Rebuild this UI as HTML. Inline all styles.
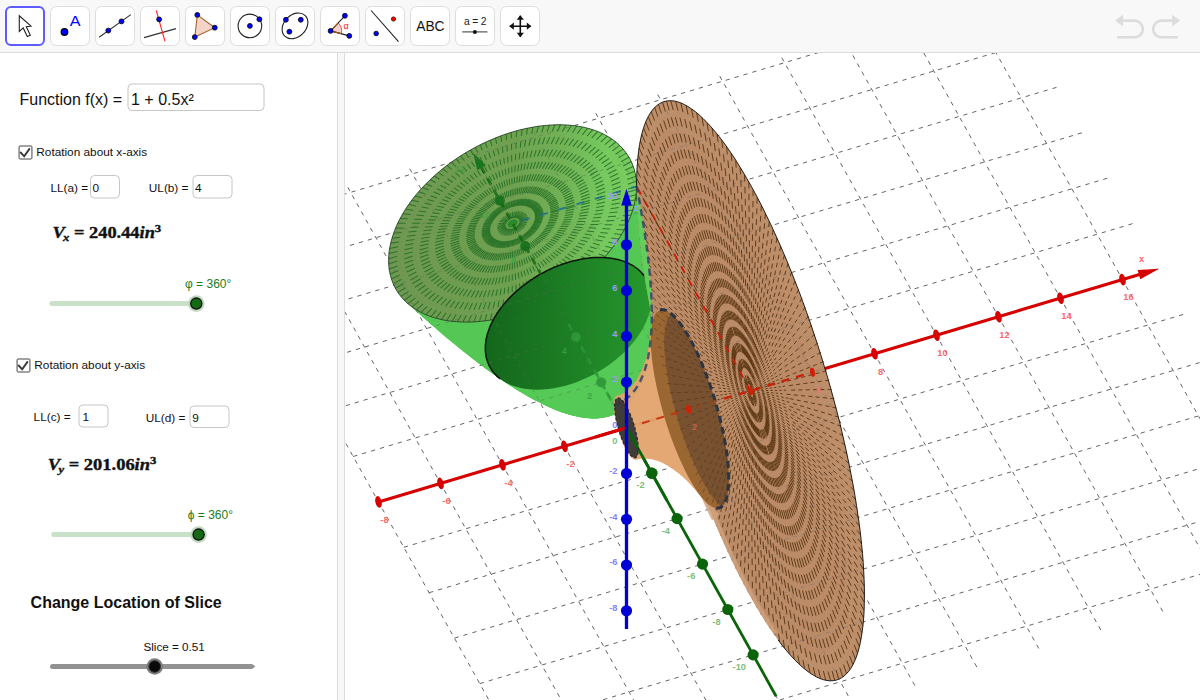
<!DOCTYPE html>
<html>
<head>
<meta charset="utf-8">
<title>Volumes of Revolution</title>
<style>
html,body{margin:0;padding:0;}
body{width:1200px;height:700px;overflow:hidden;background:#fff;font-family:"Liberation Sans",sans-serif;position:relative;color:#000;}
#toolbar{position:absolute;left:0;top:0;width:1200px;height:52px;background:#f8f8f8;border-bottom:1px solid #dcdcdc;}
.tb{position:absolute;top:6px;width:38px;height:38px;background:#fff;border:1px solid #dcdcdc;border-radius:6px;}
.tb.sel{border:2px solid #5b5bff;width:36px;height:36px;}
.tb svg{position:absolute;left:-1px;top:-1px;}
.tb.sel svg{left:-2px;top:-2px;}
#left{position:absolute;left:0;top:53px;width:337px;height:647px;background:#fff;}
#split{position:absolute;left:337px;top:53px;width:6px;height:647px;background:#f8f8f8;border-left:1px solid #dcdcdc;border-right:1px solid #dcdcdc;}
#view3d{position:absolute;left:345px;top:53px;}
.t{position:absolute;white-space:pre;line-height:1;}
.box{position:absolute;border:1px solid #c4c4c4;border-radius:4px;background:#fff;box-sizing:border-box;}
.cb{position:absolute;width:14px;height:14px;box-sizing:border-box;border:1px solid #6a6a6a;border-radius:2px;background:#fff;}
.m{font-family:"Liberation Serif",serif;font-weight:bold;}
.m i{font-style:italic;}
</style>
</head>
<body>
<div id="toolbar">
<svg width="1200" height="52" viewBox="0 0 1200 52" style="position:absolute;left:0;top:0" font-family="Liberation Sans, sans-serif"><rect x="6" y="7" width="38" height="38" rx="5" fill="#fff" stroke="#5c5cff" stroke-width="2"/><rect x="50.5" y="6.5" width="39" height="39" rx="6" fill="#fff" stroke="#dedede" stroke-width="1"/><rect x="95.5" y="6.5" width="39" height="39" rx="6" fill="#fff" stroke="#dedede" stroke-width="1"/><rect x="140.5" y="6.5" width="39" height="39" rx="6" fill="#fff" stroke="#dedede" stroke-width="1"/><rect x="185.5" y="6.5" width="39" height="39" rx="6" fill="#fff" stroke="#dedede" stroke-width="1"/><rect x="230.5" y="6.5" width="39" height="39" rx="6" fill="#fff" stroke="#dedede" stroke-width="1"/><rect x="275.5" y="6.5" width="39" height="39" rx="6" fill="#fff" stroke="#dedede" stroke-width="1"/><rect x="320.5" y="6.5" width="39" height="39" rx="6" fill="#fff" stroke="#dedede" stroke-width="1"/><rect x="365.5" y="6.5" width="39" height="39" rx="6" fill="#fff" stroke="#dedede" stroke-width="1"/><rect x="410.5" y="6.5" width="39" height="39" rx="6" fill="#fff" stroke="#dedede" stroke-width="1"/><rect x="455.5" y="6.5" width="39" height="39" rx="6" fill="#fff" stroke="#dedede" stroke-width="1"/><rect x="500.5" y="6.5" width="39" height="39" rx="6" fill="#fff" stroke="#dedede" stroke-width="1"/><path d="M19.3 15.8 L19.3 31.4 L23.2 27.9 L27.3 36.6 L30.3 35.2 L26.3 26.7 L31 26.2 Z" fill="#fff" stroke="#222" stroke-width="1.1" stroke-linejoin="miter"/><circle cx="64.5" cy="32" r="3.3" fill="#0000ff" stroke="#000" stroke-width="1.2"/><text x="69.7" y="25.7" font-size="14.3" fill="#0000ff" textLength="10.8" lengthAdjust="spacingAndGlyphs">A</text><line x1="99.1" y1="37.3" x2="130.8" y2="14.6" stroke="#333" stroke-width="1.1"/><circle cx="108.3" cy="30.6" r="2.45" fill="#0000ff" stroke="#000" stroke-width="0.8"/><circle cx="121.5" cy="21.4" r="2.45" fill="#0000ff" stroke="#000" stroke-width="0.8"/><line x1="144" y1="37.6" x2="176" y2="28.6" stroke="#333" stroke-width="1.1"/><line x1="156.2" y1="10.3" x2="165" y2="41.4" stroke="#ff2020" stroke-width="1.1"/><circle cx="159.1" cy="19.4" r="2.45" fill="#0000ff" stroke="#000" stroke-width="0.8"/><polygon points="197.3,14.9 214.8,27.7 194.8,37.1" fill="#f3d5c8" stroke="#a8642e" stroke-width="1.1"/><circle cx="197.3" cy="14.9" r="2.45" fill="#0000ff" stroke="#000" stroke-width="0.8"/><circle cx="214.8" cy="27.7" r="2.45" fill="#0000ff" stroke="#000" stroke-width="0.8"/><circle cx="194.8" cy="37.1" r="2.45" fill="#0000ff" stroke="#000" stroke-width="0.8"/><circle cx="249.9" cy="25.9" r="11.8" fill="none" stroke="#222" stroke-width="1.1"/><circle cx="249.9" cy="25.9" r="2.45" fill="#0000ff" stroke="#000" stroke-width="0.8"/><circle cx="259.4" cy="19.3" r="2.45" fill="#0000ff" stroke="#000" stroke-width="0.8"/><ellipse cx="295" cy="25.85" rx="14.5" ry="11" fill="none" stroke="#222" stroke-width="1.1" transform="rotate(-45 295 25.85)"/><circle cx="285.9" cy="19.8" r="2.45" fill="#0000ff" stroke="#000" stroke-width="0.8"/><circle cx="300.8" cy="19.8" r="2.45" fill="#0000ff" stroke="#000" stroke-width="0.8"/><circle cx="289.4" cy="31.7" r="2.45" fill="#0000ff" stroke="#000" stroke-width="0.8"/><path d="M330.6 30.9 L338.2 22.9 A11 11 0 0 1 341.2 33.7 Z" fill="#f6d2ca" stroke="#f04040" stroke-width="0.9"/><path d="M344.9 15.8 L330.6 30.9 L349.3 35.9" fill="none" stroke="#222" stroke-width="1.1"/><path d="M338.2 22.9 L330.6 30.9 L341.2 33.7" fill="none" stroke="#9a5a20" stroke-width="1.1"/><circle cx="330.6" cy="30.9" r="2.45" fill="#0000ff" stroke="#000" stroke-width="0.8"/><circle cx="344.9" cy="15.8" r="2.45" fill="#0000ff" stroke="#000" stroke-width="0.8"/><circle cx="349.3" cy="35.9" r="2.45" fill="#0000ff" stroke="#000" stroke-width="0.8"/><text x="346.1" y="28.9" font-size="9" fill="#ff1010" text-anchor="middle">α</text><line x1="371.1" y1="10.5" x2="398.5" y2="41.6" stroke="#222" stroke-width="1.1"/><circle cx="376.2" cy="33.5" r="2.3" fill="#0000ff" stroke="#000" stroke-width="0.8"/><circle cx="393.5" cy="19" r="2.1" fill="#ff0000" stroke="#400" stroke-width="0.8"/><text x="430.4" y="30.9" font-size="13.8" fill="#111" text-anchor="middle">ABC</text><text x="475.2" y="24.6" font-size="10.3" fill="#222" text-anchor="middle" textLength="22.5">a=2</text><line x1="462.2" y1="31.9" x2="487.5" y2="31.9" stroke="#444" stroke-width="1.1"/><circle cx="474.9" cy="31.9" r="2" fill="#111"/><path d="M509.8 26.2 h21 M520.3 15.7 v21" stroke="#111" stroke-width="1.6" fill="none"/><polygon points="531.3,26.2 526.8,29.8 526.8,22.6" fill="#111"/><polygon points="509.3,26.2 513.8,22.6 513.8,29.8" fill="#111"/><polygon points="520.3,37.2 516.7,32.7 523.9,32.7" fill="#111"/><polygon points="520.3,15.2 523.9,19.7 516.7,19.7" fill="#111"/><g fill="none" stroke="#dcdcdc" stroke-width="2.6"><path d="M1122 20.6 H1134.5 A7.6 7.6 0 0 1 1134.5 37.3 H1117.2"/><path d="M1174 20.6 H1161.5 A7.6 7.6 0 0 0 1161.5 37.3 H1178"/></g><polygon points="1115.2,20.6 1123,14.8 1123,26.4" fill="#dcdcdc"/><polygon points="1180,20.6 1172.2,14.8 1172.2,26.4" fill="#dcdcdc"/></svg>
</div>
<div id="left">
<svg width="337" height="647" viewBox="0 53 337 647" style="position:absolute;left:0;top:0" font-family="Liberation Sans, sans-serif"><text x="19.5" y="104.7" font-size="16" fill="#111" >Function f(x) =</text><rect x="128" y="84" width="136" height="26.5" rx="4" fill="#fff" stroke="#c6c6c6" stroke-width="1"/><text x="131" y="104.7" font-size="16" fill="#111" >1 + 0.5x²</text><rect x="19.1" y="146.1" width="12.8" height="12.8" rx="1.3" fill="#fff" stroke="#848484" stroke-width="1.5"/><path d="M20.2 152 l4 4.3 l5.6 -7.9" fill="none" stroke="#3a3a3a" stroke-width="1.9"/><text x="36.3" y="155.6" font-size="11.8" fill="#111" >Rotation about x-axis</text><text x="50.5" y="192" font-size="11.8" fill="#111" >LL(a) =</text><rect x="90.5" y="175.5" width="29" height="22.5" rx="4" fill="#fff" stroke="#c6c6c6" stroke-width="1"/><text x="92.6" y="192" font-size="11.8" fill="#111" >0</text><text x="148.8" y="192" font-size="11.8" fill="#111" >UL(b) =</text><rect x="193" y="175.5" width="39" height="22.5" rx="4" fill="#fff" stroke="#c6c6c6" stroke-width="1"/><text x="195" y="192" font-size="11.8" fill="#111" >4</text><text x="52.6" y="238" font-size="16" fill="#111" stroke="#111" stroke-width="0.35" font-family="Liberation Serif, serif" font-weight="bold" textLength="108.6" lengthAdjust="spacingAndGlyphs"><tspan font-style="italic">V</tspan><tspan font-style="italic" font-size="11" dy="2.6" dx="-1.5">x</tspan><tspan dy="-2.6"> = 240.44</tspan><tspan font-style="italic">in</tspan><tspan font-size="11" dy="-6">3</tspan></text><line x1="51.9" y1="303.6" x2="196.3" y2="303.6" stroke="#c9e0c9" stroke-width="5" stroke-linecap="round"/><circle cx="196.3" cy="303.6" r="8.3" fill="#b9d6b9" opacity="0.9"/><circle cx="196.3" cy="303.6" r="5.6" fill="#146a14" stroke="#101010" stroke-width="1.3"/><text x="185" y="288" font-size="12" fill="#1c7a1c" >φ = 360°</text><rect x="17.1" y="359.1" width="12.8" height="12.8" rx="1.3" fill="#fff" stroke="#848484" stroke-width="1.5"/><path d="M18.2 365 l4 4.3 l5.6 -7.9" fill="none" stroke="#3a3a3a" stroke-width="1.9"/><text x="34.3" y="368.7" font-size="11.8" fill="#111" >Rotation about y-axis</text><text x="33.6" y="421.2" font-size="11.8" fill="#111" >LL(c) =</text><rect x="79" y="405" width="29" height="22" rx="4" fill="#fff" stroke="#c6c6c6" stroke-width="1"/><text x="82.5" y="421.2" font-size="11.8" fill="#111" >1</text><text x="145.7" y="421.5" font-size="11.8" fill="#111" >UL(d) =</text><rect x="190" y="406" width="39" height="21.5" rx="4" fill="#fff" stroke="#c6c6c6" stroke-width="1"/><text x="192.3" y="421.5" font-size="11.8" fill="#111" >9</text><text x="47.8" y="470" font-size="16" fill="#111" stroke="#111" stroke-width="0.35" font-family="Liberation Serif, serif" font-weight="bold" textLength="108.6" lengthAdjust="spacingAndGlyphs"><tspan font-style="italic">V</tspan><tspan font-style="italic" font-size="11" dy="2.6" dx="-1.5">y</tspan><tspan dy="-2.6"> = 201.06</tspan><tspan font-style="italic">in</tspan><tspan font-size="11" dy="-6">3</tspan></text><line x1="53.7" y1="534.6" x2="198.6" y2="534.6" stroke="#c9e0c9" stroke-width="5" stroke-linecap="round"/><circle cx="198.6" cy="534.6" r="8.3" fill="#b9d6b9" opacity="0.9"/><circle cx="198.6" cy="534.6" r="5.6" fill="#146a14" stroke="#101010" stroke-width="1.3"/><text x="187.8" y="518.7" font-size="12" fill="#1c7a1c" >ϕ = 360°</text><text x="30.6" y="607.5" font-size="16" fill="#111" font-weight="bold">Change Location of Slice</text><text x="143.4" y="650.7" font-size="11.7" fill="#111" >Slice = 0.51</text><path d="M52.5 664 H252 L255.5 666.5 L252 669 H52.5 A2.5 2.5 0 0 1 52.5 664 Z" fill="#929292"/><circle cx="154.7" cy="666.5" r="8.3" fill="#7d7d7d"/><circle cx="154.7" cy="666.5" r="5.8" fill="#0a0a0a" stroke="#333" stroke-width="1"/></svg>
</div>
<div id="split"></div>
<svg id="view3d" width="855" height="647" viewBox="345 53 855 647"><g stroke="#666" stroke-width="1" stroke-dasharray="4.3 5" fill="none"><line x1="530.4" y1="774.4" x2="1311.6" y2="541" /><line x1="505.1" y1="729" x2="1286.3" y2="495.6" /><line x1="479.8" y1="683.6" x2="1261" y2="450.2" /><line x1="454.5" y1="638.1" x2="1235.7" y2="404.8" /><line x1="429.1" y1="592.7" x2="1210.3" y2="359.4" /><line x1="403.8" y1="547.3" x2="1185" y2="313.9" /><line x1="378.5" y1="501.9" x2="1159.7" y2="268.5" /><line x1="353.2" y1="456.5" x2="1134.4" y2="223.1" /><line x1="327.9" y1="411" x2="1109.1" y2="177.7" /><line x1="302.5" y1="365.6" x2="1083.7" y2="132.3" /><line x1="277.2" y1="320.2" x2="1058.4" y2="86.8" /><line x1="251.9" y1="274.8" x2="1033.1" y2="41.4" /><line x1="226.6" y1="229.4" x2="1007.8" y2="-4" /><line x1="542.8" y1="796.7" x2="223.4" y2="223.7" /><line x1="604.8" y1="778.1" x2="285.4" y2="205.2" /><line x1="666.8" y1="759.6" x2="347.4" y2="186.6" /><line x1="728.8" y1="741.1" x2="409.4" y2="168.1" /><line x1="790.8" y1="722.6" x2="471.4" y2="149.6" /><line x1="852.8" y1="704.1" x2="533.4" y2="131.1" /><line x1="914.8" y1="685.5" x2="595.4" y2="112.6" /><line x1="976.8" y1="667" x2="657.4" y2="94" /><line x1="1038.8" y1="648.5" x2="719.4" y2="75.5" /><line x1="1100.8" y1="630" x2="781.4" y2="57" /><line x1="1162.8" y1="611.5" x2="843.4" y2="38.5" /><line x1="1224.8" y1="592.9" x2="905.4" y2="20" /><line x1="1286.8" y1="574.4" x2="967.4" y2="1.4" /></g>
<line x1="378.5" y1="501.9" x2="1141.1" y2="274.1" stroke="#d60000" stroke-width="3.1"/>
<polygon points="1159.1,268.7 1140.3,279.3 1137.6,270.1" fill="#d60000"/>
<ellipse cx="378.5" cy="501.9" rx="3.1" ry="5.9" fill="#d60000" transform="rotate(-14 378.5 501.9)"/>
<ellipse cx="440.5" cy="483.4" rx="3.1" ry="5.9" fill="#d60000" transform="rotate(-14 440.5 483.4)"/>
<ellipse cx="502.5" cy="464.8" rx="3.1" ry="5.9" fill="#d60000" transform="rotate(-14 502.5 464.8)"/>
<ellipse cx="564.5" cy="446.3" rx="3.1" ry="5.9" fill="#d60000" transform="rotate(-14 564.5 446.3)"/>
<ellipse cx="688.5" cy="409.3" rx="3.1" ry="5.9" fill="#d60000" transform="rotate(-14 688.5 409.3)"/>
<ellipse cx="750.5" cy="390.8" rx="3.1" ry="5.9" fill="#d60000" transform="rotate(-14 750.5 390.8)"/>
<ellipse cx="812.5" cy="372.2" rx="3.1" ry="5.9" fill="#d60000" transform="rotate(-14 812.5 372.2)"/>
<ellipse cx="874.5" cy="353.7" rx="3.1" ry="5.9" fill="#d60000" transform="rotate(-14 874.5 353.7)"/>
<ellipse cx="936.5" cy="335.2" rx="3.1" ry="5.9" fill="#d60000" transform="rotate(-14 936.5 335.2)"/>
<ellipse cx="998.5" cy="316.7" rx="3.1" ry="5.9" fill="#d60000" transform="rotate(-14 998.5 316.7)"/>
<ellipse cx="1060.5" cy="298.2" rx="3.1" ry="5.9" fill="#d60000" transform="rotate(-14 1060.5 298.2)"/>
<ellipse cx="1122.5" cy="279.6" rx="3.1" ry="5.9" fill="#d60000" transform="rotate(-14 1122.5 279.6)"/>
<line x1="776.1" y1="696.2" x2="474.6" y2="155.3" stroke="#0a640a" stroke-width="2.8"/>
<circle cx="753.1" cy="654.9" r="5.6" fill="#0a640a"/>
<circle cx="727.8" cy="609.5" r="5.6" fill="#0a640a"/>
<circle cx="702.5" cy="564.1" r="5.6" fill="#0a640a"/>
<circle cx="677.1" cy="518.6" r="5.6" fill="#0a640a"/>
<circle cx="651.8" cy="473.2" r="5.6" fill="#0a640a"/>
<g fill="#50c650" opacity="0.97"><circle r="1" transform="matrix(1.77 -0.53 0 -1.31 613.8 405.1)"/><circle r="1" transform="matrix(3.54 -1.06 0 -2.61 613.8 404.9)"/><circle r="1" transform="matrix(5.31 -1.59 0 -3.92 613.7 404.8)"/><circle r="1" transform="matrix(7.09 -2.12 0 -5.23 613.5 404.5)"/><circle r="1" transform="matrix(8.86 -2.65 0 -6.53 613.3 404.2)"/><circle r="1" transform="matrix(10.63 -3.17 0 -7.84 613.1 403.8)"/><circle r="1" transform="matrix(12.4 -3.7 0 -9.15 612.8 403.3)"/><circle r="1" transform="matrix(14.17 -4.23 0 -10.45 612.5 402.7)"/><circle r="1" transform="matrix(15.94 -4.76 0 -11.76 612.2 402.1)"/><circle r="1" transform="matrix(17.71 -5.29 0 -13.07 611.8 401.4)"/><circle r="1" transform="matrix(19.49 -5.82 0 -14.38 611.3 400.6)"/><circle r="1" transform="matrix(21.26 -6.35 0 -15.68 610.9 399.8)"/><circle r="1" transform="matrix(23.03 -6.88 0 -16.99 610.3 398.8)"/><circle r="1" transform="matrix(24.8 -7.41 0 -18.3 609.8 397.8)"/><circle r="1" transform="matrix(26.57 -7.94 0 -19.6 609.2 396.7)"/><circle r="1" transform="matrix(28.34 -8.47 0 -20.91 608.5 395.6)"/><circle r="1" transform="matrix(30.11 -9 0 -22.22 607.9 394.4)"/><circle r="1" transform="matrix(31.89 -9.52 0 -23.52 607.1 393.1)"/><circle r="1" transform="matrix(33.66 -10.05 0 -24.83 606.4 391.7)"/><circle r="1" transform="matrix(35.43 -10.58 0 -26.14 605.6 390.3)"/><circle r="1" transform="matrix(37.2 -11.11 0 -27.44 604.7 388.7)"/><circle r="1" transform="matrix(38.97 -11.64 0 -28.75 603.8 387.1)"/><circle r="1" transform="matrix(40.74 -12.17 0 -30.06 602.9 385.5)"/><circle r="1" transform="matrix(42.51 -12.7 0 -31.36 601.9 383.7)"/><circle r="1" transform="matrix(44.29 -13.23 0 -32.67 600.9 381.9)"/><circle r="1" transform="matrix(46.06 -13.76 0 -33.98 599.9 380)"/><circle r="1" transform="matrix(47.83 -14.29 0 -35.29 598.8 378.1)"/><circle r="1" transform="matrix(49.6 -14.82 0 -36.59 597.6 376)"/><circle r="1" transform="matrix(51.37 -15.35 0 -37.9 596.5 373.9)"/><circle r="1" transform="matrix(53.14 -15.87 0 -39.21 595.2 371.7)"/><circle r="1" transform="matrix(54.91 -16.4 0 -40.51 594 369.5)"/><circle r="1" transform="matrix(56.69 -16.93 0 -41.82 592.7 367.1)"/><circle r="1" transform="matrix(58.46 -17.46 0 -43.13 591.3 364.7)"/><circle r="1" transform="matrix(60.23 -17.99 0 -44.43 589.9 362.2)"/><circle r="1" transform="matrix(62 -18.52 0 -45.74 588.5 359.7)"/><circle r="1" transform="matrix(63.77 -19.05 0 -47.05 587.1 357)"/><circle r="1" transform="matrix(65.54 -19.58 0 -48.35 585.5 354.3)"/><circle r="1" transform="matrix(67.31 -20.11 0 -49.66 584 351.6)"/><circle r="1" transform="matrix(69.09 -20.64 0 -50.97 582.4 348.7)"/><circle r="1" transform="matrix(70.86 -21.17 0 -52.27 580.8 345.8)"/><circle r="1" transform="matrix(72.63 -21.69 0 -53.58 579.1 342.8)"/><circle r="1" transform="matrix(74.4 -22.22 0 -54.89 577.4 339.7)"/><circle r="1" transform="matrix(76.17 -22.75 0 -56.19 575.6 336.5)"/><circle r="1" transform="matrix(77.94 -23.28 0 -57.5 573.8 333.3)"/><circle r="1" transform="matrix(79.71 -23.81 0 -58.81 572 330)"/><circle r="1" transform="matrix(81.49 -24.34 0 -60.12 570.1 326.6)"/><circle r="1" transform="matrix(83.26 -24.87 0 -61.42 568.2 323.2)"/><circle r="1" transform="matrix(85.03 -25.4 0 -62.73 566.2 319.7)"/><circle r="1" transform="matrix(86.8 -25.93 0 -64.04 564.2 316.1)"/><circle r="1" transform="matrix(88.57 -26.46 0 -65.34 562.2 312.4)"/><circle r="1" transform="matrix(90.34 -26.99 0 -66.65 560.1 308.7)"/><circle r="1" transform="matrix(92.11 -27.52 0 -67.96 557.9 304.8)"/><circle r="1" transform="matrix(93.89 -28.04 0 -69.26 555.8 300.9)"/><circle r="1" transform="matrix(95.66 -28.57 0 -70.57 553.6 297)"/><circle r="1" transform="matrix(97.43 -29.1 0 -71.88 551.3 292.9)"/><circle r="1" transform="matrix(99.2 -29.63 0 -73.18 549 288.8)"/><circle r="1" transform="matrix(100.97 -30.16 0 -74.49 546.7 284.6)"/><circle r="1" transform="matrix(102.74 -30.69 0 -75.8 544.3 280.4)"/><circle r="1" transform="matrix(104.51 -31.22 0 -77.1 541.9 276)"/><circle r="1" transform="matrix(106.29 -31.75 0 -78.41 539.4 271.6)"/><circle r="1" transform="matrix(108.06 -32.28 0 -79.72 536.9 267.1)"/><circle r="1" transform="matrix(109.83 -32.81 0 -81.03 534.4 262.6)"/><circle r="1" transform="matrix(111.6 -33.34 0 -82.33 531.8 257.9)"/><circle r="1" transform="matrix(113.37 -33.87 0 -83.64 529.2 253.2)"/><circle r="1" transform="matrix(115.14 -34.39 0 -84.95 526.5 248.4)"/><circle r="1" transform="matrix(116.91 -34.92 0 -86.25 523.8 243.6)"/><circle r="1" transform="matrix(118.69 -35.45 0 -87.56 521.1 238.6)"/><circle r="1" transform="matrix(120.46 -35.98 0 -88.87 518.3 233.6)"/><circle r="1" transform="matrix(122.23 -36.51 0 -90.17 515.4 228.6)"/><circle r="1" transform="matrix(124 -37.04 0 -91.48 512.6 223.4)"/></g>
<defs><linearGradient id="gdisc" gradientUnits="userSpaceOnUse" x1="390" y1="0" x2="640" y2="0"><stop offset="0" stop-color="#709652"/><stop offset="0.5" stop-color="#70a050"/><stop offset="0.7" stop-color="#74b257"/><stop offset="0.85" stop-color="#78c85f"/><stop offset="1" stop-color="#7ccf62"/></linearGradient></defs>
<polygon points="636.6,186.4 636.3,180.1 635.4,174 633.9,168.2 631.8,162.6 629.1,157.3 625.8,152.4 622,147.8 617.7,143.5 612.9,139.7 607.5,136.2 601.8,133.2 595.5,130.6 588.9,128.5 581.9,126.9 574.6,125.7 566.9,125 559,124.7 550.9,125 542.6,125.7 534.1,126.9 525.5,128.6 516.9,130.7 508.2,133.3 499.6,136.3 491,139.8 482.6,143.6 474.2,147.9 466.1,152.5 458.2,157.4 450.6,162.7 443.2,168.3 436.2,174.1 429.6,180.2 423.4,186.5 417.6,193 412.2,199.6 407.4,206.3 403.1,213.2 399.3,220 396,226.9 393.4,233.8 391.3,240.6 389.8,247.4 388.9,254 388.6,260.5 388.9,266.7 389.8,272.8 391.3,278.7 393.4,284.2 396,289.5 399.3,294.5 403.1,299.1 407.4,303.3 412.2,307.1 417.6,310.6 423.4,313.6 429.6,316.2 436.2,318.3 443.2,320 450.6,321.2 458.2,321.9 466.1,322.1 474.2,321.9 482.6,321.1 491,319.9 499.6,318.3 508.2,316.1 516.9,313.5 525.5,310.5 534.1,307.1 542.6,303.2 550.9,299 559,294.4 566.9,289.4 574.6,284.1 581.9,278.5 588.9,272.7 595.5,266.6 601.8,260.3 607.5,253.8 612.9,247.2 617.7,240.5 622,233.7 625.8,226.8 629.1,219.9 631.8,213 633.9,206.2 635.4,199.5 636.3,192.8 636.6,186.4" fill="url(#gdisc)" opacity="0.97"/>
<path d="M628 188.9l8.5 -2.5M612.5 193.6l8.5 -2.5M597 198.2l8.5 -2.5M581.5 202.8l8.5 -2.5M566 207.5l8.5 -2.5M550.5 212.1l8.5 -2.5M535 216.7l8.5 -2.5M519.5 221.3l8.5 -2.5M627.8 184.2l8.5 -2.9M612.3 189.4l8.5 -2.9M596.8 194.7l8.5 -2.9M581.3 200l8.5 -2.9M565.9 205.2l8.5 -2.9M550.4 210.5l8.5 -2.9M534.9 215.8l8.5 -2.9M627.2 179.4l8.5 -3.2M611.8 185.3l8.5 -3.2M596.4 191.2l8.5 -3.2M581 197.2l8.5 -3.2M565.6 203.1l8.5 -3.2M550.2 209l8.5 -3.2M534.8 214.9l8.5 -3.2M626.2 174.8l8.4 -3.6M611 181.3l8.4 -3.6M595.7 187.9l8.4 -3.6M580.4 194.4l8.4 -3.6M565.2 200.9l8.4 -3.6M549.9 207.4l8.4 -3.6M534.6 214l8.4 -3.6M519.4 220.5l8.4 -3.6M624.9 170.3l8.3 -3.9M609.8 177.4l8.3 -3.9M594.7 184.6l8.3 -3.9M579.6 191.7l8.3 -3.9M564.5 198.8l8.3 -3.9M549.4 206l8.3 -3.9M534.4 213.1l8.3 -3.9M623.1 166l8.2 -4.2M608.3 173.7l8.2 -4.2M593.4 181.4l8.2 -4.2M578.6 189.1l8.2 -4.2M563.7 196.8l8.2 -4.2M548.9 204.5l8.2 -4.2M534 212.3l8.2 -4.2M621 161.8l8 -4.5M606.4 170.1l8 -4.5M591.8 178.4l8 -4.5M577.3 186.6l8 -4.5M562.7 194.9l8 -4.5M548.2 203.2l8 -4.5M533.6 211.5l8 -4.5M519 219.7l8 -4.5M618.4 157.9l7.8 -4.8M604.2 166.7l7.8 -4.8M590 175.5l7.8 -4.8M575.8 184.3l7.8 -4.8M561.6 193.1l7.8 -4.8M547.3 201.9l7.8 -4.8M533.1 210.7l7.8 -4.8M615.5 154.2l7.6 -5.1M601.7 163.5l7.6 -5.1M587.9 172.8l7.6 -5.1M574 182.1l7.6 -5.1M560.2 191.4l7.6 -5.1M546.4 200.7l7.6 -5.1M532.5 210l7.6 -5.1M612.3 150.8l7.4 -5.4M598.9 160.5l7.4 -5.4M585.5 170.3l7.4 -5.4M572.1 180.1l7.4 -5.4M558.7 189.8l7.4 -5.4M545.3 199.6l7.4 -5.4M531.9 209.3l7.4 -5.4M518.5 219.1l7.4 -5.4M608.7 147.6l7.1 -5.6M595.8 157.8l7.1 -5.6M582.9 168l7.1 -5.6M570 178.2l7.1 -5.6M557.1 188.3l7.1 -5.6M544.1 198.5l7.1 -5.6M531.2 208.7l7.1 -5.6M604.8 144.7l6.8 -5.8M592.4 155.3l6.8 -5.8M580 165.9l6.8 -5.8M567.7 176.4l6.8 -5.8M555.3 187l6.8 -5.8M542.9 197.6l6.8 -5.8M530.5 208.1l6.8 -5.8M600.7 142.1l6.5 -6M588.9 153.1l6.5 -6M577 164l6.5 -6M565.2 174.9l6.5 -6M553.3 185.8l6.5 -6M541.5 196.7l6.5 -6M529.7 207.6l6.5 -6M517.8 218.6l6.5 -6M596.4 139.8l6.2 -6.2M585.1 151.1l6.2 -6.2M573.8 162.3l6.2 -6.2M562.6 173.5l6.2 -6.2M551.3 184.7l6.2 -6.2M540.1 196l6.2 -6.2M528.8 207.2l6.2 -6.2M591.8 137.9l5.9 -6.3M581.2 149.4l5.9 -6.3M570.5 160.8l5.9 -6.3M559.9 172.3l5.9 -6.3M549.2 183.8l5.9 -6.3M538.6 195.3l5.9 -6.3M527.9 206.8l5.9 -6.3M587.1 136.2l5.5 -6.4M577.1 147.9l5.5 -6.4M567.1 159.6l5.5 -6.4M557.1 171.3l5.5 -6.4M547.1 183l5.5 -6.4M537.1 194.8l5.5 -6.4M527 206.5l5.5 -6.4M517 218.2l5.5 -6.4M582.3 134.8l5.2 -6.5M573 146.7l5.2 -6.5M563.6 158.6l5.2 -6.5M554.2 170.5l5.2 -6.5M544.8 182.4l5.2 -6.5M535.5 194.3l5.2 -6.5M526.1 206.2l5.2 -6.5M577.4 133.6l4.8 -6.6M568.7 145.7l4.8 -6.6M560 157.7l4.8 -6.6M551.3 169.8l4.8 -6.6M542.6 181.9l4.8 -6.6M533.9 193.9l4.8 -6.6M525.1 206l4.8 -6.6M572.4 132.7l4.4 -6.7M564.4 144.9l4.4 -6.7M556.4 157.1l4.4 -6.7M548.3 169.3l4.4 -6.7M540.3 181.5l4.4 -6.7M532.2 193.6l4.4 -6.7M524.2 205.8l4.4 -6.7M516.1 218l4.4 -6.7M567.4 132.1l4.1 -6.7M560 144.4l4.1 -6.7M552.7 156.6l4.1 -6.7M545.3 168.9l4.1 -6.7M537.9 181.2l4.1 -6.7M530.6 193.4l4.1 -6.7M523.2 205.7l4.1 -6.7M562.3 131.7l3.7 -6.8M555.6 144l3.7 -6.8M549 156.4l3.7 -6.8M542.3 168.7l3.7 -6.8M535.6 181l3.7 -6.8M528.9 193.3l3.7 -6.8M522.2 205.6l3.7 -6.8M557.2 131.6l3.3 -6.8M551.2 143.9l3.3 -6.8M545.2 156.2l3.3 -6.8M539.2 168.6l3.3 -6.8M533.2 180.9l3.3 -6.8M527.2 193.2l3.3 -6.8M521.2 205.6l3.3 -6.8M515.2 217.9l3.3 -6.8M552.1 131.6l2.9 -6.8M546.8 143.9l2.9 -6.8M541.5 156.3l2.9 -6.8M536.2 168.6l2.9 -6.8M530.9 180.9l2.9 -6.8M525.5 193.3l2.9 -6.8M520.2 205.6l2.9 -6.8M547 131.9l2.5 -6.8M542.3 144.2l2.5 -6.8M537.7 156.5l2.5 -6.8M533.1 168.8l2.5 -6.8M528.5 181.1l2.5 -6.8M523.9 193.3l2.5 -6.8M519.2 205.6l2.5 -6.8M541.8 132.3l2.2 -6.7M537.9 144.6l2.2 -6.7M534 156.8l2.2 -6.7M530 169l2.2 -6.7M526.1 181.3l2.2 -6.7M522.2 193.5l2.2 -6.7M518.2 205.7l2.2 -6.7M514.3 218l2.2 -6.7M536.7 132.9l1.8 -6.7M533.5 145.1l1.8 -6.7M530.2 157.3l1.8 -6.7M527 169.4l1.8 -6.7M523.7 181.6l1.8 -6.7M520.5 193.7l1.8 -6.7M517.2 205.9l1.8 -6.7M531.6 133.8l1.4 -6.6M529 145.8l1.4 -6.6M526.5 157.8l1.4 -6.6M523.9 169.9l1.4 -6.6M521.4 181.9l1.4 -6.6M518.8 194l1.4 -6.6M516.3 206l1.4 -6.6M526.5 134.7l1 -6.6M524.6 146.6l1 -6.6M522.8 158.6l1 -6.6M520.9 170.5l1 -6.6M519 182.4l1 -6.6M517.1 194.3l1 -6.6M515.3 206.2l1 -6.6M513.4 218.1l1 -6.6M521.4 135.9l0.7 -6.5M520.3 147.6l0.7 -6.5M519.1 159.4l0.7 -6.5M517.9 171.1l0.7 -6.5M516.7 182.9l0.7 -6.5M515.5 194.7l0.7 -6.5M514.3 206.4l0.7 -6.5M516.4 137.2l0.3 -6.4M515.9 148.8l0.3 -6.4M515.4 160.3l0.3 -6.4M514.9 171.9l0.3 -6.4M514.3 183.5l0.3 -6.4M513.8 195.1l0.3 -6.4M513.3 206.7l0.3 -6.4M511.4 138.6l-0.1 -6.3M511.6 150l-0.1 -6.3M511.7 161.4l-0.1 -6.3M511.9 172.8l-0.1 -6.3M512 184.2l-0.1 -6.3M512.2 195.6l-0.1 -6.3M512.3 207l-0.1 -6.3M512.5 218.3l-0.1 -6.3M506.5 140.2l-0.4 -6.1M507.3 151.4l-0.4 -6.1M508.1 162.6l-0.4 -6.1M508.9 173.7l-0.4 -6.1M509.7 184.9l-0.4 -6.1M510.6 196.1l-0.4 -6.1M511.4 207.3l-0.4 -6.1M501.6 141.9l-0.8 -6M503 152.9l-0.8 -6M504.5 163.8l-0.8 -6M506 174.8l-0.8 -6M507.5 185.7l-0.8 -6M508.9 196.7l-0.8 -6M510.4 207.6l-0.8 -6M496.7 143.8l-1.2 -5.9M498.8 154.5l-1.2 -5.9M501 165.2l-1.2 -5.9M503.1 175.9l-1.2 -5.9M505.2 186.6l-1.2 -5.9M507.4 197.3l-1.2 -5.9M509.5 208l-1.2 -5.9M511.6 218.7l-1.2 -5.9M491.9 145.8l-1.5 -5.7M494.7 156.2l-1.5 -5.7M497.4 166.7l-1.5 -5.7M500.2 177.1l-1.5 -5.7M503 187.5l-1.5 -5.7M505.8 197.9l-1.5 -5.7M508.5 208.4l-1.5 -5.7M487.1 148l-1.9 -5.6M490.6 158.1l-1.9 -5.6M494 168.2l-1.9 -5.6M497.4 178.4l-1.9 -5.6M500.8 188.5l-1.9 -5.6M504.2 198.6l-1.9 -5.6M507.6 208.8l-1.9 -5.6M482.4 150.2l-2.2 -5.4M486.5 160.1l-2.2 -5.4M490.5 169.9l-2.2 -5.4M494.6 179.7l-2.2 -5.4M498.6 189.5l-2.2 -5.4M502.7 199.4l-2.2 -5.4M506.7 209.2l-2.2 -5.4M510.8 219l-2.2 -5.4M477.8 152.6l-2.6 -5.2M482.5 162.1l-2.6 -5.2M487.1 171.6l-2.6 -5.2M491.8 181.1l-2.6 -5.2M496.5 190.6l-2.6 -5.2M501.1 200.2l-2.6 -5.2M505.8 209.7l-2.6 -5.2M473.2 155.1l-2.9 -5M478.5 164.3l-2.9 -5M483.8 173.5l-2.9 -5M489.1 182.6l-2.9 -5M494.4 191.8l-2.9 -5M499.6 201l-2.9 -5M504.9 210.2l-2.9 -5M468.7 157.7l-3.2 -4.9M474.6 166.6l-3.2 -4.9M480.5 175.4l-3.2 -4.9M486.4 184.2l-3.2 -4.9M492.3 193l-3.2 -4.9M498.2 201.8l-3.2 -4.9M504.1 210.7l-3.2 -4.9M509.9 219.5l-3.2 -4.9M464.3 160.5l-3.6 -4.6M470.8 168.9l-3.6 -4.6M477.3 177.4l-3.6 -4.6M483.8 185.8l-3.6 -4.6M490.2 194.3l-3.6 -4.6M496.7 202.7l-3.6 -4.6M503.2 211.2l-3.6 -4.6M460 163.3l-3.9 -4.4M467 171.4l-3.9 -4.4M474.1 179.5l-3.9 -4.4M481.2 187.5l-3.9 -4.4M488.2 195.6l-3.9 -4.4M495.3 203.7l-3.9 -4.4M502.4 211.7l-3.9 -4.4M455.7 166.3l-4.2 -4.2M463.4 174l-4.2 -4.2M471 181.6l-4.2 -4.2M478.6 189.3l-4.2 -4.2M486.3 197l-4.2 -4.2M493.9 204.7l-4.2 -4.2M501.5 212.3l-4.2 -4.2M509.2 220l-4.2 -4.2M451.5 169.4l-4.5 -4M459.7 176.6l-4.5 -4M467.9 183.9l-4.5 -4M476.1 191.2l-4.5 -4M484.3 198.4l-4.5 -4M492.5 205.7l-4.5 -4M500.7 212.9l-4.5 -4M447.5 172.6l-4.8 -3.8M456.2 179.4l-4.8 -3.8M464.9 186.2l-4.8 -3.8M473.7 193.1l-4.8 -3.8M482.4 199.9l-4.8 -3.8M491.2 206.7l-4.8 -3.8M499.9 213.5l-4.8 -3.8M443.5 175.9l-5.1 -3.5M452.7 182.2l-5.1 -3.5M462 188.6l-5.1 -3.5M471.3 195l-5.1 -3.5M480.6 201.4l-5.1 -3.5M489.9 207.8l-5.1 -3.5M499.2 214.2l-5.1 -3.5M508.4 220.6l-5.1 -3.5M439.6 179.3l-5.4 -3.3M449.4 185.2l-5.4 -3.3M459.2 191.1l-5.4 -3.3M469 197.1l-5.4 -3.3M478.8 203l-5.4 -3.3M488.6 208.9l-5.4 -3.3M498.4 214.8l-5.4 -3.3M435.8 182.8l-5.7 -3M446.1 188.2l-5.7 -3M456.4 193.7l-5.7 -3M466.7 199.1l-5.7 -3M477 204.6l-5.7 -3M487.4 210.1l-5.7 -3M497.7 215.5l-5.7 -3M432.1 186.4l-5.9 -2.7M442.9 191.4l-5.9 -2.7M453.7 196.3l-5.9 -2.7M464.5 201.3l-5.9 -2.7M475.3 206.3l-5.9 -2.7M486.1 211.2l-5.9 -2.7M497 216.2l-5.9 -2.7M507.8 221.2l-5.9 -2.7M428.6 190.1l-6.2 -2.5M439.9 194.6l-6.2 -2.5M451.1 199l-6.2 -2.5M462.4 203.5l-6.2 -2.5M473.7 208l-6.2 -2.5M485 212.5l-6.2 -2.5M496.3 216.9l-6.2 -2.5M425.2 193.9l-6.5 -2.2M436.9 197.9l-6.5 -2.2M448.7 201.8l-6.5 -2.2M460.4 205.8l-6.5 -2.2M472.1 209.8l-6.5 -2.2M483.9 213.7l-6.5 -2.2M495.6 217.7l-6.5 -2.2M421.9 197.8l-6.7 -1.9M434.1 201.3l-6.7 -1.9M446.3 204.7l-6.7 -1.9M458.4 208.1l-6.7 -1.9M470.6 211.6l-6.7 -1.9M482.8 215l-6.7 -1.9M495 218.4l-6.7 -1.9M507.1 221.9l-6.7 -1.9M418.8 201.8l-6.9 -1.6M431.4 204.7l-6.9 -1.6M444 207.6l-6.9 -1.6M456.6 210.5l-6.9 -1.6M469.2 213.4l-6.9 -1.6M481.8 216.3l-6.9 -1.6M494.4 219.2l-6.9 -1.6M415.8 205.9l-7.1 -1.3M428.8 208.3l-7.1 -1.3M441.8 210.6l-7.1 -1.3M454.8 213l-7.1 -1.3M467.8 215.3l-7.1 -1.3M480.8 217.7l-7.1 -1.3M493.8 220l-7.1 -1.3M413 210.2l-7.4 -1M426.3 211.9l-7.4 -1M439.7 213.7l-7.4 -1M453.1 215.5l-7.4 -1M466.5 217.3l-7.4 -1M479.9 219.1l-7.4 -1M493.2 220.8l-7.4 -1M506.6 222.6l-7.4 -1M410.3 214.5l-7.6 -0.7M424.1 215.7l-7.6 -0.7M437.8 216.9l-7.6 -0.7M451.5 218.1l-7.6 -0.7M465.3 219.3l-7.6 -0.7M479 220.5l-7.6 -0.7M492.7 221.7l-7.6 -0.7M407.9 218.8l-7.7 -0.3M421.9 219.5l-7.7 -0.3M436 220.1l-7.7 -0.3M450.1 220.7l-7.7 -0.3M464.1 221.3l-7.7 -0.3M478.2 221.9l-7.7 -0.3M492.2 222.5l-7.7 -0.3M405.6 223.3l-7.9 -0M420 223.3l-7.9 -0M434.4 223.3l-7.9 -0M448.7 223.4l-7.9 -0M463.1 223.4l-7.9 -0M477.4 223.4l-7.9 -0M491.8 223.4l-7.9 -0M506.2 223.4l-7.9 -0M403.6 227.9l-8 0.3M418.3 227.3l-8 0.3M432.9 226.7l-8 0.3M447.5 226.1l-8 0.3M462.2 225.5l-8 0.3M476.8 224.9l-8 0.3M491.4 224.3l-8 0.3M401.8 232.5l-8.2 0.7M416.7 231.3l-8.2 0.7M431.6 230.1l-8.2 0.7M446.5 228.8l-8.2 0.7M461.3 227.6l-8.2 0.7M476.2 226.4l-8.2 0.7M491.1 225.2l-8.2 0.7M400.3 237.2l-8.3 1M415.4 235.3l-8.3 1M430.5 233.5l-8.3 1M445.5 231.6l-8.3 1M460.6 229.8l-8.3 1M475.7 227.9l-8.3 1M490.8 226.1l-8.3 1M505.9 224.2l-8.3 1M399.1 241.9l-8.4 1.4M414.3 239.4l-8.4 1.4M429.6 237l-8.4 1.4M444.8 234.5l-8.4 1.4M460 232l-8.4 1.4M475.3 229.5l-8.4 1.4M490.5 227l-8.4 1.4M398.1 246.7l-8.5 1.7M413.5 243.6l-8.5 1.7M428.9 240.5l-8.5 1.7M444.2 237.3l-8.5 1.7M459.6 234.2l-8.5 1.7M475 231.1l-8.5 1.7M490.3 227.9l-8.5 1.7M397.5 251.5l-8.5 2.1M412.9 247.7l-8.5 2.1M428.4 244l-8.5 2.1M443.8 240.2l-8.5 2.1M459.3 236.4l-8.5 2.1M474.8 232.6l-8.5 2.1M490.2 228.9l-8.5 2.1M505.7 225.1l-8.5 2.1M397.2 256.3l-8.5 2.4M412.7 251.9l-8.5 2.4M428.2 247.5l-8.5 2.4M443.7 243.1l-8.5 2.4M459.2 238.6l-8.5 2.4M474.7 234.2l-8.5 2.4M490.2 229.8l-8.5 2.4M397.2 261.1l-8.5 2.8M412.7 256.1l-8.5 2.8M428.2 251l-8.5 2.8M443.7 245.9l-8.5 2.8M459.2 240.9l-8.5 2.8M474.7 235.8l-8.5 2.8M490.2 230.7l-8.5 2.8M397.7 265.9l-8.5 3.1M413.1 260.2l-8.5 3.1M428.6 254.5l-8.5 3.1M444 248.8l-8.5 3.1M459.4 243.1l-8.5 3.1M474.8 237.4l-8.5 3.1M490.3 231.7l-8.5 3.1M505.7 225.9l-8.5 3.1M398.5 270.6l-8.4 3.5M413.8 264.2l-8.4 3.5M429.2 257.9l-8.4 3.5M444.5 251.6l-8.4 3.5M459.8 245.2l-8.4 3.5M475.1 238.9l-8.4 3.5M490.4 232.6l-8.4 3.5M399.8 275.1l-8.3 3.8M414.9 268.2l-8.3 3.8M430.1 261.2l-8.3 3.8M445.2 254.3l-8.3 3.8M460.4 247.3l-8.3 3.8M475.5 240.4l-8.3 3.8M490.7 233.4l-8.3 3.8M401.4 279.5l-8.2 4.1M416.3 272l-8.2 4.1M431.3 264.4l-8.2 4.1M446.2 256.9l-8.2 4.1M461.1 249.4l-8.2 4.1M476.1 241.8l-8.2 4.1M491 234.3l-8.2 4.1M505.9 226.8l-8.2 4.1M403.4 283.7l-8.1 4.5M418.1 275.6l-8.1 4.5M432.8 267.5l-8.1 4.5M447.4 259.4l-8.1 4.5M462.1 251.3l-8.1 4.5M476.7 243.2l-8.1 4.5M491.4 235.1l-8.1 4.5M405.8 287.7l-7.9 4.7M420.2 279l-7.9 4.7M434.5 270.4l-7.9 4.7M448.8 261.8l-7.9 4.7M463.2 253.1l-7.9 4.7M477.5 244.5l-7.9 4.7M491.8 235.9l-7.9 4.7M408.6 291.4l-7.7 5M422.6 282.3l-7.7 5M436.5 273.2l-7.7 5M450.5 264l-7.7 5M464.5 254.9l-7.7 5M478.4 245.7l-7.7 5M492.4 236.6l-7.7 5M506.3 227.5l-7.7 5M411.7 295l-7.4 5.3M425.3 285.3l-7.4 5.3M438.8 275.7l-7.4 5.3M452.4 266.1l-7.4 5.3M465.9 256.5l-7.4 5.3M479.5 246.9l-7.4 5.3M493 237.3l-7.4 5.3M415.2 298.2l-7.2 5.5M428.3 288.2l-7.2 5.5M441.4 278.1l-7.2 5.5M454.4 268.1l-7.2 5.5M467.5 258l-7.2 5.5M480.6 248l-7.2 5.5M493.7 237.9l-7.2 5.5M419 301.2l-6.9 5.7M431.6 290.8l-6.9 5.7M444.1 280.3l-6.9 5.7M456.7 269.9l-6.9 5.7M469.3 259.4l-6.9 5.7M481.8 249l-6.9 5.7M494.4 238.5l-6.9 5.7M507 228.1l-6.9 5.7M423.1 303.9l-6.6 5.9M435.1 293.1l-6.6 5.9M447.1 282.3l-6.6 5.9M459.1 271.5l-6.6 5.9M471.1 260.6l-6.6 5.9M483.2 249.8l-6.6 5.9M495.2 239l-6.6 5.9M427.3 306.3l-6.3 6.1M438.8 295.1l-6.3 6.1M450.2 284l-6.3 6.1M461.7 272.9l-6.3 6.1M473.1 261.8l-6.3 6.1M484.6 250.6l-6.3 6.1M496 239.5l-6.3 6.1M431.8 308.4l-6 6.3M442.7 296.9l-6 6.3M453.5 285.5l-6 6.3M464.4 274.1l-6 6.3M475.2 262.7l-6 6.3M486 251.3l-6 6.3M496.9 239.9l-6 6.3M507.7 228.5l-6 6.3M436.5 310.1l-5.6 6.4M446.7 298.5l-5.6 6.4M456.9 286.8l-5.6 6.4M467.1 275.2l-5.6 6.4M477.3 263.5l-5.6 6.4M487.6 251.9l-5.6 6.4M497.8 240.2l-5.6 6.4M441.2 311.6l-5.3 6.5M450.8 299.8l-5.3 6.5M460.4 287.9l-5.3 6.5M470 276.1l-5.3 6.5M479.6 264.2l-5.3 6.5M489.1 252.4l-5.3 6.5M498.7 240.5l-5.3 6.5M446.1 312.9l-4.9 6.6M455 300.8l-4.9 6.6M464 288.8l-4.9 6.6M472.9 276.8l-4.9 6.6M481.8 264.8l-4.9 6.6M490.7 252.8l-4.9 6.6M499.7 240.8l-4.9 6.6M508.6 228.8l-4.9 6.6M451.1 313.8l-4.5 6.7M459.3 301.7l-4.5 6.7M467.6 289.5l-4.5 6.7M475.8 277.4l-4.5 6.7M484.1 265.2l-4.5 6.7M492.4 253.1l-4.5 6.7M500.6 241l-4.5 6.7M456.1 314.5l-4.2 6.7M463.7 302.3l-4.2 6.7M471.3 290l-4.2 6.7M478.8 277.8l-4.2 6.7M486.4 265.6l-4.2 6.7M494 253.3l-4.2 6.7M501.6 241.1l-4.2 6.7M461.2 315l-3.8 6.8M468.1 302.7l-3.8 6.8M475 290.4l-3.8 6.8M481.9 278.1l-3.8 6.8M488.8 265.8l-3.8 6.8M495.7 253.5l-3.8 6.8M502.6 241.2l-3.8 6.8M509.5 228.9l-3.8 6.8M466.3 315.2l-3.4 6.8M472.5 302.9l-3.4 6.8M478.7 290.6l-3.4 6.8M484.9 278.2l-3.4 6.8M491.1 265.9l-3.4 6.8M497.4 253.6l-3.4 6.8M503.6 241.2l-3.4 6.8M471.4 315.2l-3 6.8M476.9 302.9l-3 6.8M482.4 290.6l-3 6.8M488 278.2l-3 6.8M493.5 265.9l-3 6.8M499 253.6l-3 6.8M504.6 241.2l-3 6.8M476.5 315.1l-2.7 6.8M481.4 302.7l-2.7 6.8M486.2 290.4l-2.7 6.8M491 278.1l-2.7 6.8M495.9 265.8l-2.7 6.8M500.7 253.5l-2.7 6.8M505.6 241.2l-2.7 6.8M510.4 228.9l-2.7 6.8M481.7 314.7l-2.3 6.7M485.8 302.4l-2.3 6.7M490 290.2l-2.3 6.7M494.1 277.9l-2.3 6.7M498.3 265.6l-2.3 6.7M502.4 253.4l-2.3 6.7M506.6 241.1l-2.3 6.7M486.8 314.1l-1.9 6.7M490.2 301.9l-1.9 6.7M493.7 289.7l-1.9 6.7M497.2 277.6l-1.9 6.7M500.6 265.4l-1.9 6.7M504.1 253.2l-1.9 6.7M507.6 241l-1.9 6.7M491.9 313.3l-1.5 6.6M494.7 301.3l-1.5 6.6M497.4 289.2l-1.5 6.6M500.2 277.1l-1.5 6.6M503 265l-1.5 6.6M505.8 252.9l-1.5 6.6M508.5 240.9l-1.5 6.6M511.3 228.8l-1.5 6.6M497 312.4l-1.2 6.6M499.1 300.5l-1.2 6.6M501.2 288.5l-1.2 6.6M503.3 276.6l-1.2 6.6M505.4 264.6l-1.2 6.6M507.4 252.6l-1.2 6.6M509.5 240.7l-1.2 6.6M502.1 311.3l-0.8 6.5M503.5 299.5l-0.8 6.5M504.9 287.7l-0.8 6.5M506.3 275.9l-0.8 6.5M507.7 264.1l-0.8 6.5M509.1 252.3l-0.8 6.5M510.5 240.5l-0.8 6.5M507.1 310.1l-0.4 6.4M507.8 298.4l-0.4 6.4M508.6 286.8l-0.4 6.4M509.3 275.2l-0.4 6.4M510 263.5l-0.4 6.4M510.8 251.9l-0.4 6.4M511.5 240.2l-0.4 6.4M512.2 228.6l-0.4 6.4M512.1 308.7l-0 6.3M512.2 297.2l-0 6.3M512.2 285.8l-0 6.3M512.3 274.3l-0 6.3M512.3 262.9l-0 6.3M512.4 251.4l-0 6.3M512.5 240l-0 6.3M517.1 307.1l0.3 6.2M516.5 295.9l0.3 6.2M515.9 284.6l0.3 6.2M515.3 273.4l0.3 6.2M514.6 262.2l0.3 6.2M514 250.9l0.3 6.2M513.4 239.7l0.3 6.2M522 305.4l0.7 6.1M520.7 294.4l0.7 6.1M519.5 283.4l0.7 6.1M518.2 272.4l0.7 6.1M516.9 261.4l0.7 6.1M515.7 250.3l0.7 6.1M514.4 239.3l0.7 6.1M513.1 228.3l0.7 6.1M526.9 303.6l1.1 5.9M524.9 292.8l1.1 5.9M523 282.1l1.1 5.9M521.1 271.3l1.1 5.9M519.2 260.5l1.1 5.9M517.3 249.7l1.1 5.9M515.3 239l1.1 5.9M531.7 301.7l1.4 5.8M529.1 291.1l1.4 5.8M526.6 280.6l1.4 5.8M524 270.1l1.4 5.8M521.4 259.6l1.4 5.8M518.8 249.1l1.4 5.8M516.3 238.6l1.4 5.8M536.5 299.6l1.8 5.6M533.3 289.3l1.8 5.6M530 279.1l1.8 5.6M526.8 268.9l1.8 5.6M523.6 258.6l1.8 5.6M520.4 248.4l1.8 5.6M517.2 238.2l1.8 5.6M514 228l1.8 5.6M541.2 297.3l2.1 5.5M537.3 287.4l2.1 5.5M533.5 277.5l2.1 5.5M529.6 267.5l2.1 5.5M525.8 257.6l2.1 5.5M522 247.7l2.1 5.5M518.1 237.8l2.1 5.5M545.8 295l2.5 5.3M541.4 285.4l2.5 5.3M536.9 275.8l2.5 5.3M532.4 266.1l2.5 5.3M528 256.5l2.5 5.3M523.5 246.9l2.5 5.3M519 237.3l2.5 5.3M550.4 292.5l2.8 5.1M545.3 283.2l2.8 5.1M540.2 274l2.8 5.1M535.2 264.7l2.8 5.1M530.1 255.4l2.8 5.1M525 246.1l2.8 5.1M519.9 236.8l2.8 5.1M514.8 227.5l2.8 5.1M554.9 289.9l3.1 4.9M549.2 281l3.1 4.9M543.6 272.1l3.1 4.9M537.9 263.1l3.1 4.9M532.2 254.2l3.1 4.9M526.5 245.3l3.1 4.9M520.8 236.3l3.1 4.9M559.4 287.2l3.5 4.7M553.1 278.7l3.5 4.7M546.8 270.1l3.5 4.7M540.5 261.5l3.5 4.7M534.2 252.9l3.5 4.7M527.9 244.4l3.5 4.7M521.6 235.8l3.5 4.7M563.8 284.4l3.8 4.5M556.9 276.2l3.8 4.5M550 268l3.8 4.5M543.1 259.8l3.8 4.5M536.2 251.6l3.8 4.5M529.4 243.4l3.8 4.5M522.5 235.3l3.8 4.5M515.6 227.1l3.8 4.5M568 281.5l4.1 4.3M560.6 273.7l4.1 4.3M553.1 265.9l4.1 4.3M545.7 258.1l4.1 4.3M538.2 250.3l4.1 4.3M530.8 242.5l4.1 4.3M523.3 234.7l4.1 4.3M572.2 278.4l4.4 4.1M564.2 271l4.4 4.1M556.2 263.7l4.4 4.1M548.2 256.3l4.4 4.1M540.2 248.9l4.4 4.1M532.2 241.5l4.4 4.1M524.1 234.1l4.4 4.1M576.4 275.3l4.7 3.8M567.8 268.3l4.7 3.8M559.2 261.4l4.7 3.8M550.7 254.4l4.7 3.8M542.1 247.4l4.7 3.8M533.5 240.4l4.7 3.8M524.9 233.5l4.7 3.8M516.4 226.5l4.7 3.8M580.4 272l5 3.6M571.3 265.5l5 3.6M562.2 259l5 3.6M553.1 252.4l5 3.6M543.9 245.9l5 3.6M534.8 239.4l5 3.6M525.7 232.8l5 3.6M584.3 268.7l5.3 3.3M574.7 262.6l5.3 3.3M565 256.5l5.3 3.3M555.4 250.4l5.3 3.3M545.8 244.3l5.3 3.3M536.1 238.3l5.3 3.3M526.5 232.2l5.3 3.3M588.1 265.2l5.6 3.1M578 259.6l5.6 3.1M567.8 254l5.6 3.1M557.7 248.4l5.6 3.1M547.5 242.7l5.6 3.1M537.4 237.1l5.6 3.1M527.2 231.5l5.6 3.1M517.1 225.9l5.6 3.1M591.8 261.6l5.9 2.8M581.2 256.5l5.9 2.8M570.5 251.3l5.9 2.8M559.9 246.2l5.9 2.8M549.2 241.1l5.9 2.8M538.6 236l5.9 2.8M527.9 230.8l5.9 2.8M595.4 257.9l6.1 2.6M584.3 253.3l6.1 2.6M573.1 248.7l6.1 2.6M562 244l6.1 2.6M550.9 239.4l6.1 2.6M539.8 234.7l6.1 2.6M528.6 230.1l6.1 2.6M598.9 254.1l6.4 2.3M587.3 250l6.4 2.3M575.7 245.9l6.4 2.3M564.1 241.8l6.4 2.3M552.5 237.6l6.4 2.3M540.9 233.5l6.4 2.3M529.3 229.4l6.4 2.3M517.7 225.2l6.4 2.3M602.2 250.3l6.6 2M590.1 246.7l6.6 2M578.1 243l6.6 2M566.1 239.4l6.6 2M554 235.8l6.6 2M542 232.2l6.6 2M530 228.6l6.6 2M605.4 246.3l6.9 1.7M592.9 243.2l6.9 1.7M580.4 240.1l6.9 1.7M568 237.1l6.9 1.7M555.5 234l6.9 1.7M543 230.9l6.9 1.7M530.6 227.8l6.9 1.7M608.4 242.2l7.1 1.4M595.5 239.7l7.1 1.4M582.7 237.2l7.1 1.4M569.8 234.6l7.1 1.4M556.9 232.1l7.1 1.4M544 229.6l7.1 1.4M531.2 227.1l7.1 1.4M518.3 224.5l7.1 1.4M611.3 238l7.3 1.1M598 236.1l7.3 1.1M584.8 234.1l7.3 1.1M571.5 232.1l7.3 1.1M558.2 230.2l7.3 1.1M545 228.2l7.3 1.1M531.7 226.2l7.3 1.1M614 233.8l7.5 0.8M600.3 232.4l7.5 0.8M586.7 231l7.5 0.8M573.1 229.6l7.5 0.8M559.5 228.2l7.5 0.8M545.9 226.8l7.5 0.8M532.2 225.4l7.5 0.8M616.5 229.4l7.7 0.4M602.5 228.6l7.7 0.4M588.6 227.8l7.7 0.4M574.6 227l7.7 0.4M560.6 226.2l7.7 0.4M546.7 225.4l7.7 0.4M532.7 224.6l7.7 0.4M518.8 223.8l7.7 0.4M618.8 225l7.8 0.1M604.5 224.7l7.8 0.1M590.2 224.5l7.8 0.1M576 224.3l7.8 0.1M561.7 224.1l7.8 0.1M547.4 223.9l7.8 0.1M533.2 223.7l7.8 0.1M620.9 220.4l8 -0.2M606.3 220.8l8 -0.2M591.8 221.2l8 -0.2M577.2 221.6l8 -0.2M562.7 222l8 -0.2M548.1 222.4l8 -0.2M533.6 222.8l8 -0.2M622.7 215.8l8.1 -0.6M607.9 216.8l8.1 -0.6M593.1 217.9l8.1 -0.6M578.3 218.9l8.1 -0.6M563.5 219.9l8.1 -0.6M548.7 220.9l8.1 -0.6M533.9 221.9l8.1 -0.6M519.1 223l8.1 -0.6M624.3 211.2l8.3 -0.9M609.3 212.8l8.3 -0.9M594.3 214.4l8.3 -0.9M579.3 216.1l8.3 -0.9M564.3 217.7l8.3 -0.9M549.3 219.4l8.3 -0.9M534.3 221l8.3 -0.9M625.7 206.4l8.4 -1.3M610.5 208.7l8.4 -1.3M595.3 211l8.4 -1.3M580.1 213.3l8.4 -1.3M564.9 215.5l8.4 -1.3M549.7 217.8l8.4 -1.3M534.5 220.1l8.4 -1.3M626.7 201.6l8.4 -1.6M611.4 204.6l8.4 -1.6M596.1 207.5l8.4 -1.6M580.7 210.4l8.4 -1.6M565.4 213.3l8.4 -1.6M550.1 216.3l8.4 -1.6M534.7 219.2l8.4 -1.6M519.4 222.1l8.4 -1.6M627.5 196.8l8.5 -2M612 200.4l8.5 -2M596.6 204l8.5 -2M581.2 207.5l8.5 -2M565.7 211.1l8.5 -2M550.3 214.7l8.5 -2M534.9 218.3l8.5 -2M627.9 192l8.5 -2.3M612.4 196.2l8.5 -2.3M596.9 200.5l8.5 -2.3M581.4 204.7l8.5 -2.3M565.9 208.9l8.5 -2.3M550.4 213.1l8.5 -2.3M534.9 217.3l8.5 -2.3" stroke="#1d6a22" stroke-width="1.05" fill="none" opacity="0.8"/>
<circle fill="#2c8a2c" r="1" transform="matrix(5.27 -1.57 0 -3.89 512.6 223.4)"/>
<line x1="611.3" y1="400.5" x2="480.9" y2="166.6" stroke="#0a640a" stroke-width="2.8" stroke-dasharray="7 6" stroke-opacity="0.75"/>
<circle cx="601.2" cy="382.4" r="5" fill="#12701a" opacity="0.9"/>
<circle cx="575.9" cy="337" r="5" fill="#12701a" opacity="0.9"/>
<circle cx="550.5" cy="291.5" r="5" fill="#12701a" opacity="0.9"/>
<circle cx="525.2" cy="246.1" r="5" fill="#12701a" opacity="0.9"/>
<circle cx="499.9" cy="200.7" r="5" fill="#12701a" opacity="0.9"/>
<polygon points="473.3,153 485.9,165.3 477.2,170.2" fill="#12701a" opacity="0.9"/>
<line x1="521.9" y1="220.6" x2="636.6" y2="186.4" stroke="#1f6f8f" stroke-width="2" stroke-dasharray="8 11" opacity="0.85"/>
<polyline points="636.6,186.4 636.4,181.6 635.9,177 635,172.5 633.9,168.2 632.3,164 630.5,159.9 628.3,156 625.8,152.4 623,148.9 619.9,145.6 616.6,142.5 612.9,139.7 608.9,137.1 604.7,134.7 600.2,132.5 595.5,130.6 590.6,129 585.4,127.6 580.1,126.5 574.6,125.7 568.9,125.1 563,124.8 557,124.7 550.9,125 544.7,125.5 538.3,126.2 532,127.3 525.5,128.6 519,130.1 512.6,131.9 506.1,134 499.6,136.3 493.2,138.9 486.8,141.6 480.5,144.6 474.2,147.9 468.1,151.3 462.1,154.9 456.3,158.7 450.6,162.7 445,166.9 439.7,171.2 434.5,175.6 429.6,180.2 424.9,184.9 420.4,189.7 416.2,194.6 412.2,199.6 408.6,204.7 405.2,209.7 402.1,214.9 399.3,220 396.8,225.2 394.6,230.4 392.8,235.5 391.3,240.6 390.1,245.7 389.2,250.7 388.7,255.6 388.6,260.4 388.7,265.2 389.2,269.8 390.1,274.3 391.3,278.7 392.8,282.9 394.6,286.9 396.8,290.8 399.3,294.5 402.1,297.9 405.2,301.2 408.6,304.3 412.2,307.1 416.2,309.8 420.4,312.1 424.9,314.3 429.6,316.2 434.5,317.8 439.7,319.2 445,320.3 450.6,321.2 456.3,321.7 462.1,322 468.1,322.1 474.2,321.9 480.5,321.4 486.8,320.6 493.2,319.6 499.6,318.3 506.1,316.7 512.6,314.9 519,312.8 525.5,310.5 532,308 538.3,305.2 544.7,302.2 550.9,299 557,295.5 563,291.9 568.9,288.1 574.6,284.1 580.1,280 585.4,275.6 590.6,271.2 595.5,266.6 600.2,261.9 604.7,257.1 608.9,252.2 612.9,247.2 616.6,242.2 619.9,237.1 623,231.9 625.8,226.8 628.3,221.6 630.5,216.5 632.3,211.3 633.9,206.2 635,201.1 635.9,196.1 636.4,191.2 636.6,186.4" fill="none" stroke="#263a26" stroke-width="1" opacity="0.8"/>
<defs><linearGradient id="gslice" gradientUnits="userSpaceOnUse" x1="485" y1="0" x2="655" y2="0"><stop offset="0" stop-color="#12621a"/><stop offset="0.55" stop-color="#1c7f24"/><stop offset="1" stop-color="#26982c"/></linearGradient></defs>
<g fill="#58d05a" opacity="0.55"><circle r="1" transform="matrix(2.08 -0.62 0 -1.53 613.8 405)"/><circle r="1" transform="matrix(4.15 -1.24 0 -3.06 613.7 404.9)"/><circle r="1" transform="matrix(6.23 -1.86 0 -4.6 613.6 404.6)"/><circle r="1" transform="matrix(8.31 -2.48 0 -6.13 613.4 404.3)"/><circle r="1" transform="matrix(10.38 -3.1 0 -7.66 613.1 403.8)"/><circle r="1" transform="matrix(12.46 -3.72 0 -9.19 612.8 403.3)"/><circle r="1" transform="matrix(14.54 -4.34 0 -10.72 612.4 402.6)"/><circle r="1" transform="matrix(16.61 -4.96 0 -12.26 612 401.8)"/><circle r="1" transform="matrix(18.69 -5.58 0 -13.79 611.5 401)"/><circle r="1" transform="matrix(20.77 -6.2 0 -15.32 611 400)"/><circle r="1" transform="matrix(22.84 -6.82 0 -16.85 610.4 398.9)"/><circle r="1" transform="matrix(24.92 -7.44 0 -18.38 609.7 397.8)"/><circle r="1" transform="matrix(27 -8.06 0 -19.92 609 396.5)"/><circle r="1" transform="matrix(29.07 -8.68 0 -21.45 608.3 395.1)"/><circle r="1" transform="matrix(31.15 -9.3 0 -22.98 607.4 393.6)"/><circle r="1" transform="matrix(33.23 -9.93 0 -24.51 606.6 392)"/><circle r="1" transform="matrix(35.3 -10.55 0 -26.04 605.6 390.4)"/><circle r="1" transform="matrix(37.38 -11.17 0 -27.58 604.6 388.6)"/><circle r="1" transform="matrix(39.46 -11.79 0 -29.11 603.6 386.7)"/><circle r="1" transform="matrix(41.53 -12.41 0 -30.64 602.5 384.7)"/><circle r="1" transform="matrix(43.61 -13.03 0 -32.17 601.3 382.6)"/><circle r="1" transform="matrix(45.69 -13.65 0 -33.7 600.1 380.4)"/><circle r="1" transform="matrix(47.76 -14.27 0 -35.24 598.8 378.1)"/><circle r="1" transform="matrix(49.84 -14.89 0 -36.77 597.5 375.7)"/><circle r="1" transform="matrix(51.92 -15.51 0 -38.3 596.1 373.2)"/><circle r="1" transform="matrix(53.99 -16.13 0 -39.83 594.6 370.6)"/><circle r="1" transform="matrix(56.07 -16.75 0 -41.36 593.1 367.9)"/><circle r="1" transform="matrix(58.15 -17.37 0 -42.9 591.6 365.1)"/><circle r="1" transform="matrix(60.22 -17.99 0 -44.43 590 362.2)"/><circle r="1" transform="matrix(62.3 -18.61 0 -45.96 588.3 359.2)"/><circle r="1" transform="matrix(64.38 -19.23 0 -47.49 586.5 356.1)"/><circle r="1" transform="matrix(66.45 -19.85 0 -49.03 584.8 352.9)"/><circle r="1" transform="matrix(68.53 -20.47 0 -50.56 582.9 349.6)"/><circle r="1" transform="matrix(70.61 -21.09 0 -52.09 581 346.2)"/><circle r="1" transform="matrix(72.68 -21.71 0 -53.62 579 342.7)"/><circle r="1" transform="matrix(74.76 -22.33 0 -55.15 577 339.1)"/><circle r="1" transform="matrix(76.84 -22.95 0 -56.69 575 335.3)"/><circle r="1" transform="matrix(78.91 -23.57 0 -58.22 572.8 331.5)"/><circle r="1" transform="matrix(80.99 -24.19 0 -59.75 570.6 327.6)"/><circle r="1" transform="matrix(83.07 -24.81 0 -61.28 568.4 323.6)"/></g>
<polygon points="651.5,298.7 651.3,294.5 650.6,290.5 649.6,286.5 648.2,282.8 646.4,279.3 644.3,276 641.7,272.9 638.8,270 635.6,267.5 632,265.2 628.1,263.1 624,261.4 619.5,260 614.8,258.9 609.9,258.1 604.8,257.6 599.5,257.4 594.1,257.6 588.5,258.1 582.8,258.9 577.1,260 571.3,261.5 565.5,263.2 559.7,265.2 554,267.5 548.3,270.1 542.7,272.9 537.3,276 532,279.4 526.9,282.9 521.9,286.6 517.2,290.5 512.8,294.6 508.6,298.8 504.8,303.2 501.2,307.6 497.9,312.1 495,316.7 492.5,321.3 490.3,325.9 488.5,330.5 487.1,335.1 486.1,339.6 485.5,344 485.3,348.4 485.5,352.6 486.1,356.7 487.1,360.6 488.5,364.3 490.3,367.8 492.5,371.2 495,374.2 497.9,377.1 501.2,379.7 504.8,382 508.6,384 512.8,385.7 517.2,387.1 521.9,388.2 526.9,389 532,389.5 537.3,389.7 542.7,389.5 548.3,389 554,388.2 559.7,387.1 565.5,385.7 571.3,383.9 577.1,381.9 582.8,379.6 588.5,377 594.1,374.2 599.5,371.1 604.8,367.8 609.9,364.2 614.8,360.5 619.5,356.6 624,352.5 628.1,348.3 632,343.9 635.6,339.5 638.8,335 641.7,330.4 644.3,325.8 646.4,321.2 648.2,316.6 649.6,312 650.6,307.5 651.3,303.1 651.5,298.7" fill="url(#gslice)" opacity="0.96"/>
<polyline points="646.4,279.3 645.3,277.5 644.1,275.7 642.7,274 641.3,272.4 639.7,270.8 638.1,269.4 636.3,268 634.4,266.7 632.5,265.4 630.4,264.3 628.3,263.2 626.1,262.2 623.8,261.4 621.4,260.6 619,259.8 616.4,259.2 613.8,258.7 611.2,258.3 608.5,257.9 605.7,257.7 602.8,257.5 600,257.4 597,257.5 594.1,257.6 591.1,257.8 588,258.2 585,258.6 581.9,259.1 578.8,259.7 575.6,260.4 572.5,261.1 569.4,262 566.2,263 563.1,264 559.9,265.1 556.8,266.3 553.7,267.6 550.6,269 547.6,270.4 544.6,272 541.6,273.6 538.6,275.2 535.7,277 532.8,278.8 530,280.7 527.3,282.6 524.6,284.6 521.9,286.6 519.4,288.7 516.9,290.9 514.4,293.1 512.1,295.3 509.8,297.6 507.6,299.9 505.5,302.3 503.5,304.6 501.6,307.1 499.8,309.5 498.1,311.9 496.5,314.4 494.9,316.9 493.5,319.4 492.2,321.9 491,324.4 489.9,326.9 489,329.4 488.1,331.9 487.3,334.3 486.7,336.8 486.2,339.2 485.8,341.6 485.5,344 485.4,346.4 485.3,348.7 485.4,351 485.6,353.3 485.9,355.5 486.3,357.7 486.9,359.8 487.6,361.8 488.3,363.8 489.2,365.8 490.3,367.7 491.4,369.5 492.6,371.3 493.9,373 495.4,374.6 496.9,376.2 498.6,377.6 500.3,379" fill="none" stroke="#0c160c" stroke-width="1.5"/>
<clipPath id="cgreen"><circle r="1" transform="matrix(5.17 -1.54 0 -3.81 613.7 404.8)"/><circle r="1" transform="matrix(10.33 -3.09 0 -7.62 613.1 403.8)"/><circle r="1" transform="matrix(15.5 -4.63 0 -11.44 612.3 402.3)"/><circle r="1" transform="matrix(20.67 -6.17 0 -15.25 611 400)"/><circle r="1" transform="matrix(25.83 -7.72 0 -19.06 609.4 397.2)"/><circle r="1" transform="matrix(31 -9.26 0 -22.87 607.5 393.7)"/><circle r="1" transform="matrix(36.17 -10.8 0 -26.68 605.2 389.6)"/><circle r="1" transform="matrix(41.33 -12.35 0 -30.49 602.6 384.9)"/><circle r="1" transform="matrix(46.5 -13.89 0 -34.3 599.6 379.5)"/><circle r="1" transform="matrix(51.67 -15.43 0 -38.12 596.3 373.5)"/><circle r="1" transform="matrix(56.83 -16.98 0 -41.93 592.6 366.9)"/><circle r="1" transform="matrix(62 -18.52 0 -45.74 588.5 359.7)"/><circle r="1" transform="matrix(67.17 -20.06 0 -49.55 584.1 351.8)"/><circle r="1" transform="matrix(72.33 -21.61 0 -53.36 579.4 343.3)"/><circle r="1" transform="matrix(77.5 -23.15 0 -57.18 574.3 334.1)"/><circle r="1" transform="matrix(82.67 -24.69 0 -60.99 568.8 324.3)"/><circle r="1" transform="matrix(87.83 -26.24 0 -64.8 563 313.9)"/><circle r="1" transform="matrix(93 -27.78 0 -68.61 556.9 302.9)"/><circle r="1" transform="matrix(98.17 -29.32 0 -72.42 550.4 291.2)"/><circle r="1" transform="matrix(103.33 -30.87 0 -76.23 543.5 278.9)"/><circle r="1" transform="matrix(108.5 -32.41 0 -80.05 536.3 266)"/><circle r="1" transform="matrix(113.67 -33.95 0 -83.86 528.7 252.4)"/><circle r="1" transform="matrix(118.83 -35.5 0 -87.67 520.8 238.2)"/><circle r="1" transform="matrix(124 -37.04 0 -91.48 512.6 223.4)"/></clipPath>
<g clip-path="url(#cgreen)" stroke="#5a6a5a" stroke-width="1" stroke-dasharray="4.3 5" fill="none" opacity="0.45"><line x1="530.4" y1="774.4" x2="1311.6" y2="541" /><line x1="505.1" y1="729" x2="1286.3" y2="495.6" /><line x1="479.8" y1="683.6" x2="1261" y2="450.2" /><line x1="454.5" y1="638.1" x2="1235.7" y2="404.8" /><line x1="429.1" y1="592.7" x2="1210.3" y2="359.4" /><line x1="403.8" y1="547.3" x2="1185" y2="313.9" /><line x1="378.5" y1="501.9" x2="1159.7" y2="268.5" /><line x1="353.2" y1="456.5" x2="1134.4" y2="223.1" /><line x1="327.9" y1="411" x2="1109.1" y2="177.7" /><line x1="302.5" y1="365.6" x2="1083.7" y2="132.3" /><line x1="277.2" y1="320.2" x2="1058.4" y2="86.8" /><line x1="251.9" y1="274.8" x2="1033.1" y2="41.4" /><line x1="226.6" y1="229.4" x2="1007.8" y2="-4" /><line x1="542.8" y1="796.7" x2="223.4" y2="223.7" /><line x1="604.8" y1="778.1" x2="285.4" y2="205.2" /><line x1="666.8" y1="759.6" x2="347.4" y2="186.6" /><line x1="728.8" y1="741.1" x2="409.4" y2="168.1" /><line x1="790.8" y1="722.6" x2="471.4" y2="149.6" /><line x1="852.8" y1="704.1" x2="533.4" y2="131.1" /><line x1="914.8" y1="685.5" x2="595.4" y2="112.6" /><line x1="976.8" y1="667" x2="657.4" y2="94" /><line x1="1038.8" y1="648.5" x2="719.4" y2="75.5" /><line x1="1100.8" y1="630" x2="781.4" y2="57" /><line x1="1162.8" y1="611.5" x2="843.4" y2="38.5" /><line x1="1224.8" y1="592.9" x2="905.4" y2="20" /><line x1="1286.8" y1="574.4" x2="967.4" y2="1.4" /></g>
<line x1="610" y1="398.3" x2="568.4" y2="323.6" stroke="#2f9a3a" stroke-width="2.6" stroke-dasharray="7 6" opacity="0.7"/>
<circle cx="601.2" cy="382.4" r="4.8" fill="#2f9a3a" opacity="0.85"/>
<circle cx="575.9" cy="337" r="4.8" fill="#2f9a3a" opacity="0.85"/>
<g fill="#c08f6a" opacity="0.98"><circle r="1" transform="matrix(-39 -69.96 0 -70.46 689.7 408.9)"/><circle r="1" transform="matrix(-40.14 -72 0 -72.51 691.1 408.5)"/><circle r="1" transform="matrix(-41.3 -74.08 0 -74.6 692.4 408.1)"/><circle r="1" transform="matrix(-42.48 -76.2 0 -76.74 693.8 407.7)"/><circle r="1" transform="matrix(-43.69 -78.37 0 -78.92 695.1 407.3)"/><circle r="1" transform="matrix(-44.92 -80.58 0 -81.15 696.5 406.9)"/><circle r="1" transform="matrix(-46.17 -82.83 0 -83.41 697.8 406.5)"/><circle r="1" transform="matrix(-47.45 -85.12 0 -85.72 699.2 406.1)"/><circle r="1" transform="matrix(-48.76 -87.46 0 -88.08 700.5 405.7)"/><circle r="1" transform="matrix(-50.08 -89.84 0 -90.48 701.9 405.3)"/><circle r="1" transform="matrix(-51.44 -92.27 0 -92.92 703.2 404.9)"/><circle r="1" transform="matrix(-52.81 -94.73 0 -95.4 704.6 404.5)"/><circle r="1" transform="matrix(-54.21 -97.24 0 -97.93 705.9 404.1)"/><circle r="1" transform="matrix(-55.63 -99.79 0 -100.5 707.3 403.7)"/><circle r="1" transform="matrix(-57.08 -102.39 0 -103.11 708.6 403.3)"/><circle r="1" transform="matrix(-58.55 -105.03 0 -105.77 710 402.9)"/><circle r="1" transform="matrix(-60.04 -107.71 0 -108.47 711.3 402.5)"/><circle r="1" transform="matrix(-61.56 -110.43 0 -111.21 712.7 402.1)"/><circle r="1" transform="matrix(-63.11 -113.2 0 -114 714 401.7)"/><circle r="1" transform="matrix(-64.67 -116.01 0 -116.83 715.4 401.3)"/><circle r="1" transform="matrix(-66.26 -118.87 0 -119.7 716.7 400.9)"/><circle r="1" transform="matrix(-67.88 -121.76 0 -122.62 718.1 400.5)"/><circle r="1" transform="matrix(-69.52 -124.7 0 -125.58 719.4 400)"/><circle r="1" transform="matrix(-71.18 -127.68 0 -128.58 720.8 399.6)"/><circle r="1" transform="matrix(-72.86 -130.71 0 -131.63 722.1 399.2)"/><circle r="1" transform="matrix(-74.58 -133.78 0 -134.72 723.5 398.8)"/><circle r="1" transform="matrix(-76.31 -136.89 0 -137.85 724.8 398.4)"/><circle r="1" transform="matrix(-78.07 -140.04 0 -141.03 726.1 398)"/><circle r="1" transform="matrix(-79.85 -143.24 0 -144.25 727.5 397.6)"/><circle r="1" transform="matrix(-81.66 -146.48 0 -147.51 728.8 397.2)"/><circle r="1" transform="matrix(-83.49 -149.76 0 -150.82 730.2 396.8)"/><circle r="1" transform="matrix(-85.34 -153.09 0 -154.17 731.5 396.4)"/><circle r="1" transform="matrix(-87.22 -156.46 0 -157.56 732.9 396)"/><circle r="1" transform="matrix(-89.12 -159.87 0 -160.99 734.2 395.6)"/><circle r="1" transform="matrix(-91.05 -163.32 0 -164.47 735.6 395.2)"/><circle r="1" transform="matrix(-93 -166.82 0 -168 736.9 394.8)"/><circle r="1" transform="matrix(-94.97 -170.36 0 -171.56 738.3 394.4)"/><circle r="1" transform="matrix(-96.97 -173.95 0 -175.17 739.6 394)"/><circle r="1" transform="matrix(-98.99 -177.57 0 -178.82 741 393.6)"/><circle r="1" transform="matrix(-101.04 -181.24 0 -182.52 742.3 393.2)"/><circle r="1" transform="matrix(-103.11 -184.95 0 -186.26 743.7 392.8)"/></g>
<polygon points="636.6,186.4 636.7,175.9 637.2,166 638,156.7 639,148 640.4,140.1 642.1,132.8 644.1,126.2 646.4,120.3 649,115.2 651.8,110.8 654.9,107.2 658.3,104.4 662,102.4 665.8,101.1 669.9,100.7 674.3,101 678.8,102.2 683.5,104.1 688.4,106.8 693.5,110.3 698.8,114.6 704.2,119.6 709.7,125.4 715.3,131.8 721,139 726.8,146.9 732.7,155.5 738.6,164.7 744.5,174.5 750.5,184.9 756.5,195.9 762.4,207.4 768.3,219.4 774.2,231.9 780,244.8 785.7,258.2 791.3,271.8 796.8,285.9 802.2,300.2 807.5,314.7 812.6,329.5 817.5,344.4 822.2,359.4 826.7,374.6 831.1,389.7 835.2,404.9 839,420.1 842.7,435.1 846.1,450.1 849.2,464.9 852,479.4 854.6,493.8 856.9,507.8 858.9,521.5 860.6,534.9 862,547.9 863,560.4 863.8,572.5 864.3,584.1 864.4,595.1 864.3,605.6 863.8,615.5 863,624.8 862,633.5 860.6,641.5 858.9,648.8 856.9,655.3 854.6,661.2 852,666.3 849.2,670.7 846.1,674.3 842.7,677.1 839,679.1 835.2,680.4 831.1,680.8 826.7,680.5 822.2,679.3 817.5,677.4 812.6,674.7 807.5,671.2 802.2,666.9 796.8,661.9 791.3,656.2 785.7,649.7 780,642.5 774.2,634.6 768.3,626 762.4,616.8 756.5,607 750.5,596.6 744.5,585.6 738.6,574.1 732.7,562.1 726.8,549.6 721,536.7 715.3,523.4 709.7,509.7 704.2,495.7 698.8,481.4 693.5,466.8 688.4,452.1 683.5,437.1 678.8,422.1 674.3,407 669.9,391.8 665.8,376.6 662,361.5 658.3,346.4 654.9,331.4 651.8,316.7 649,302.1 646.4,287.8 644.1,273.7 642.1,260 640.4,246.6 639,233.6 638,221.1 637.2,209 636.7,197.4 636.6,186.4" fill="#bc8c68" opacity="0.98"/>
<clipPath id="cdisc"><polygon points="636.6,186.4 636.7,175.9 637.2,166 638,156.7 639,148 640.4,140.1 642.1,132.8 644.1,126.2 646.4,120.3 649,115.2 651.8,110.8 654.9,107.2 658.3,104.4 662,102.4 665.8,101.1 669.9,100.7 674.3,101 678.8,102.2 683.5,104.1 688.4,106.8 693.5,110.3 698.8,114.6 704.2,119.6 709.7,125.4 715.3,131.8 721,139 726.8,146.9 732.7,155.5 738.6,164.7 744.5,174.5 750.5,184.9 756.5,195.9 762.4,207.4 768.3,219.4 774.2,231.9 780,244.8 785.7,258.2 791.3,271.8 796.8,285.9 802.2,300.2 807.5,314.7 812.6,329.5 817.5,344.4 822.2,359.4 826.7,374.6 831.1,389.7 835.2,404.9 839,420.1 842.7,435.1 846.1,450.1 849.2,464.9 852,479.4 854.6,493.8 856.9,507.8 858.9,521.5 860.6,534.9 862,547.9 863,560.4 863.8,572.5 864.3,584.1 864.4,595.1 864.3,605.6 863.8,615.5 863,624.8 862,633.5 860.6,641.5 858.9,648.8 856.9,655.3 854.6,661.2 852,666.3 849.2,670.7 846.1,674.3 842.7,677.1 839,679.1 835.2,680.4 831.1,680.8 826.7,680.5 822.2,679.3 817.5,677.4 812.6,674.7 807.5,671.2 802.2,666.9 796.8,661.9 791.3,656.2 785.7,649.7 780,642.5 774.2,634.6 768.3,626 762.4,616.8 756.5,607 750.5,596.6 744.5,585.6 738.6,574.1 732.7,562.1 726.8,549.6 721,536.7 715.3,523.4 709.7,509.7 704.2,495.7 698.8,481.4 693.5,466.8 688.4,452.1 683.5,437.1 678.8,422.1 674.3,407 669.9,391.8 665.8,376.6 662,361.5 658.3,346.4 654.9,331.4 651.8,316.7 649,302.1 646.4,287.8 644.1,273.7 642.1,260 640.4,246.6 639,233.6 638,221.1 637.2,209 636.7,197.4 636.6,186.4" /></clipPath>
<g clip-path="url(#cdisc)" stroke="#4d6a88" stroke-width="1" stroke-dasharray="4.3 5" fill="none" opacity="0.38"><line x1="530.4" y1="774.4" x2="1311.6" y2="541" /><line x1="505.1" y1="729" x2="1286.3" y2="495.6" /><line x1="479.8" y1="683.6" x2="1261" y2="450.2" /><line x1="454.5" y1="638.1" x2="1235.7" y2="404.8" /><line x1="429.1" y1="592.7" x2="1210.3" y2="359.4" /><line x1="403.8" y1="547.3" x2="1185" y2="313.9" /><line x1="378.5" y1="501.9" x2="1159.7" y2="268.5" /><line x1="353.2" y1="456.5" x2="1134.4" y2="223.1" /><line x1="327.9" y1="411" x2="1109.1" y2="177.7" /><line x1="302.5" y1="365.6" x2="1083.7" y2="132.3" /><line x1="277.2" y1="320.2" x2="1058.4" y2="86.8" /><line x1="251.9" y1="274.8" x2="1033.1" y2="41.4" /><line x1="226.6" y1="229.4" x2="1007.8" y2="-4" /><line x1="542.8" y1="796.7" x2="223.4" y2="223.7" /><line x1="604.8" y1="778.1" x2="285.4" y2="205.2" /><line x1="666.8" y1="759.6" x2="347.4" y2="186.6" /><line x1="728.8" y1="741.1" x2="409.4" y2="168.1" /><line x1="790.8" y1="722.6" x2="471.4" y2="149.6" /><line x1="852.8" y1="704.1" x2="533.4" y2="131.1" /><line x1="914.8" y1="685.5" x2="595.4" y2="112.6" /><line x1="976.8" y1="667" x2="657.4" y2="94" /><line x1="1038.8" y1="648.5" x2="719.4" y2="75.5" /><line x1="1100.8" y1="630" x2="781.4" y2="57" /><line x1="1162.8" y1="611.5" x2="843.4" y2="38.5" /><line x1="1224.8" y1="592.9" x2="905.4" y2="20" /><line x1="1286.8" y1="574.4" x2="967.4" y2="1.4" /></g>
<defs><path id="bh" d="M640.2 193l-3.5 -6.4M646.6 204.3l-3.5 -6.4M652.9 215.7l-3.5 -6.4M659.2 227l-3.5 -6.4M665.6 238.4l-3.5 -6.4M671.9 249.7l-3.5 -6.4M678.2 261.1l-3.5 -6.4M684.5 272.4l-3.5 -6.4M690.9 283.8l-3.5 -6.4M697.2 295.2l-3.5 -6.4M703.5 306.5l-3.5 -6.4M709.9 317.9l-3.5 -6.4M716.2 329.2l-3.5 -6.4M722.5 340.6l-3.5 -6.4M728.9 351.9l-3.5 -6.4M735.2 363.3l-3.5 -6.4M741.5 374.6l-3.5 -6.4M747.8 386l-3.5 -6.4M640.3 185.2l-3.5 -6.6M646.6 197l-3.5 -6.6M653 208.8l-3.5 -6.6M659.3 220.6l-3.5 -6.6M665.6 232.4l-3.5 -6.6M671.9 244.2l-3.5 -6.6M678.3 256l-3.5 -6.6M684.6 267.8l-3.5 -6.6M690.9 279.6l-3.5 -6.6M697.2 291.4l-3.5 -6.6M703.6 303.2l-3.5 -6.6M709.9 315l-3.5 -6.6M716.2 326.8l-3.5 -6.6M722.5 338.6l-3.5 -6.6M728.9 350.4l-3.5 -6.6M735.2 362.2l-3.5 -6.6M640.6 177.6l-3.5 -6.9M646.9 189.8l-3.5 -6.9M653.2 202l-3.5 -6.9M659.5 214.3l-3.5 -6.9M665.8 226.5l-3.5 -6.9M672.1 238.8l-3.5 -6.9M678.4 251l-3.5 -6.9M684.8 263.2l-3.5 -6.9M691.1 275.5l-3.5 -6.9M697.4 287.7l-3.5 -6.9M703.7 299.9l-3.5 -6.9M710 312.2l-3.5 -6.9M716.3 324.4l-3.5 -6.9M722.6 336.7l-3.5 -6.9M728.9 348.9l-3.5 -6.9M735.2 361.1l-3.5 -6.9M741.5 373.4l-3.5 -6.9M641.1 170.1l-3.5 -7.1M647.3 182.8l-3.5 -7.1M653.6 195.4l-3.5 -7.1M659.9 208.1l-3.5 -7.1M666.2 220.8l-3.5 -7.1M672.5 233.4l-3.5 -7.1M678.8 246.1l-3.5 -7.1M685 258.8l-3.5 -7.1M691.3 271.4l-3.5 -7.1M697.6 284.1l-3.5 -7.1M703.9 296.8l-3.5 -7.1M710.2 309.4l-3.5 -7.1M716.4 322.1l-3.5 -7.1M722.7 334.8l-3.5 -7.1M729 347.4l-3.5 -7.1M735.3 360.1l-3.5 -7.1M641.7 162.8l-3.5 -7.3M648 175.9l-3.5 -7.3M654.2 189l-3.5 -7.3M660.5 202.1l-3.5 -7.3M666.7 215.2l-3.5 -7.3M673 228.3l-3.5 -7.3M679.2 241.3l-3.5 -7.3M685.4 254.4l-3.5 -7.3M691.7 267.5l-3.5 -7.3M697.9 280.6l-3.5 -7.3M704.2 293.7l-3.5 -7.3M710.4 306.8l-3.5 -7.3M716.7 319.8l-3.5 -7.3M722.9 332.9l-3.5 -7.3M729.1 346l-3.5 -7.3M735.4 359.1l-3.5 -7.3M741.6 372.2l-3.5 -7.3M642.7 155.8l-3.5 -7.6M648.8 169.3l-3.5 -7.6M655 182.8l-3.5 -7.6M661.2 196.3l-3.5 -7.6M667.4 209.7l-3.5 -7.6M673.6 223.2l-3.5 -7.6M679.8 236.7l-3.5 -7.6M686 250.2l-3.5 -7.6M692.2 263.7l-3.5 -7.6M698.4 277.2l-3.5 -7.6M704.6 290.7l-3.5 -7.6M710.8 304.2l-3.5 -7.6M716.9 317.7l-3.5 -7.6M723.1 331.1l-3.5 -7.6M729.3 344.6l-3.5 -7.6M735.5 358.1l-3.5 -7.6M747.9 385.1l-3.5 -7.6M643.8 149l-3.4 -7.8M649.9 162.9l-3.4 -7.8M656.1 176.8l-3.4 -7.8M662.2 190.6l-3.4 -7.8M668.3 204.5l-3.4 -7.8M674.4 218.4l-3.4 -7.8M680.6 232.3l-3.4 -7.8M686.7 246.1l-3.4 -7.8M692.8 260l-3.4 -7.8M698.9 273.9l-3.4 -7.8M705.1 287.8l-3.4 -7.8M711.2 301.7l-3.4 -7.8M717.3 315.5l-3.4 -7.8M723.4 329.4l-3.4 -7.8M729.6 343.3l-3.4 -7.8M735.7 357.2l-3.4 -7.8M741.8 371.1l-3.4 -7.8M645.3 142.5l-3.4 -8M651.3 156.7l-3.4 -8M657.3 171l-3.4 -8M663.4 185.2l-3.4 -8M669.4 199.5l-3.4 -8M675.5 213.7l-3.4 -8M681.5 228l-3.4 -8M687.6 242.3l-3.4 -8M693.6 256.5l-3.4 -8M699.6 270.8l-3.4 -8M705.7 285l-3.4 -8M711.7 299.3l-3.4 -8M717.8 313.5l-3.4 -8M723.8 327.8l-3.4 -8M729.8 342l-3.4 -8M735.9 356.3l-3.4 -8M647 136.3l-3.3 -8.2M653 150.9l-3.3 -8.2M658.9 165.5l-3.3 -8.2M664.8 180.1l-3.3 -8.2M670.8 194.7l-3.3 -8.2M676.7 209.3l-3.3 -8.2M682.7 223.9l-3.3 -8.2M688.6 238.6l-3.3 -8.2M694.5 253.2l-3.3 -8.2M700.5 267.8l-3.3 -8.2M706.4 282.4l-3.3 -8.2M712.4 297l-3.3 -8.2M718.3 311.6l-3.3 -8.2M724.2 326.2l-3.3 -8.2M730.2 340.8l-3.3 -8.2M736.1 355.4l-3.3 -8.2M742.1 370l-3.3 -8.2M649.1 130.5l-3.3 -8.4M654.9 145.5l-3.3 -8.4M660.8 160.4l-3.3 -8.4M666.6 175.4l-3.3 -8.4M672.4 190.3l-3.3 -8.4M678.2 205.2l-3.3 -8.4M684 220.2l-3.3 -8.4M689.9 235.1l-3.3 -8.4M695.7 250l-3.3 -8.4M701.5 265l-3.3 -8.4M707.3 279.9l-3.3 -8.4M713.1 294.9l-3.3 -8.4M719 309.8l-3.3 -8.4M724.8 324.7l-3.3 -8.4M730.6 339.7l-3.3 -8.4M736.4 354.6l-3.3 -8.4M651.6 125.3l-3.2 -8.5M657.3 140.5l-3.2 -8.5M663 155.7l-3.2 -8.5M668.6 171l-3.2 -8.5M674.3 186.2l-3.2 -8.5M680 201.5l-3.2 -8.5M685.7 216.7l-3.2 -8.5M691.3 231.9l-3.2 -8.5M697 247.2l-3.2 -8.5M702.7 262.4l-3.2 -8.5M708.4 277.7l-3.2 -8.5M714.1 292.9l-3.2 -8.5M719.7 308.2l-3.2 -8.5M725.4 323.4l-3.2 -8.5M731.1 338.6l-3.2 -8.5M736.8 353.9l-3.2 -8.5M742.4 369.1l-3.2 -8.5M654.5 120.6l-3.1 -8.7M660 136.1l-3.1 -8.7M665.5 151.6l-3.1 -8.7M671 167.1l-3.1 -8.7M676.5 182.6l-3.1 -8.7M682 198.1l-3.1 -8.7M687.6 213.6l-3.1 -8.7M693.1 229.1l-3.1 -8.7M698.6 244.7l-3.1 -8.7M704.1 260.2l-3.1 -8.7M709.6 275.7l-3.1 -8.7M715.1 291.2l-3.1 -8.7M720.6 306.7l-3.1 -8.7M726.1 322.2l-3.1 -8.7M731.7 337.7l-3.1 -8.7M748.2 384.2l-3.1 -8.7M657.8 116.6l-3 -8.8M663.1 132.4l-3 -8.8M668.4 148.1l-3 -8.8M673.8 163.8l-3 -8.8M679.1 179.6l-3 -8.8M684.4 195.3l-3 -8.8M689.7 211l-3 -8.8M695 226.8l-3 -8.8M700.4 242.5l-3 -8.8M705.7 258.3l-3 -8.8M711 274l-3 -8.8M716.3 289.7l-3 -8.8M721.7 305.5l-3 -8.8M727 321.2l-3 -8.8M732.3 336.9l-3 -8.8M737.6 352.7l-3 -8.8M742.9 368.4l-3 -8.8M661.4 113.5l-2.9 -8.9M666.6 129.5l-2.9 -8.9M671.7 145.4l-2.9 -8.9M676.8 161.3l-2.9 -8.9M681.9 177.2l-2.9 -8.9M687 193.1l-2.9 -8.9M692.1 209l-2.9 -8.9M697.2 224.9l-2.9 -8.9M702.3 240.9l-2.9 -8.9M707.5 256.8l-2.9 -8.9M712.6 272.7l-2.9 -8.9M717.7 288.6l-2.9 -8.9M722.8 304.5l-2.9 -8.9M727.9 320.4l-2.9 -8.9M733 336.3l-2.9 -8.9M665.3 111.5l-2.7 -9M670.2 127.5l-2.7 -9M675.1 143.5l-2.7 -9M680 159.6l-2.7 -9M684.9 175.6l-2.7 -9M689.8 191.6l-2.7 -9M694.7 207.7l-2.7 -9M699.6 223.7l-2.7 -9M704.4 239.7l-2.7 -9M709.3 255.8l-2.7 -9M714.2 271.8l-2.7 -9M719.1 287.8l-2.7 -9M724 303.9l-2.7 -9M728.9 319.9l-2.7 -9M733.8 335.9l-2.7 -9M738.7 352l-2.7 -9M669.2 110.3l-2.6 -9M673.9 126.4l-2.6 -9M678.5 142.5l-2.6 -9M683.2 158.6l-2.6 -9M687.9 174.7l-2.6 -9M692.5 190.8l-2.6 -9M697.2 206.9l-2.6 -9M701.9 223l-2.6 -9M706.5 239.1l-2.6 -9M711.2 255.2l-2.6 -9M715.9 271.3l-2.6 -9M720.5 287.4l-2.6 -9M725.2 303.5l-2.6 -9M729.9 319.6l-2.6 -9M743.9 367.9l-2.6 -9M673.3 110l-2.5 -9M677.8 126.2l-2.5 -9M682.2 142.3l-2.5 -9M686.6 158.4l-2.5 -9M691.1 174.5l-2.5 -9M695.5 190.6l-2.5 -9M699.9 206.7l-2.5 -9M704.3 222.8l-2.5 -9M708.8 239l-2.5 -9M713.2 255.1l-2.5 -9M717.6 271.2l-2.5 -9M722.1 287.3l-2.5 -9M726.5 303.4l-2.5 -9M730.9 319.5l-2.5 -9M735.3 335.6l-2.5 -9M739.8 351.8l-2.5 -9M678 110.6l-2.3 -9M682.2 126.7l-2.3 -9M686.3 142.8l-2.3 -9M690.5 158.9l-2.3 -9M694.6 174.9l-2.3 -9M698.8 191l-2.3 -9M703 207.1l-2.3 -9M707.1 223.2l-2.3 -9M711.3 239.3l-2.3 -9M715.5 255.4l-2.3 -9M719.6 271.4l-2.3 -9M723.8 287.5l-2.3 -9M727.9 303.6l-2.3 -9M732.1 319.7l-2.3 -9M736.3 335.8l-2.3 -9M683 112.2l-2.2 -9M686.9 128.1l-2.2 -9M690.7 144.1l-2.2 -9M694.6 160.1l-2.2 -9M698.5 176.1l-2.2 -9M702.4 192.1l-2.2 -9M706.2 208.1l-2.2 -9M710.1 224.1l-2.2 -9M714 240.1l-2.2 -9M717.9 256.1l-2.2 -9M721.7 272.1l-2.2 -9M725.6 288.1l-2.2 -9M729.5 304.1l-2.2 -9M733.4 320.1l-2.2 -9M737.2 336.1l-2.2 -9M741.1 352.1l-2.2 -9M745 368l-2.2 -9M688.1 114.6l-2 -8.9M691.7 130.5l-2 -8.9M695.3 146.3l-2 -8.9M698.9 162.2l-2 -8.9M702.5 178l-2 -8.9M706 193.9l-2 -8.9M709.6 209.7l-2 -8.9M713.2 225.6l-2 -8.9M716.8 241.4l-2 -8.9M720.4 257.3l-2 -8.9M723.9 273.1l-2 -8.9M727.5 289l-2 -8.9M731.1 304.8l-2 -8.9M734.7 320.7l-2 -8.9M738.3 336.5l-2 -8.9M749 384.1l-2 -8.9M693.3 117.9l-1.8 -8.8M696.6 133.5l-1.8 -8.8M699.9 149.2l-1.8 -8.8M703.2 164.9l-1.8 -8.8M706.4 180.5l-1.8 -8.8M709.7 196.2l-1.8 -8.8M713 211.9l-1.8 -8.8M716.3 227.5l-1.8 -8.8M719.6 243.2l-1.8 -8.8M722.9 258.9l-1.8 -8.8M726.1 274.5l-1.8 -8.8M729.4 290.2l-1.8 -8.8M732.7 305.9l-1.8 -8.8M736 321.5l-1.8 -8.8M739.3 337.2l-1.8 -8.8M742.6 352.8l-1.8 -8.8M745.8 368.5l-1.8 -8.8M698.4 121.8l-1.7 -8.6M701.4 137.2l-1.7 -8.6M704.4 152.7l-1.7 -8.6M707.4 168.1l-1.7 -8.6M710.4 183.5l-1.7 -8.6M713.4 199l-1.7 -8.6M716.4 214.4l-1.7 -8.6M719.4 229.9l-1.7 -8.6M722.3 245.3l-1.7 -8.6M725.3 260.7l-1.7 -8.6M728.3 276.2l-1.7 -8.6M731.3 291.6l-1.7 -8.6M734.3 307.1l-1.7 -8.6M737.3 322.5l-1.7 -8.6M740.3 338l-1.7 -8.6M743.3 353.4l-1.7 -8.6M703.5 126.2l-1.5 -8.5M706.2 141.4l-1.5 -8.5M708.9 156.6l-1.5 -8.5M711.6 171.8l-1.5 -8.5M714.3 187l-1.5 -8.5M717 202.2l-1.5 -8.5M719.7 217.3l-1.5 -8.5M722.4 232.5l-1.5 -8.5M725.1 247.7l-1.5 -8.5M727.8 262.9l-1.5 -8.5M730.5 278.1l-1.5 -8.5M733.2 293.3l-1.5 -8.5M735.9 308.5l-1.5 -8.5M738.6 323.6l-1.5 -8.5M741.3 338.8l-1.5 -8.5M744 354l-1.5 -8.5M746.7 369.2l-1.5 -8.5M708.4 131.2l-1.4 -8.3M710.9 146.1l-1.4 -8.3M713.3 161l-1.4 -8.3M715.7 175.9l-1.4 -8.3M718.1 190.8l-1.4 -8.3M720.5 205.7l-1.4 -8.3M722.9 220.6l-1.4 -8.3M725.3 235.5l-1.4 -8.3M727.8 250.4l-1.4 -8.3M730.2 265.3l-1.4 -8.3M732.6 280.2l-1.4 -8.3M735 295.1l-1.4 -8.3M737.4 310l-1.4 -8.3M739.8 324.9l-1.4 -8.3M742.2 339.8l-1.4 -8.3M744.7 354.7l-1.4 -8.3M713.3 136.5l-1.2 -8.2M715.4 151.1l-1.2 -8.2M717.6 165.7l-1.2 -8.2M719.7 180.3l-1.2 -8.2M721.8 194.9l-1.2 -8.2M724 209.5l-1.2 -8.2M726.1 224.1l-1.2 -8.2M728.2 238.7l-1.2 -8.2M730.4 253.3l-1.2 -8.2M732.5 267.9l-1.2 -8.2M734.7 282.5l-1.2 -8.2M736.8 297.1l-1.2 -8.2M738.9 311.7l-1.2 -8.2M741.1 326.2l-1.2 -8.2M743.2 340.8l-1.2 -8.2M745.3 355.4l-1.2 -8.2M747.5 370l-1.2 -8.2M749.6 384.6l-1.2 -8.2M718.1 142.2l-1 -8M719.9 156.4l-1 -8M721.8 170.7l-1 -8M723.6 185l-1 -8M725.5 199.3l-1 -8M727.4 213.5l-1 -8M729.2 227.8l-1 -8M731.1 242.1l-1 -8M733 256.3l-1 -8M734.8 270.6l-1 -8M736.7 284.9l-1 -8M738.5 299.1l-1 -8M740.4 313.4l-1 -8M742.3 327.7l-1 -8M744.1 342l-1 -8M746 356.2l-1 -8M722.7 148.1l-0.9 -7.8M724.3 162.1l-0.9 -7.8M725.9 176l-0.9 -7.8M727.5 189.9l-0.9 -7.8M729.1 203.9l-0.9 -7.8M730.7 217.8l-0.9 -7.8M732.3 231.7l-0.9 -7.8M733.9 245.6l-0.9 -7.8M735.5 259.6l-0.9 -7.8M737.1 273.5l-0.9 -7.8M738.7 287.4l-0.9 -7.8M740.3 301.3l-0.9 -7.8M741.9 315.3l-0.9 -7.8M743.4 329.2l-0.9 -7.8M745 343.1l-0.9 -7.8M746.6 357.1l-0.9 -7.8M748.2 371l-0.9 -7.8M727.3 154.4l-0.7 -7.6M728.6 168l-0.7 -7.6M730 181.5l-0.7 -7.6M731.3 195.1l-0.7 -7.6M732.6 208.7l-0.7 -7.6M734 222.2l-0.7 -7.6M735.3 235.8l-0.7 -7.6M736.6 249.4l-0.7 -7.6M737.9 262.9l-0.7 -7.6M739.3 276.5l-0.7 -7.6M740.6 290.1l-0.7 -7.6M741.9 303.6l-0.7 -7.6M743.3 317.2l-0.7 -7.6M744.6 330.8l-0.7 -7.6M745.9 344.4l-0.7 -7.6M747.3 357.9l-0.7 -7.6M731.8 160.9l-0.6 -7.4M732.9 174.1l-0.6 -7.4M733.9 187.3l-0.6 -7.4M735 200.5l-0.6 -7.4M736.1 213.7l-0.6 -7.4M737.1 226.9l-0.6 -7.4M738.2 240l-0.6 -7.4M739.3 253.2l-0.6 -7.4M740.4 266.4l-0.6 -7.4M741.4 279.6l-0.6 -7.4M742.5 292.8l-0.6 -7.4M743.6 306l-0.6 -7.4M744.7 319.2l-0.6 -7.4M745.7 332.4l-0.6 -7.4M746.8 345.6l-0.6 -7.4M747.9 358.8l-0.6 -7.4M749 372l-0.6 -7.4M736.2 167.6l-0.5 -7.2M737 180.4l-0.5 -7.2M737.8 193.2l-0.5 -7.2M738.6 206l-0.5 -7.2M739.5 218.8l-0.5 -7.2M740.3 231.6l-0.5 -7.2M741.1 244.4l-0.5 -7.2M741.9 257.2l-0.5 -7.2M742.8 270.1l-0.5 -7.2M743.6 282.9l-0.5 -7.2M744.4 295.7l-0.5 -7.2M745.2 308.5l-0.5 -7.2M746 321.3l-0.5 -7.2M746.9 334.1l-0.5 -7.2M747.7 346.9l-0.5 -7.2M748.5 359.8l-0.5 -7.2M750.2 385.4l-0.5 -7.2M740.5 174.4l-0.3 -7M741.1 186.9l-0.3 -7M741.7 199.3l-0.3 -7M742.2 211.7l-0.3 -7M742.8 224.1l-0.3 -7M743.4 236.5l-0.3 -7M743.9 249l-0.3 -7M744.5 261.4l-0.3 -7M745.1 273.8l-0.3 -7M745.7 286.2l-0.3 -7M746.2 298.6l-0.3 -7M746.8 311l-0.3 -7M747.4 323.5l-0.3 -7M748 335.9l-0.3 -7M748.5 348.3l-0.3 -7M749.1 360.7l-0.3 -7M749.7 373.1l-0.3 -7M744.7 181.5l-0.2 -6.7M745.1 193.5l-0.2 -6.7M745.4 205.5l-0.2 -6.7M745.7 217.6l-0.2 -6.7M746.1 229.6l-0.2 -6.7M746.4 241.6l-0.2 -6.7M746.7 253.6l-0.2 -6.7M747.1 265.6l-0.2 -6.7M747.4 277.6l-0.2 -6.7M747.7 289.6l-0.2 -6.7M748.1 301.6l-0.2 -6.7M748.4 313.6l-0.2 -6.7M748.7 325.7l-0.2 -6.7M749 337.7l-0.2 -6.7M749.4 349.7l-0.2 -6.7M749.7 361.7l-0.2 -6.7M748.9 188.7l-0.1 -6.5M749 200.3l-0.1 -6.5M749.1 211.9l-0.1 -6.5M749.2 223.5l-0.1 -6.5M749.3 235.1l-0.1 -6.5M749.4 246.7l-0.1 -6.5M749.5 258.3l-0.1 -6.5M749.6 269.9l-0.1 -6.5M749.6 281.5l-0.1 -6.5M749.7 293.1l-0.1 -6.5M749.8 304.7l-0.1 -6.5M749.9 316.3l-0.1 -6.5M750 327.9l-0.1 -6.5M750.1 339.5l-0.1 -6.5M750.2 351.1l-0.1 -6.5M750.3 362.7l-0.1 -6.5M750.4 374.3l-0.1 -6.5M753 196.1l0.1 -6.3M752.9 207.3l0.1 -6.3M752.7 218.5l0.1 -6.3M752.6 229.6l0.1 -6.3M752.4 240.8l0.1 -6.3M752.3 252l0.1 -6.3M752.1 263.2l0.1 -6.3M752 274.3l0.1 -6.3M751.9 285.5l0.1 -6.3M751.7 296.7l0.1 -6.3M751.6 307.9l0.1 -6.3M751.4 319l0.1 -6.3M751.3 330.2l0.1 -6.3M751.1 341.4l0.1 -6.3M751 352.5l0.1 -6.3M750.8 363.7l0.1 -6.3M757 203.6l0.2 -6M756.7 214.4l0.2 -6M756.3 225.1l0.2 -6M755.9 235.9l0.2 -6M755.5 246.6l0.2 -6M755.2 257.4l0.2 -6M754.8 268.1l0.2 -6M754.4 278.8l0.2 -6M754 289.6l0.2 -6M753.7 300.3l0.2 -6M753.3 311.1l0.2 -6M752.9 321.8l0.2 -6M752.5 332.5l0.2 -6M752.2 343.3l0.2 -6M751.8 354l0.2 -6M751.4 364.8l0.2 -6M751 375.5l0.2 -6M750.7 386.2l0.2 -6M761 211.3l0.3 -5.8M760.4 221.6l0.3 -5.8M759.8 231.9l0.3 -5.8M759.2 242.2l0.3 -5.8M758.6 252.5l0.3 -5.8M758 262.8l0.3 -5.8M757.4 273.1l0.3 -5.8M756.8 283.4l0.3 -5.8M756.2 293.7l0.3 -5.8M755.6 304l0.3 -5.8M755 314.3l0.3 -5.8M754.4 324.6l0.3 -5.8M753.8 334.9l0.3 -5.8M753.2 345.2l0.3 -5.8M752.6 355.5l0.3 -5.8M752 365.8l0.3 -5.8M764.9 219.1l0.5 -5.5M764.1 228.9l0.5 -5.5M763.2 238.8l0.5 -5.5M762.4 248.6l0.5 -5.5M761.6 258.5l0.5 -5.5M760.8 268.3l0.5 -5.5M759.9 278.2l0.5 -5.5M759.1 288.1l0.5 -5.5M758.3 297.9l0.5 -5.5M757.5 307.8l0.5 -5.5M756.6 317.6l0.5 -5.5M755.8 327.5l0.5 -5.5M755 337.3l0.5 -5.5M754.1 347.2l0.5 -5.5M753.3 357.1l0.5 -5.5M752.5 366.9l0.5 -5.5M751.7 376.8l0.5 -5.5M768.7 226.9l0.6 -5.3M767.7 236.3l0.6 -5.3M766.6 245.7l0.6 -5.3M765.6 255.1l0.6 -5.3M764.5 264.6l0.6 -5.3M763.5 274l0.6 -5.3M762.4 283.4l0.6 -5.3M761.4 292.8l0.6 -5.3M760.3 302.2l0.6 -5.3M759.3 311.6l0.6 -5.3M758.3 321l0.6 -5.3M757.2 330.4l0.6 -5.3M756.2 339.8l0.6 -5.3M755.1 349.2l0.6 -5.3M754.1 358.6l0.6 -5.3M753 368l0.6 -5.3M772.4 234.9l0.7 -5M771.2 243.9l0.7 -5M769.9 252.8l0.7 -5M768.7 261.8l0.7 -5M767.4 270.7l0.7 -5M766.1 279.6l0.7 -5M764.9 288.6l0.7 -5M763.6 297.5l0.7 -5M762.4 306.5l0.7 -5M761.1 315.4l0.7 -5M759.8 324.4l0.7 -5M758.6 333.3l0.7 -5M757.3 342.3l0.7 -5M756.1 351.2l0.7 -5M754.8 360.2l0.7 -5M753.5 369.1l0.7 -5M752.3 378.1l0.7 -5M751 387l0.7 -5M776.1 243l0.8 -4.8M774.7 251.5l0.8 -4.8M773.2 260l0.8 -4.8M771.7 268.4l0.8 -4.8M770.2 276.9l0.8 -4.8M768.8 285.4l0.8 -4.8M767.3 293.9l0.8 -4.8M765.8 302.4l0.8 -4.8M764.4 310.9l0.8 -4.8M762.9 319.3l0.8 -4.8M761.4 327.8l0.8 -4.8M759.9 336.3l0.8 -4.8M758.5 344.8l0.8 -4.8M757 353.3l0.8 -4.8M755.5 361.7l0.8 -4.8M754.1 370.2l0.8 -4.8M779.7 251.2l0.9 -4.5M778.1 259.2l0.9 -4.5M776.4 267.2l0.9 -4.5M774.7 275.2l0.9 -4.5M773 283.2l0.9 -4.5M771.3 291.2l0.9 -4.5M769.7 299.2l0.9 -4.5M768 307.3l0.9 -4.5M766.3 315.3l0.9 -4.5M764.6 323.3l0.9 -4.5M763 331.3l0.9 -4.5M761.3 339.3l0.9 -4.5M759.6 347.3l0.9 -4.5M757.9 355.3l0.9 -4.5M756.2 363.4l0.9 -4.5M754.6 371.4l0.9 -4.5M752.9 379.4l0.9 -4.5M783.3 259.4l1.1 -4.2M781.4 266.9l1.1 -4.2M779.5 274.5l1.1 -4.2M777.6 282l1.1 -4.2M775.8 289.6l1.1 -4.2M773.9 297.1l1.1 -4.2M772 304.6l1.1 -4.2M770.1 312.2l1.1 -4.2M768.2 319.7l1.1 -4.2M766.3 327.3l1.1 -4.2M764.5 334.8l1.1 -4.2M762.6 342.3l1.1 -4.2M760.7 349.9l1.1 -4.2M758.8 357.4l1.1 -4.2M756.9 365l1.1 -4.2M755.1 372.5l1.1 -4.2M786.8 267.7l1.2 -4M784.7 274.8l1.2 -4M782.6 281.8l1.2 -4M780.5 288.9l1.2 -4M778.4 296l1.2 -4M776.4 303l1.2 -4M774.3 310.1l1.2 -4M772.2 317.2l1.2 -4M770.1 324.2l1.2 -4M768 331.3l1.2 -4M766 338.4l1.2 -4M763.9 345.4l1.2 -4M761.8 352.5l1.2 -4M759.7 359.5l1.2 -4M757.6 366.6l1.2 -4M755.5 373.7l1.2 -4M753.5 380.7l1.2 -4M751.4 387.8l1.2 -4M790.2 276.2l1.3 -3.9M787.8 283.1l1.3 -3.9M785.4 290l1.3 -3.9M783 296.9l1.3 -3.9M780.6 303.8l1.3 -3.9M778.2 310.7l1.3 -3.9M775.8 317.6l1.3 -3.9M773.4 324.5l1.3 -3.9M771.1 331.4l1.3 -3.9M768.7 338.3l1.3 -3.9M765.1 348.5l1.3 -3.7M762.8 355.1l1.3 -3.7M760.6 361.7l1.3 -3.7M758.3 368.3l1.3 -3.7M756 374.8l1.3 -3.7M793.5 284.8l1.5 -3.8M790.7 291.5l1.5 -3.8M788 298.3l1.5 -3.8M785.2 305l1.5 -3.8M782.5 311.8l1.5 -3.8M779.8 318.6l1.5 -3.8M777 325.3l1.5 -3.8M774.3 332.1l1.5 -3.8M771.5 338.9l1.5 -3.8M768.8 345.5l1.4 -3.4M766.4 351.6l1.4 -3.4M763.9 357.7l1.4 -3.4M761.4 363.8l1.4 -3.4M758.9 369.9l1.4 -3.4M756.5 376l1.4 -3.4M754 382.1l1.4 -3.4M796.7 293.4l1.8 -3.7M793.6 300l1.8 -3.7M790.4 306.6l1.8 -3.7M787.3 313.1l1.8 -3.7M784.2 319.7l1.8 -3.7M781.1 326.3l1.8 -3.7M777.9 332.9l1.8 -3.7M774.8 339.5l1.8 -3.7M771.7 346.1l1.8 -3.7M767.6 354.8l1.5 -3.1M764.9 360.4l1.5 -3.1M762.3 366l1.5 -3.1M759.6 371.6l1.5 -3.1M756.9 377.2l1.5 -3.1M799.8 302l2 -3.6M796.3 308.4l2 -3.6M792.7 314.8l2 -3.6M789.2 321.2l2 -3.6M785.7 327.5l2 -3.6M782.1 333.9l2 -3.6M778.6 340.3l2 -3.6M775 346.7l2 -3.6M771.6 352.8l1.6 -2.9M768.8 357.9l1.6 -2.9M765.9 363l1.6 -2.9M763.1 368.2l1.6 -2.9M760.2 373.3l1.6 -2.9M757.4 378.4l1.6 -2.9M754.5 383.5l1.6 -2.9M751.7 388.6l1.6 -2.9M802.9 310.7l2.2 -3.4M798.9 316.8l2.2 -3.4M794.9 322.9l2.2 -3.4M790.9 329l2.2 -3.4M786.9 335.1l2.2 -3.4M782.9 341.2l2.2 -3.4M778.9 347.3l2.2 -3.4M774.9 353.4l2.2 -3.4M772.9 356.5l1.7 -2.6M769.9 361.1l1.7 -2.6M766.9 365.7l1.7 -2.6M763.9 370.3l1.7 -2.6M760.8 375l1.7 -2.6M757.8 379.6l1.7 -2.6M805.9 319.4l2.5 -3.2M801.4 325.2l2.5 -3.2M797 330.9l2.5 -3.2M792.5 336.7l2.5 -3.2M788 342.5l2.5 -3.2M783.5 348.2l2.5 -3.2M779 354l2.5 -3.2M774.3 360.2l1.8 -2.3M771.1 364.3l1.8 -2.3M767.9 368.4l1.8 -2.3M764.6 372.5l1.8 -2.3M761.4 376.7l1.8 -2.3M758.2 380.8l1.8 -2.3M755 384.9l1.8 -2.3M808.8 328.1l2.8 -3M803.9 333.5l2.8 -3M798.9 338.8l2.8 -3M793.9 344.2l2.8 -3M788.9 349.5l2.8 -3M784 354.9l2.8 -3M779 360.2l2.8 -3M775.5 363.9l1.9 -2M772.2 367.5l1.9 -2M768.8 371.1l1.9 -2M765.4 374.8l1.9 -2M762 378.4l1.9 -2M758.7 382l1.9 -2M811.7 336.9l3.1 -2.7M806.2 341.7l3.1 -2.7M800.7 346.5l3.1 -2.7M795.2 351.4l3.1 -2.7M789.8 356.2l3.1 -2.7M784.3 361l3.1 -2.7M778.8 365.8l3.1 -2.7M776.8 367.6l2 -1.7M773.2 370.7l2 -1.7M769.7 373.9l2 -1.7M766.2 377l2 -1.7M762.6 380.1l2 -1.7M759.1 383.2l2 -1.7M755.5 386.3l2 -1.7M752 389.4l2 -1.7M814.5 345.6l3.3 -2.4M808.5 349.9l3.3 -2.4M802.5 354.1l3.3 -2.4M796.6 358.3l3.3 -2.4M790.6 362.5l3.3 -2.4M784.6 366.7l3.3 -2.4M778.7 370.9l3.3 -2.4M774.3 374l2.1 -1.5M770.6 376.6l2.1 -1.5M766.9 379.2l2.1 -1.5M763.2 381.8l2.1 -1.5M759.5 384.4l2.1 -1.5M817.2 354.4l3.6 -2M810.8 357.9l3.6 -2M804.4 361.4l3.6 -2M798 364.9l3.6 -2M791.6 368.4l3.6 -2M785.1 371.9l3.6 -2M779.2 375.1l2.2 -1.2M775.3 377.2l2.2 -1.2M771.5 379.3l2.2 -1.2M767.6 381.4l2.2 -1.2M763.7 383.5l2.2 -1.2M759.9 385.7l2.2 -1.2M756 387.8l2.2 -1.2M819.9 363.2l3.8 -1.5M813.1 365.9l3.8 -1.5M806.3 368.6l3.8 -1.5M799.5 371.3l3.8 -1.5M792.7 374l3.8 -1.5M785.9 376.7l3.8 -1.5M780.4 378.9l2.3 -0.9M776.3 380.5l2.3 -0.9M772.3 382.1l2.3 -0.9M768.3 383.7l2.3 -0.9M764.3 385.3l2.3 -0.9M760.2 386.9l2.3 -0.9M822.5 371.9l4 -1M815.4 373.8l4 -1M808.4 375.6l4 -1M801.3 377.5l4 -1M794.2 379.3l4 -1M787.2 381.2l4 -1M781.5 382.6l2.3 -0.6M777.3 383.7l2.3 -0.6M773.1 384.8l2.3 -0.6M769 385.9l2.3 -0.6M764.8 387l2.3 -0.6M760.6 388.1l2.3 -0.6M756.4 389.2l2.3 -0.6M752.3 390.3l2.3 -0.6M825.1 380.7l4.1 -0.5M817.8 381.7l4.1 -0.5M810.6 382.7l4.1 -0.5M803.4 383.6l4.1 -0.5M796.1 384.6l4.1 -0.5M788.9 385.6l4.1 -0.5M782.6 386.4l2.4 -0.3M778.3 387l2.4 -0.3M774 387.6l2.4 -0.3M769.6 388.2l2.4 -0.3M765.3 388.8l2.4 -0.3M761 389.3l2.4 -0.3M827.6 389.5l4.1 -0.1M820.3 389.6l4.1 -0.1M813 389.7l4.1 -0.1M805.7 389.9l4.1 -0.1M798.4 390l4.1 -0.1M791.1 390.1l4.1 -0.1M783.7 390.2l2.5 -0M779.2 390.3l2.5 -0M774.7 390.4l2.5 -0M770.3 390.4l2.5 -0M765.8 390.5l2.5 -0M761.3 390.6l2.5 -0M756.8 390.7l2.5 -0M830.1 398.3l4.1 0.4M822.8 397.6l4.1 0.4M815.5 396.9l4.1 0.4M808.3 396.2l4.1 0.4M801 395.6l4.1 0.4M793.7 394.9l4.1 0.4M786.5 394.2l4.1 0.4M780.1 393.6l2.6 0.2M775.5 393.1l2.6 0.2M770.9 392.7l2.6 0.2M766.3 392.3l2.6 0.2M761.7 391.8l2.6 0.2M832.5 407.2l4 0.8M825.4 405.7l4 0.8M818.2 404.3l4 0.8M811 402.9l4 0.8M803.9 401.4l4 0.8M796.7 400l4 0.8M789.6 398.6l4 0.8M785.7 397.8l2.7 0.5M781 396.9l2.7 0.5M776.2 395.9l2.7 0.5M771.5 395l2.7 0.5M766.7 394l2.7 0.5M762 393.1l2.7 0.5M757.2 392.1l2.7 0.5M752.5 391.2l2.7 0.5M834.9 416l3.9 1.2M827.9 413.9l3.9 1.2M820.9 411.8l3.9 1.2M813.9 409.7l3.9 1.2M806.9 407.7l3.9 1.2M799.9 405.6l3.9 1.2M792.9 403.5l3.9 1.2M786.7 401.6l2.7 0.8M781.8 400.1l2.7 0.8M776.9 398.7l2.7 0.8M772.1 397.2l2.7 0.8M767.2 395.8l2.7 0.8M762.3 394.3l2.7 0.8M837.2 424.9l3.8 1.5M830.4 422.2l3.8 1.5M823.6 419.6l3.8 1.5M816.8 416.9l3.8 1.5M810 414.2l3.8 1.5M803.2 411.5l3.8 1.5M796.4 408.9l3.8 1.5M789.6 406.2l3.8 1.5M782.6 403.4l2.8 1.1M777.6 401.5l2.8 1.1M772.6 399.5l2.8 1.1M767.6 397.5l2.8 1.1M762.6 395.5l2.8 1.1M757.6 393.6l2.8 1.1M839.4 433.8l3.7 1.8M832.8 430.6l3.7 1.8M826.2 427.5l3.7 1.8M819.7 424.3l3.7 1.8M813.1 421.1l3.7 1.8M806.5 417.9l3.7 1.8M800 414.7l3.7 1.8M793.4 411.5l3.7 1.8M788.5 409.2l2.9 1.4M783.4 406.7l2.9 1.4M778.3 404.2l2.9 1.4M773.2 401.7l2.9 1.4M768 399.3l2.9 1.4M762.9 396.8l2.9 1.4M841.5 442.7l3.5 2M835.2 439.1l3.5 2M828.8 435.5l3.5 2M822.5 431.9l3.5 2M816.2 428.3l3.5 2M809.8 424.6l3.5 2M803.5 421l3.5 2M797.1 417.4l3.5 2M790.8 413.8l3.5 2M784.2 410l2.9 1.7M778.9 407l2.9 1.7M773.7 404l2.9 1.7M768.4 401l2.9 1.7M763.2 398l2.9 1.7M757.9 395l2.9 1.7M752.7 392l2.9 1.7M843.6 451.7l3.4 2.2M837.4 447.7l3.4 2.2M831.3 443.7l3.4 2.2M825.2 439.7l3.4 2.2M819.1 435.7l3.4 2.2M813 431.7l3.4 2.2M806.9 427.7l3.4 2.2M800.8 423.7l3.4 2.2M794.7 419.7l3.4 2.2M790.2 416.8l3 2M784.9 413.3l3 2M779.5 409.8l3 2M774.2 406.2l3 2M768.8 402.7l3 2M763.5 399.2l3 2M845.5 460.6l3.3 2.4M839.6 456.3l3.3 2.4M833.7 451.9l3.3 2.4M827.9 447.6l3.3 2.4M822 443.3l3.3 2.4M816.1 439l3.3 2.4M810.2 434.6l3.3 2.4M804.3 430.3l3.3 2.4M798.5 426l3.3 2.4M792.6 421.7l3.3 2.4M785.6 416.5l3.1 2.2M780.1 412.5l3.1 2.2M774.6 408.5l3.1 2.2M769.2 404.5l3.1 2.2M763.7 400.5l3.1 2.2M758.3 396.5l3.1 2.2M847.4 469.5l3.2 2.6M841.7 464.9l3.2 2.6M836 460.3l3.2 2.6M830.4 455.7l3.2 2.6M824.7 451.1l3.2 2.6M819 446.5l3.2 2.6M813.4 441.9l3.2 2.6M807.7 437.3l3.2 2.6M802.1 432.7l3.2 2.6M796.4 428.1l3.2 2.6M791.8 424.3l3.1 2.5M786.2 419.8l3.1 2.5M780.6 415.3l3.1 2.5M775.1 410.7l3.1 2.5M769.5 406.2l3.1 2.5M764 401.7l3.1 2.5M849.1 478.3l3.2 2.8M843.4 473.3l3.2 2.8M837.8 468.3l3.2 2.8M832.1 463.3l3.2 2.8M826.4 458.2l3.2 2.8M820.8 453.2l3.2 2.8M815.1 448.2l3.2 2.8M809.5 443.1l3.2 2.8M803.8 438.1l3.2 2.8M798.1 433.1l3.2 2.8M792.5 428.1l3.2 2.8M786.8 423l3.2 2.8M781.2 418l3.2 2.8M775.5 413l3.2 2.8M769.9 408l3.2 2.8M764.2 402.9l3.2 2.8M758.5 397.9l3.2 2.8M752.9 392.9l3.2 2.8M850.7 487.1l3.2 3.1M844.9 481.6l3.2 3.1M839.2 476.1l3.2 3.1M833.4 470.5l3.2 3.1M827.7 465l3.2 3.1M821.9 459.5l3.2 3.1M816.2 453.9l3.2 3.1M810.4 448.4l3.2 3.1M804.7 442.9l3.2 3.1M798.9 437.3l3.2 3.1M793.2 431.8l3.2 3.1M787.4 426.3l3.2 3.1M781.7 420.7l3.2 3.1M775.9 415.2l3.2 3.1M770.2 409.7l3.2 3.1M764.4 404.1l3.2 3.1M852.1 495.9l3.3 3.4M846.3 489.8l3.3 3.4M840.5 483.8l3.3 3.4M834.6 477.8l3.3 3.4M828.8 471.7l3.3 3.4M823 465.7l3.3 3.4M817.1 459.7l3.3 3.4M811.3 453.6l3.3 3.4M805.5 447.6l3.3 3.4M799.6 441.6l3.3 3.4M793.8 435.5l3.3 3.4M788 429.5l3.3 3.4M782.1 423.5l3.3 3.4M776.3 417.4l3.3 3.4M770.5 411.4l3.3 3.4M764.6 405.4l3.3 3.4M758.8 399.3l3.3 3.4M853.5 504.6l3.3 3.7M847.6 498l3.3 3.7M841.7 491.5l3.3 3.7M835.8 485l3.3 3.7M829.9 478.4l3.3 3.7M824 471.9l3.3 3.7M818 465.4l3.3 3.7M812.1 458.8l3.3 3.7M806.2 452.3l3.3 3.7M800.3 445.8l3.3 3.7M794.4 439.2l3.3 3.7M788.5 432.7l3.3 3.7M782.6 426.2l3.3 3.7M776.6 419.6l3.3 3.7M770.7 413.1l3.3 3.7M764.8 406.6l3.3 3.7M854.8 513.2l3.4 3.9M848.8 506.2l3.4 3.9M842.8 499.2l3.4 3.9M836.8 492.1l3.4 3.9M830.9 485.1l3.4 3.9M824.9 478.1l3.4 3.9M818.9 471l3.4 3.9M812.9 464l3.4 3.9M806.9 457l3.4 3.9M800.9 450l3.4 3.9M794.9 442.9l3.4 3.9M788.9 435.9l3.4 3.9M783 428.9l3.4 3.9M777 421.8l3.4 3.9M771 414.8l3.4 3.9M765 407.8l3.4 3.9M759 400.7l3.4 3.9M753 393.7l3.4 3.9M856 521.8l3.4 4.2M849.9 514.3l3.4 4.2M843.9 506.8l3.4 4.2M837.8 499.3l3.4 4.2M831.8 491.7l3.4 4.2M825.7 484.2l3.4 4.2M819.6 476.7l3.4 4.2M813.6 469.2l3.4 4.2M807.5 461.6l3.4 4.2M801.5 454.1l3.4 4.2M795.4 446.6l3.4 4.2M789.4 439.1l3.4 4.2M783.3 431.5l3.4 4.2M777.3 424l3.4 4.2M771.2 416.5l3.4 4.2M765.2 409l3.4 4.2M857 530.4l3.4 4.5M850.9 522.4l3.4 4.5M844.8 514.4l3.4 4.5M838.7 506.3l3.4 4.5M832.6 498.3l3.4 4.5M826.4 490.3l3.4 4.5M820.3 482.3l3.4 4.5M814.2 474.3l3.4 4.5M808.1 466.3l3.4 4.5M802 458.3l3.4 4.5M795.9 450.2l3.4 4.5M789.8 442.2l3.4 4.5M783.6 434.2l3.4 4.5M777.5 426.2l3.4 4.5M771.4 418.2l3.4 4.5M765.3 410.2l3.4 4.5M759.2 402.1l3.4 4.5M858 538.9l3.5 4.8M851.8 530.4l3.5 4.8M845.6 521.9l3.5 4.8M839.5 513.4l3.5 4.8M833.3 504.9l3.5 4.8M827.1 496.4l3.5 4.8M820.9 487.9l3.5 4.8M814.8 479.4l3.5 4.8M808.6 470.9l3.5 4.8M802.4 462.4l3.5 4.8M796.3 453.8l3.5 4.8M790.1 445.3l3.5 4.8M783.9 436.8l3.5 4.8M777.8 428.3l3.5 4.8M771.6 419.8l3.5 4.8M765.4 411.3l3.5 4.8M858.8 547.3l3.5 5M852.6 538.3l3.5 5M846.3 529.3l3.5 5M840.1 520.3l3.5 5M833.9 511.3l3.5 5M827.7 502.4l3.5 5M821.5 493.4l3.5 5M815.3 484.4l3.5 5M809.1 475.4l3.5 5M802.8 466.4l3.5 5M796.6 457.4l3.5 5M790.4 448.4l3.5 5M784.2 439.5l3.5 5M778 430.5l3.5 5M771.8 421.5l3.5 5M765.5 412.5l3.5 5M759.3 403.5l3.5 5M753.1 394.5l3.5 5M859.5 555.6l3.5 5.3M853.2 546.2l3.5 5.3M847 536.7l3.5 5.3M840.7 527.2l3.5 5.3M834.4 517.8l3.5 5.3M828.2 508.3l3.5 5.3M821.9 498.8l3.5 5.3M815.7 489.4l3.5 5.3M809.4 479.9l3.5 5.3M803.2 470.4l3.5 5.3M796.9 461l3.5 5.3M790.7 451.5l3.5 5.3M784.4 442.1l3.5 5.3M778.1 432.6l3.5 5.3M771.9 423.1l3.5 5.3M765.6 413.7l3.5 5.3M860 563.9l3.5 5.6M853.7 553.9l3.5 5.6M847.4 544l3.5 5.6M841.1 534l3.5 5.6M834.9 524.1l3.5 5.6M828.6 514.2l3.5 5.6M822.3 504.2l3.5 5.6M816 494.3l3.5 5.6M809.7 484.4l3.5 5.6M803.4 474.4l3.5 5.6M797.1 464.5l3.5 5.6M790.9 454.6l3.5 5.6M784.6 444.6l3.5 5.6M778.3 434.7l3.5 5.6M772 424.7l3.5 5.6M765.7 414.8l3.5 5.6M759.4 404.9l3.5 5.6M860.4 572l3.5 5.8M854.1 561.6l3.5 5.8M847.8 551.2l3.5 5.8M841.5 540.8l3.5 5.8M835.2 530.4l3.5 5.8M828.9 520l3.5 5.8M822.6 509.6l3.5 5.8M816.2 499.2l3.5 5.8M809.9 488.8l3.5 5.8M803.6 478.4l3.5 5.8M797.3 468l3.5 5.8M791 457.6l3.5 5.8M784.7 447.2l3.5 5.8M778.4 436.7l3.5 5.8M772.1 426.3l3.5 5.8M765.8 415.9l3.5 5.8M860.7 580l3.5 6.1M854.3 569.2l3.5 6.1M848 558.3l3.5 6.1M841.7 547.4l3.5 6.1M835.4 536.6l3.5 6.1M829 525.7l3.5 6.1M822.7 514.8l3.5 6.1M816.4 504l3.5 6.1M810.1 493.1l3.5 6.1M803.8 482.3l3.5 6.1M797.4 471.4l3.5 6.1M791.1 460.5l3.5 6.1M784.8 449.7l3.5 6.1M778.5 438.8l3.5 6.1M772.1 427.9l3.5 6.1M765.8 417.1l3.5 6.1M759.5 406.2l3.5 6.1M860.8 588l3.5 6.3M854.4 576.6l3.5 6.3M848.1 565.3l3.5 6.3M841.8 554l3.5 6.3M835.4 542.7l3.5 6.3M829.1 531.4l3.5 6.3M822.8 520l3.5 6.3M816.5 508.7l3.5 6.3M810.1 497.4l3.5 6.3M803.8 486.1l3.5 6.3M797.5 474.8l3.5 6.3M791.1 463.4l3.5 6.3M784.8 452.1l3.5 6.3M778.5 440.8l3.5 6.3M772.1 429.5l3.5 6.3M765.8 418.2l3.5 6.3M753.2 395.5l3.5 6.3M860.7 595.7l3.5 6.6M854.4 584l3.5 6.6M848 572.2l3.5 6.6M841.7 560.4l3.5 6.6M835.4 548.7l3.5 6.6M829.1 536.9l3.5 6.6M822.7 525.1l3.5 6.6M816.4 513.4l3.5 6.6M810.1 501.6l3.5 6.6M803.8 489.8l3.5 6.6M797.4 478.1l3.5 6.6M791.1 466.3l3.5 6.6M784.8 454.5l3.5 6.6M778.5 442.8l3.5 6.6M772.1 431l3.5 6.6M765.8 419.2l3.5 6.6M759.5 407.5l3.5 6.6M860.4 603.4l3.5 6.8M854.1 591.2l3.5 6.8M847.8 579l3.5 6.8M841.5 566.8l3.5 6.8M835.2 554.6l3.5 6.8M828.9 542.4l3.5 6.8M822.6 530.1l3.5 6.8M816.3 517.9l3.5 6.8M810 505.7l3.5 6.8M803.6 493.5l3.5 6.8M797.3 481.3l3.5 6.8M791 469.1l3.5 6.8M784.7 456.9l3.5 6.8M778.4 444.7l3.5 6.8M772.1 432.5l3.5 6.8M765.8 420.3l3.5 6.8M860 610.8l3.5 7.1M853.7 598.2l3.5 7.1M847.4 585.6l3.5 7.1M841.1 572.9l3.5 7.1M834.8 560.3l3.5 7.1M828.6 547.7l3.5 7.1M822.3 535l3.5 7.1M816 522.4l3.5 7.1M809.7 509.8l3.5 7.1M803.4 497.1l3.5 7.1M797.1 484.5l3.5 7.1M790.9 471.9l3.5 7.1M784.6 459.2l3.5 7.1M778.3 446.6l3.5 7.1M772 434l3.5 7.1M765.7 421.3l3.5 7.1M759.4 408.7l3.5 7.1M859.3 618.1l3.5 7.3M853.1 605.1l3.5 7.3M846.8 592l3.5 7.3M840.6 579l3.5 7.3M834.3 565.9l3.5 7.3M828.1 552.9l3.5 7.3M821.8 539.8l3.5 7.3M815.6 526.8l3.5 7.3M809.3 513.7l3.5 7.3M803.1 500.7l3.5 7.3M796.9 487.6l3.5 7.3M790.6 474.6l3.5 7.3M784.4 461.5l3.5 7.3M778.1 448.4l3.5 7.3M771.9 435.4l3.5 7.3M765.6 422.3l3.5 7.3M858.4 625.2l3.5 7.5M852.2 611.7l3.5 7.5M846 598.3l3.5 7.5M839.8 584.8l3.5 7.5M833.6 571.4l3.5 7.5M827.4 557.9l3.5 7.5M821.3 544.4l3.5 7.5M815.1 531l3.5 7.5M808.9 517.5l3.5 7.5M802.7 504.1l3.5 7.5M796.5 490.6l3.5 7.5M790.3 477.2l3.5 7.5M784.1 463.7l3.5 7.5M777.9 450.2l3.5 7.5M771.7 436.8l3.5 7.5M765.5 423.3l3.5 7.5M759.3 409.9l3.5 7.5M753.1 396.4l3.5 7.5M857.3 632l3.4 7.8M851.2 618.2l3.4 7.8M845 604.3l3.4 7.8M838.9 590.5l3.4 7.8M832.8 576.6l3.4 7.8M826.6 562.8l3.4 7.8M820.5 548.9l3.4 7.8M814.4 535.1l3.4 7.8M808.2 521.2l3.4 7.8M802.1 507.4l3.4 7.8M796 493.5l3.4 7.8M789.9 479.7l3.4 7.8M783.7 465.8l3.4 7.8M777.6 452l3.4 7.8M771.5 438.1l3.4 7.8M765.3 424.3l3.4 7.8M855.9 638.5l3.4 8M849.8 624.3l3.4 8M843.8 610.1l3.4 8M837.7 595.9l3.4 8M831.7 581.6l3.4 8M825.6 567.4l3.4 8M819.6 553.2l3.4 8M813.5 539l3.4 8M807.5 524.8l3.4 8M801.4 510.5l3.4 8M795.4 496.3l3.4 8M789.3 482.1l3.4 8M783.3 467.9l3.4 8M777.2 453.6l3.4 8M771.2 439.4l3.4 8M765.1 425.2l3.4 8M759.1 411l3.4 8M854.1 644.7l3.3 8.2M848.2 630.2l3.3 8.2M842.2 615.6l3.3 8.2M836.3 601l3.3 8.2M830.3 586.4l3.3 8.2M824.4 571.8l3.3 8.2M818.4 557.3l3.3 8.2M812.5 542.7l3.3 8.2M806.5 528.1l3.3 8.2M800.6 513.5l3.3 8.2M794.6 498.9l3.3 8.2M788.7 484.4l3.3 8.2M782.7 469.8l3.3 8.2M776.8 455.2l3.3 8.2M770.8 440.6l3.3 8.2M764.9 426l3.3 8.2M852.1 650.6l3.3 8.4M846.2 635.6l3.3 8.4M840.4 620.7l3.3 8.4M834.6 605.8l3.3 8.4M828.7 590.9l3.3 8.4M822.9 576l3.3 8.4M817.1 561.1l3.3 8.4M811.2 546.2l3.3 8.4M805.4 531.2l3.3 8.4M799.6 516.3l3.3 8.4M793.8 501.4l3.3 8.4M787.9 486.5l3.3 8.4M782.1 471.6l3.3 8.4M776.3 456.7l3.3 8.4M770.4 441.8l3.3 8.4M764.6 426.9l3.3 8.4M758.8 411.9l3.3 8.4M849.6 655.9l3.2 8.5M843.9 640.7l3.2 8.5M838.2 625.4l3.2 8.5M832.5 610.2l3.2 8.5M826.8 595l3.2 8.5M821.2 579.8l3.2 8.5M815.5 564.6l3.2 8.5M809.8 549.3l3.2 8.5M804.1 534.1l3.2 8.5M798.4 518.9l3.2 8.5M792.7 503.7l3.2 8.5M787 488.5l3.2 8.5M781.3 473.2l3.2 8.5M775.6 458l3.2 8.5M770 442.8l3.2 8.5M764.3 427.6l3.2 8.5M846.8 660.6l3.1 8.7M841.2 645.1l3.1 8.7M835.7 629.6l3.1 8.7M830.2 614.1l3.1 8.7M824.6 598.7l3.1 8.7M819.1 583.2l3.1 8.7M813.6 567.7l3.1 8.7M808.1 552.2l3.1 8.7M802.5 536.7l3.1 8.7M797 521.2l3.1 8.7M791.5 505.7l3.1 8.7M786 490.2l3.1 8.7M780.4 474.7l3.1 8.7M774.9 459.2l3.1 8.7M769.4 443.7l3.1 8.7M758.3 412.8l3.1 8.7M752.8 397.3l3.1 8.7M843.5 664.6l3 8.8M838.1 648.9l3 8.8M832.8 633.2l3 8.8M827.5 617.5l3 8.8M822.1 601.7l3 8.8M816.8 586l3 8.8M811.5 570.3l3 8.8M806.1 554.6l3 8.8M800.8 538.9l3 8.8M795.4 523.1l3 8.8M790.1 507.4l3 8.8M784.8 491.7l3 8.8M779.4 476l3 8.8M774.1 460.2l3 8.8M768.8 444.5l3 8.8M763.4 428.8l3 8.8M839.8 667.8l2.9 8.9M834.7 651.9l2.9 8.9M829.6 636l2.9 8.9M824.5 620.1l2.9 8.9M819.3 604.2l2.9 8.9M814.2 588.3l2.9 8.9M809.1 572.4l2.9 8.9M803.9 556.5l2.9 8.9M798.8 540.6l2.9 8.9M793.7 524.7l2.9 8.9M788.6 508.8l2.9 8.9M783.4 492.9l2.9 8.9M778.3 476.9l2.9 8.9M773.2 461l2.9 8.9M768 445.1l2.9 8.9M757.8 413.3l2.9 8.9M836 669.9l2.7 9M831.1 653.9l2.7 9M826.2 637.9l2.7 9M821.3 621.9l2.7 9M816.3 605.8l2.7 9M811.4 589.8l2.7 9M806.5 573.8l2.7 9M801.6 557.8l2.7 9M796.7 541.7l2.7 9M791.8 525.7l2.7 9M786.9 509.7l2.7 9M782 493.6l2.7 9M777.1 477.6l2.7 9M772.2 461.6l2.7 9M767.3 445.6l2.7 9M762.4 429.5l2.7 9M832.1 671.1l2.6 9M827.4 655l2.6 9M822.7 638.9l2.6 9M818 622.8l2.6 9M813.4 606.7l2.6 9M808.7 590.6l2.6 9M804 574.6l2.6 9M799.3 558.5l2.6 9M794.6 542.4l2.6 9M789.9 526.3l2.6 9M785.3 510.2l2.6 9M780.6 494.1l2.6 9M775.9 478l2.6 9M771.2 461.9l2.6 9M828 671.5l2.5 9M823.6 655.4l2.5 9M819.1 639.3l2.5 9M814.7 623.1l2.5 9M810.2 607l2.5 9M805.8 590.9l2.5 9M801.3 574.8l2.5 9M796.9 558.7l2.5 9M792.4 542.6l2.5 9M788 526.4l2.5 9M783.5 510.3l2.5 9M779.1 494.2l2.5 9M774.6 478.1l2.5 9M770.2 462l2.5 9M765.7 445.9l2.5 9M761.3 429.8l2.5 9M756.8 413.6l2.5 9M823.4 671l2.3 9M819.2 654.9l2.3 9M815 638.8l2.3 9M810.8 622.7l2.3 9M806.6 606.6l2.3 9M802.5 590.6l2.3 9M798.3 574.5l2.3 9M794.1 558.4l2.3 9M789.9 542.3l2.3 9M785.7 526.2l2.3 9M781.5 510.1l2.3 9M777.4 494l2.3 9M773.2 477.9l2.3 9M769 461.9l2.3 9M764.8 445.8l2.3 9M818.4 669.5l2.2 9M814.5 653.5l2.2 9M810.6 637.5l2.2 9M806.7 621.5l2.2 9M802.8 605.5l2.2 9M798.9 589.5l2.2 9M795 573.5l2.2 9M791.1 557.5l2.2 9M787.2 541.5l2.2 9M783.3 525.5l2.2 9M779.4 509.5l2.2 9M775.5 493.5l2.2 9M771.6 477.5l2.2 9M767.7 461.5l2.2 9M763.8 445.5l2.2 9M759.9 429.5l2.2 9M813.3 667.1l2 8.9M809.7 651.3l2 8.9M806.1 635.4l2 8.9M802.4 619.5l2 8.9M798.8 603.7l2 8.9M795.2 587.8l2 8.9M791.6 571.9l2 8.9M788 556.1l2 8.9M784.4 540.2l2 8.9M780.8 524.3l2 8.9M777.2 508.5l2 8.9M773.6 492.6l2 8.9M770 476.7l2 8.9M766.4 460.9l2 8.9M762.8 445l2 8.9M755.6 413.3l2 8.9M752 397.4l2 8.9M808.1 663.9l1.9 8.8M804.8 648.3l1.9 8.8M801.5 632.6l1.9 8.8M798.2 616.9l1.9 8.8M794.9 601.2l1.9 8.8M791.6 585.5l1.9 8.8M788.2 569.8l1.9 8.8M784.9 554.2l1.9 8.8M781.6 538.5l1.9 8.8M778.3 522.8l1.9 8.8M775 507.1l1.9 8.8M771.7 491.4l1.9 8.8M768.4 475.8l1.9 8.8M765.1 460.1l1.9 8.8M761.8 444.4l1.9 8.8M758.5 428.7l1.9 8.8M802.9 660.1l1.7 8.7M799.9 644.6l1.7 8.7M796.9 629.1l1.7 8.7M793.9 613.7l1.7 8.7M790.9 598.2l1.7 8.7M787.9 582.8l1.7 8.7M784.9 567.3l1.7 8.7M781.9 551.8l1.7 8.7M778.9 536.4l1.7 8.7M775.9 520.9l1.7 8.7M772.8 505.5l1.7 8.7M769.8 490l1.7 8.7M766.8 474.6l1.7 8.7M763.8 459.1l1.7 8.7M760.8 443.6l1.7 8.7M757.8 428.2l1.7 8.7M754.8 412.7l1.7 8.7M797.9 655.6l1.5 8.5M795.2 640.4l1.5 8.5M792.5 625.2l1.5 8.5M789.7 610l1.5 8.5M787 594.8l1.5 8.5M784.3 579.6l1.5 8.5M781.6 564.4l1.5 8.5M778.8 549.2l1.5 8.5M776.1 534l1.5 8.5M773.4 518.8l1.5 8.5M770.7 503.6l1.5 8.5M768 488.4l1.5 8.5M765.2 473.2l1.5 8.5M762.5 458l1.5 8.5M759.8 442.8l1.5 8.5M757.1 427.6l1.5 8.5M792.9 650.7l1.4 8.4M790.5 635.8l1.4 8.4M788.1 620.9l1.4 8.4M785.6 606l1.4 8.4M783.2 591l1.4 8.4M780.8 576.1l1.4 8.4M778.3 561.2l1.4 8.4M775.9 546.3l1.4 8.4M773.4 531.3l1.4 8.4M771 516.4l1.4 8.4M768.6 501.5l1.4 8.4M766.1 486.6l1.4 8.4M763.7 471.6l1.4 8.4M761.3 456.7l1.4 8.4M758.8 441.8l1.4 8.4M756.4 426.9l1.4 8.4M754 412l1.4 8.4M788.1 645.4l1.2 8.2M785.9 630.8l1.2 8.2M783.8 616.2l1.2 8.2M781.6 601.6l1.2 8.2M779.4 587l1.2 8.2M777.3 572.3l1.2 8.2M775.1 557.7l1.2 8.2M773 543.1l1.2 8.2M770.8 528.5l1.2 8.2M768.7 513.9l1.2 8.2M766.5 499.2l1.2 8.2M764.3 484.6l1.2 8.2M762.2 470l1.2 8.2M760 455.4l1.2 8.2M757.9 440.8l1.2 8.2M755.7 426.1l1.2 8.2M751.4 396.9l1.2 8.2M783.3 639.8l1.1 8M781.4 625.5l1.1 8M779.5 611.2l1.1 8M777.7 596.9l1.1 8M775.8 582.6l1.1 8M773.9 568.3l1.1 8M772 554l1.1 8M770.1 539.7l1.1 8M768.2 525.4l1.1 8M766.4 511.1l1.1 8M764.5 496.8l1.1 8M762.6 482.5l1.1 8M760.7 468.2l1.1 8M758.8 453.9l1.1 8M756.9 439.7l1.1 8M755.1 425.4l1.1 8M753.2 411.1l1.1 8M778.6 633.8l0.9 7.8M777 619.9l0.9 7.8M775.4 605.9l0.9 7.8M773.8 592l0.9 7.8M772.2 578l0.9 7.8M770.6 564.1l0.9 7.8M768.9 550.1l0.9 7.8M767.3 536.2l0.9 7.8M765.7 522.2l0.9 7.8M764.1 508.3l0.9 7.8M762.5 494.3l0.9 7.8M760.9 480.3l0.9 7.8M759.3 466.4l0.9 7.8M757.6 452.4l0.9 7.8M756 438.5l0.9 7.8M754.4 424.5l0.9 7.8M774.1 627.6l0.8 7.6M772.7 614l0.8 7.6M771.4 600.4l0.8 7.6M770 586.8l0.8 7.6M768.6 573.2l0.8 7.6M767.3 559.6l0.8 7.6M765.9 546l0.8 7.6M764.6 532.4l0.8 7.6M763.2 518.8l0.8 7.6M761.9 505.2l0.8 7.6M760.5 491.6l0.8 7.6M759.2 478.1l0.8 7.6M757.8 464.5l0.8 7.6M756.5 450.9l0.8 7.6M755.1 437.3l0.8 7.6M753.8 423.7l0.8 7.6M752.4 410.1l0.8 7.6M769.6 621.2l0.6 7.4M768.5 607.9l0.6 7.4M767.4 594.7l0.6 7.4M766.3 581.5l0.6 7.4M765.2 568.3l0.6 7.4M764.1 555l0.6 7.4M763 541.8l0.6 7.4M761.9 528.6l0.6 7.4M760.8 515.3l0.6 7.4M759.7 502.1l0.6 7.4M758.6 488.9l0.6 7.4M757.5 475.7l0.6 7.4M756.4 462.4l0.6 7.4M755.3 449.2l0.6 7.4M754.2 436l0.6 7.4M753.1 422.8l0.6 7.4M765.2 614.5l0.5 7.2M764.3 601.6l0.5 7.2M763.5 588.8l0.5 7.2M762.6 576l0.5 7.2M761.8 563.1l0.5 7.2M760.9 550.3l0.5 7.2M760.1 537.4l0.5 7.2M759.3 524.6l0.5 7.2M758.4 511.7l0.5 7.2M757.6 498.9l0.5 7.2M756.7 486.1l0.5 7.2M755.9 473.2l0.5 7.2M755.1 460.4l0.5 7.2M754.2 447.5l0.5 7.2M753.4 434.7l0.5 7.2M752.5 421.8l0.5 7.2M751.7 409l0.5 7.2M750.9 396.2l0.5 7.2M760.8 607.6l0.3 7M760.2 595.2l0.3 7M759.6 582.7l0.3 7M759 570.3l0.3 7M758.5 557.8l0.3 7M757.9 545.4l0.3 7M757.3 532.9l0.3 7M756.7 520.5l0.3 7M756.1 508l0.3 7M755.5 495.6l0.3 7M754.9 483.1l0.3 7M754.3 470.7l0.3 7M753.7 458.2l0.3 7M753.1 445.8l0.3 7M752.5 433.3l0.3 7M751.9 420.9l0.3 7M756.6 600.6l0.2 6.7M756.2 588.5l0.2 6.7M755.9 576.5l0.2 6.7M755.5 564.4l0.2 6.7M755.2 552.4l0.2 6.7M754.8 540.3l0.2 6.7M754.5 528.3l0.2 6.7M754.1 516.2l0.2 6.7M753.8 504.2l0.2 6.7M753.4 492.2l0.2 6.7M753.1 480.1l0.2 6.7M752.7 468.1l0.2 6.7M752.4 456l0.2 6.7M752 444l0.2 6.7M751.7 431.9l0.2 6.7M751.3 419.9l0.2 6.7M751 407.9l0.2 6.7M752.4 593.3l0.1 6.5M752.3 581.7l0.1 6.5M752.2 570.1l0.1 6.5M752.1 558.4l0.1 6.5M752 546.8l0.1 6.5M751.9 535.2l0.1 6.5M751.7 523.6l0.1 6.5M751.6 511.9l0.1 6.5M751.5 500.3l0.1 6.5M751.4 488.7l0.1 6.5M751.3 477l0.1 6.5M751.2 465.4l0.1 6.5M751.1 453.8l0.1 6.5M751 442.2l0.1 6.5M750.9 430.5l0.1 6.5M750.8 418.9l0.1 6.5M748.3 586l-0.1 6.3M748.4 574.8l-0.1 6.3M748.5 563.6l-0.1 6.3M748.7 552.3l-0.1 6.3M748.8 541.1l-0.1 6.3M748.9 529.9l-0.1 6.3M749.1 518.7l-0.1 6.3M749.2 507.5l-0.1 6.3M749.3 496.3l-0.1 6.3M749.4 485.1l-0.1 6.3M749.6 473.9l-0.1 6.3M749.7 462.7l-0.1 6.3M749.8 451.5l-0.1 6.3M749.9 440.3l-0.1 6.3M750.1 429.1l-0.1 6.3M750.2 417.9l-0.1 6.3M750.3 406.7l-0.1 6.3M744.3 578.5l-0.2 6M744.6 567.7l-0.2 6M745 556.9l-0.2 6M745.3 546.1l-0.2 6M745.7 535.4l-0.2 6M746.1 524.6l-0.2 6M746.4 513.8l-0.2 6M746.8 503l-0.2 6M747.1 492.3l-0.2 6M747.5 481.5l-0.2 6M747.8 470.7l-0.2 6M748.2 459.9l-0.2 6M748.6 449.2l-0.2 6M748.9 438.4l-0.2 6M749.3 427.6l-0.2 6M749.6 416.8l-0.2 6M750.3 395.3l-0.2 6M740.3 570.8l-0.3 5.8M740.9 560.5l-0.3 5.8M741.5 550.1l-0.3 5.8M742.1 539.8l-0.3 5.8M742.6 529.5l-0.3 5.8M743.2 519.1l-0.3 5.8M743.8 508.8l-0.3 5.8M744.4 498.5l-0.3 5.8M745 488.1l-0.3 5.8M745.6 477.8l-0.3 5.8M746.2 467.5l-0.3 5.8M746.7 457.1l-0.3 5.8M747.3 446.8l-0.3 5.8M747.9 436.4l-0.3 5.8M748.5 426.1l-0.3 5.8M749.1 415.8l-0.3 5.8M749.7 405.4l-0.3 5.8M736.4 563.1l-0.5 5.5M737.2 553.2l-0.5 5.5M738 543.3l-0.5 5.5M738.8 533.4l-0.5 5.5M739.6 523.5l-0.5 5.5M740.5 513.6l-0.5 5.5M741.3 503.7l-0.5 5.5M742.1 493.8l-0.5 5.5M742.9 483.9l-0.5 5.5M743.7 474l-0.5 5.5M744.5 464.2l-0.5 5.5M745.3 454.3l-0.5 5.5M746.1 444.4l-0.5 5.5M746.9 434.5l-0.5 5.5M747.7 424.6l-0.5 5.5M748.5 414.7l-0.5 5.5M732.6 555.2l-0.6 5.3M733.6 545.8l-0.6 5.3M734.6 536.3l-0.6 5.3M735.7 526.9l-0.6 5.3M736.7 517.4l-0.6 5.3M737.7 508l-0.6 5.3M738.8 498.6l-0.6 5.3M739.8 489.1l-0.6 5.3M740.8 479.7l-0.6 5.3M741.8 470.2l-0.6 5.3M742.9 460.8l-0.6 5.3M743.9 451.4l-0.6 5.3M744.9 441.9l-0.6 5.3M746 432.5l-0.6 5.3M747 423l-0.6 5.3M748 413.6l-0.6 5.3M749 404.2l-0.6 5.3M728.8 547.2l-0.7 5M730.1 538.2l-0.7 5M731.3 529.3l-0.7 5M732.6 520.3l-0.7 5M733.8 511.3l-0.7 5M735.1 502.3l-0.7 5M736.3 493.3l-0.7 5M737.5 484.3l-0.7 5M738.8 475.4l-0.7 5M740 466.4l-0.7 5M741.3 457.4l-0.7 5M742.5 448.4l-0.7 5M743.8 439.4l-0.7 5M745 430.5l-0.7 5M746.2 421.5l-0.7 5M747.5 412.5l-0.7 5M750 394.5l-0.7 5M725.2 539.2l-0.8 4.8M726.6 530.6l-0.8 4.8M728.1 522.1l-0.8 4.8M729.5 513.6l-0.8 4.8M731 505.1l-0.8 4.8M732.4 496.6l-0.8 4.8M733.9 488l-0.8 4.8M735.3 479.5l-0.8 4.8M736.8 471l-0.8 4.8M738.2 462.5l-0.8 4.8M739.7 454l-0.8 4.8M741.2 445.4l-0.8 4.8M742.6 436.9l-0.8 4.8M744.1 428.4l-0.8 4.8M745.5 419.9l-0.8 4.8M747 411.4l-0.8 4.8M748.4 402.9l-0.8 4.8M721.5 531l-0.9 4.5M723.2 522.9l-0.9 4.5M724.9 514.9l-0.9 4.5M726.5 506.8l-0.9 4.5M728.2 498.8l-0.9 4.5M729.8 490.7l-0.9 4.5M731.5 482.7l-0.9 4.5M733.2 474.6l-0.9 4.5M734.8 466.6l-0.9 4.5M736.5 458.5l-0.9 4.5M738.2 450.5l-0.9 4.5M739.8 442.4l-0.9 4.5M741.5 434.4l-0.9 4.5M743.1 426.3l-0.9 4.5M744.8 418.3l-0.9 4.5M746.5 410.2l-0.9 4.5M718 522.8l-1 4.2M719.8 515.2l-1 4.2M721.7 507.6l-1 4.2M723.6 500l-1 4.2M725.4 492.4l-1 4.2M727.3 484.9l-1 4.2M729.2 477.3l-1 4.2M731 469.7l-1 4.2M732.9 462.1l-1 4.2M734.8 454.6l-1 4.2M736.6 447l-1 4.2M738.5 439.4l-1 4.2M740.4 431.8l-1 4.2M742.2 424.3l-1 4.2M744.1 416.7l-1 4.2M746 409.1l-1 4.2M747.8 401.5l-1 4.2M714.5 514.4l-1.2 4M716.6 507.3l-1.2 4M718.6 500.2l-1.2 4M720.7 493.1l-1.2 4M722.8 486l-1.2 4M724.8 478.9l-1.2 4M726.9 471.8l-1.2 4M729 464.7l-1.2 4M731 457.6l-1.2 4M733.1 450.5l-1.2 4M735.2 443.4l-1.2 4M737.2 436.3l-1.2 4M739.3 429.2l-1.2 4M741.4 422.1l-1.2 4M743.4 415l-1.2 4M745.5 407.9l-1.2 4M749.6 393.7l-1.2 4M711.1 506l-1.3 3.9M713.5 499.1l-1.3 3.9M715.8 492.2l-1.3 3.9M718.2 485.3l-1.3 3.9M720.5 478.3l-1.3 3.9M722.9 471.4l-1.3 3.9M725.3 464.5l-1.3 3.9M727.6 457.6l-1.3 3.9M730 450.7l-1.3 3.9M732.4 443.8l-1.3 3.9M733.7 439.9l-1.3 3.7M736 433.3l-1.3 3.7M738.2 426.6l-1.3 3.7M740.5 420l-1.3 3.7M742.8 413.4l-1.3 3.7M745 406.8l-1.3 3.7M747.3 400.2l-1.3 3.7M707.8 497.4l-1.5 3.8M710.5 490.6l-1.5 3.8M713.2 483.9l-1.5 3.8M715.9 477.1l-1.5 3.8M718.6 470.3l-1.5 3.8M721.4 463.5l-1.5 3.8M724.1 456.8l-1.5 3.8M726.8 450l-1.5 3.8M729.5 443.2l-1.5 3.8M732.3 436.3l-1.4 3.4M734.7 430.1l-1.4 3.4M737.2 424l-1.4 3.4M739.6 417.9l-1.4 3.4M742.1 411.7l-1.4 3.4M744.6 405.6l-1.4 3.4M704.6 488.8l-1.7 3.7M707.7 482.2l-1.7 3.7M710.7 475.6l-1.7 3.7M713.8 469l-1.7 3.7M716.9 462.4l-1.7 3.7M720 455.8l-1.7 3.7M723.1 449.2l-1.7 3.7M726.2 442.5l-1.7 3.7M729.3 435.9l-1.7 3.7M730.9 432.6l-1.5 3.2M733.5 427l-1.5 3.2M736.2 421.4l-1.5 3.2M738.8 415.7l-1.5 3.2M741.5 410.1l-1.5 3.2M744.1 404.4l-1.5 3.2M746.7 398.8l-1.5 3.2M701.4 480.2l-2 3.6M704.9 473.8l-2 3.6M708.4 467.4l-2 3.6M711.9 461l-2 3.6M715.5 454.6l-2 3.6M719 448.2l-2 3.6M722.5 441.8l-2 3.6M726 435.4l-2 3.6M729.5 429l-1.6 2.9M732.3 423.8l-1.6 2.9M735.2 418.7l-1.6 2.9M738 413.5l-1.6 2.9M740.8 408.4l-1.6 2.9M743.7 403.2l-1.6 2.9M749.3 392.9l-1.6 2.9M698.3 471.5l-2.2 3.4M702.3 465.4l-2.2 3.4M706.2 459.2l-2.2 3.4M710.2 453.1l-2.2 3.4M714.2 447l-2.2 3.4M718.1 440.8l-2.2 3.4M722.1 434.7l-2.2 3.4M726.1 428.6l-2.2 3.4M728.2 425.3l-1.7 2.6M731.2 420.7l-1.7 2.6M734.2 416l-1.7 2.6M737.2 411.3l-1.7 2.6M740.2 406.7l-1.7 2.6M743.2 402l-1.7 2.6M746.2 397.4l-1.7 2.6M695.3 462.8l-2.5 3.2M699.8 457l-2.5 3.2M704.2 451.2l-2.5 3.2M708.6 445.4l-2.5 3.2M713.1 439.6l-2.5 3.2M717.5 433.8l-2.5 3.2M722 428l-2.5 3.2M726.8 421.6l-1.8 2.3M730 417.5l-1.8 2.3M733.2 413.3l-1.8 2.3M736.4 409.1l-1.8 2.3M739.6 405l-1.8 2.3M742.8 400.8l-1.8 2.3M692.4 454l-2.8 3M697.3 448.7l-2.8 3M702.3 443.3l-2.8 3M707.2 437.9l-2.8 3M712.1 432.5l-2.8 3M717.1 427.2l-2.8 3M722 421.8l-2.8 3M725.6 417.9l-1.9 2M728.9 414.3l-1.9 2M732.3 410.6l-1.9 2M735.6 406.9l-1.9 2M739 403.3l-1.9 2M742.4 399.6l-1.9 2M745.7 396l-1.9 2M689.5 445.3l-3 2.7M695 440.4l-3 2.7M700.4 435.6l-3 2.7M705.9 430.7l-3 2.7M711.3 425.8l-3 2.7M716.7 421l-3 2.7M722.2 416.1l-3 2.7M724.3 414.2l-2 1.8M727.8 411l-2 1.8M731.4 407.9l-2 1.8M734.9 404.7l-2 1.8M738.4 401.6l-2 1.8M742 398.4l-2 1.8M749 392.1l-2 1.8M686.7 436.5l-3.3 2.4M692.7 432.3l-3.3 2.4M698.6 428l-3.3 2.4M704.5 423.8l-3.3 2.4M710.5 419.5l-3.3 2.4M716.4 415.3l-3.3 2.4M722.3 411l-3.3 2.4M726.8 407.8l-2.1 1.5M730.5 405.1l-2.1 1.5M734.2 402.5l-2.1 1.5M737.9 399.8l-2.1 1.5M741.6 397.2l-2.1 1.5M745.3 394.5l-2.1 1.5M684 427.8l-3.6 2M690.4 424.2l-3.6 2M696.8 420.7l-3.6 2M703.1 417.1l-3.6 2M709.5 413.6l-3.6 2M715.9 410l-3.6 2M721.9 406.7l-2.2 1.2M725.7 404.6l-2.2 1.2M729.6 402.4l-2.2 1.2M733.5 400.3l-2.2 1.2M737.3 398.1l-2.2 1.2M741.2 396l-2.2 1.2M681.3 419l-3.8 1.5M688.1 416.3l-3.8 1.5M694.9 413.5l-3.8 1.5M701.6 410.7l-3.8 1.5M708.4 408l-3.8 1.5M715.1 405.2l-3.8 1.5M720.7 402.9l-2.2 0.9M724.7 401.3l-2.2 0.9M728.7 399.7l-2.2 0.9M732.8 398l-2.2 0.9M736.8 396.4l-2.2 0.9M740.8 394.7l-2.2 0.9M744.8 393.1l-2.2 0.9M678.7 410.3l-3.9 1.1M685.8 408.4l-3.9 1.1M692.8 406.4l-3.9 1.1M699.8 404.5l-3.9 1.1M706.9 402.6l-3.9 1.1M713.9 400.7l-3.9 1.1M719.6 399.2l-2.3 0.6M723.7 398l-2.3 0.6M727.9 396.9l-2.3 0.6M732.1 395.8l-2.3 0.6M736.2 394.6l-2.3 0.6M740.4 393.5l-2.3 0.6M748.7 391.2l-2.3 0.6M676.1 401.5l-4 0.6M683.4 400.4l-4 0.6M690.6 399.4l-4 0.6M697.8 398.4l-4 0.6M705 397.3l-4 0.6M712.3 396.3l-4 0.6M718.5 395.4l-2.4 0.3M722.8 394.8l-2.4 0.3M727.1 394.1l-2.4 0.3M731.4 393.5l-2.4 0.3M735.7 392.9l-2.4 0.3M740.1 392.3l-2.4 0.3M744.4 391.6l-2.4 0.3M673.6 392.7l-4.1 0.1M680.9 392.5l-4.1 0.1M688.2 392.3l-4.1 0.1M695.5 392.1l-4.1 0.1M702.8 392l-4.1 0.1M710.1 391.8l-4.1 0.1M717.4 391.6l-2.5 0.1M721.9 391.5l-2.5 0.1M726.3 391.4l-2.5 0.1M730.8 391.3l-2.5 0.1M735.2 391.1l-2.5 0.1M739.7 391l-2.5 0.1M671.1 383.9l-4.1 -0.4M678.4 384.5l-4.1 -0.4M685.6 385.1l-4.1 -0.4M692.9 385.8l-4.1 -0.4M700.2 386.4l-4.1 -0.4M707.5 387l-4.1 -0.4M714.7 387.7l-4.1 -0.4M721 388.2l-2.6 -0.2M725.6 388.6l-2.6 -0.2M730.2 389l-2.6 -0.2M734.8 389.4l-2.6 -0.2M739.4 389.8l-2.6 -0.2M744 390.2l-2.6 -0.2M668.7 375l-4 -0.8M675.8 376.4l-4 -0.8M683 377.8l-4 -0.8M690.2 379.2l-4 -0.8M697.3 380.5l-4 -0.8M704.5 381.9l-4 -0.8M711.7 383.3l-4 -0.8M715.4 384l-2.7 -0.5M720.1 384.9l-2.7 -0.5M724.8 385.8l-2.7 -0.5M729.6 386.7l-2.7 -0.5M734.3 387.6l-2.7 -0.5M739 388.6l-2.7 -0.5M748.5 390.4l-2.7 -0.5M666.3 366.2l-3.9 -1.1M673.3 368.2l-3.9 -1.1M680.3 370.3l-3.9 -1.1M687.3 372.3l-3.9 -1.1M694.3 374.4l-3.9 -1.1M701.3 376.4l-3.9 -1.1M708.3 378.4l-3.9 -1.1M714.4 380.2l-2.7 -0.8M719.2 381.6l-2.7 -0.8M724.1 383.1l-2.7 -0.8M729 384.5l-2.7 -0.8M733.9 385.9l-2.7 -0.8M738.7 387.3l-2.7 -0.8M743.6 388.7l-2.7 -0.8M664 357.3l-3.8 -1.5M670.8 359.9l-3.8 -1.5M677.6 362.5l-3.8 -1.5M684.4 365.2l-3.8 -1.5M691.2 367.8l-3.8 -1.5M698 370.5l-3.8 -1.5M704.9 373.1l-3.8 -1.5M711.7 375.7l-3.8 -1.5M718.4 378.3l-2.8 -1.1M723.4 380.3l-2.8 -1.1M728.4 382.2l-2.8 -1.1M733.4 384.1l-2.8 -1.1M738.4 386.1l-2.8 -1.1M661.8 348.4l-3.7 -1.8M668.4 351.5l-3.7 -1.8M675 354.7l-3.7 -1.8M681.5 357.8l-3.7 -1.8M688.1 361l-3.7 -1.8M694.7 364.1l-3.7 -1.8M701.3 367.3l-3.7 -1.8M707.9 370.4l-3.7 -1.8M712.5 372.6l-2.9 -1.4M717.7 375.1l-2.9 -1.4M722.8 377.5l-2.9 -1.4M727.9 380l-2.9 -1.4M733 382.4l-2.9 -1.4M738.1 384.8l-2.9 -1.4M743.2 387.3l-2.9 -1.4M659.6 339.5l-3.6 -2M666 343l-3.6 -2M672.4 346.6l-3.6 -2M678.7 350.2l-3.6 -2M685.1 353.8l-3.6 -2M691.4 357.4l-3.6 -2M697.8 361l-3.6 -2M704.1 364.6l-3.6 -2M711.7 368.8l-2.9 -1.7M716.9 371.8l-2.9 -1.7M722.1 374.7l-2.9 -1.7M727.4 377.7l-2.9 -1.7M732.6 380.7l-2.9 -1.7M737.8 383.6l-2.9 -1.7M748.3 389.5l-2.9 -1.7M657.6 330.5l-3.4 -2.2M663.7 334.5l-3.4 -2.2M669.8 338.5l-3.4 -2.2M676 342.4l-3.4 -2.2M682.1 346.4l-3.4 -2.2M688.2 350.4l-3.4 -2.2M694.3 354.4l-3.4 -2.2M700.5 358.3l-3.4 -2.2M706.6 362.3l-3.4 -2.2M710.8 365l-3 -1.9M716.2 368.5l-3 -1.9M721.5 372l-3 -1.9M726.9 375.4l-3 -1.9M732.2 378.9l-3 -1.9M737.6 382.4l-3 -1.9M742.9 385.8l-3 -1.9M655.6 321.6l-3.3 -2.4M661.5 325.9l-3.3 -2.4M667.4 330.2l-3.3 -2.4M673.3 334.5l-3.3 -2.4M679.2 338.8l-3.3 -2.4M685.1 343.1l-3.3 -2.4M691 347.4l-3.3 -2.4M696.9 351.7l-3.3 -2.4M702.8 356l-3.3 -2.4M710 361.3l-3.1 -2.2M715.5 365.2l-3.1 -2.2M720.9 369.2l-3.1 -2.2M726.4 373.2l-3.1 -2.2M731.9 377.2l-3.1 -2.2M737.3 381.1l-3.1 -2.2M653.8 312.7l-3.2 -2.6M659.4 317.3l-3.2 -2.6M665.1 321.9l-3.2 -2.6M670.8 326.5l-3.2 -2.6M676.5 331l-3.2 -2.6M682.2 335.6l-3.2 -2.6M687.9 340.2l-3.2 -2.6M693.5 344.8l-3.2 -2.6M699.2 349.4l-3.2 -2.6M704.9 354l-3.2 -2.6M709.3 357.5l-3.1 -2.5M714.8 362l-3.1 -2.5M720.4 366.5l-3.1 -2.5M725.9 370.9l-3.1 -2.5M731.5 375.4l-3.1 -2.5M737.1 379.9l-3.1 -2.5M742.6 384.4l-3.1 -2.5M652 303.9l-3.2 -2.8M657.7 308.8l-3.2 -2.8M663.4 313.8l-3.2 -2.8M669 318.8l-3.2 -2.8M674.7 323.8l-3.2 -2.8M680.3 328.8l-3.2 -2.8M686 333.8l-3.2 -2.8M691.6 338.8l-3.2 -2.8M697.3 343.8l-3.2 -2.8M702.9 348.8l-3.2 -2.8M708.6 353.7l-3.2 -2.8M714.2 358.7l-3.2 -2.8M719.9 363.7l-3.2 -2.8M725.5 368.7l-3.2 -2.8M731.2 373.7l-3.2 -2.8M736.8 378.7l-3.2 -2.8M748.1 388.7l-3.2 -2.8M650.5 295.1l-3.2 -3.1M656.2 300.6l-3.2 -3.1M661.9 306.1l-3.2 -3.1M667.7 311.6l-3.2 -3.1M673.4 317l-3.2 -3.1M679.2 322.5l-3.2 -3.1M684.9 328l-3.2 -3.1M690.7 333.5l-3.2 -3.1M696.4 339l-3.2 -3.1M702.1 344.5l-3.2 -3.1M707.9 350l-3.2 -3.1M713.6 355.5l-3.2 -3.1M719.4 361l-3.2 -3.1M725.1 366.5l-3.2 -3.1M730.9 372l-3.2 -3.1M736.6 377.5l-3.2 -3.1M742.3 383l-3.2 -3.1M649 286.3l-3.3 -3.4M654.8 292.3l-3.3 -3.4M660.6 298.3l-3.3 -3.4M666.5 304.3l-3.3 -3.4M672.3 310.3l-3.3 -3.4M678.1 316.3l-3.3 -3.4M683.9 322.3l-3.3 -3.4M689.8 328.3l-3.3 -3.4M695.6 334.3l-3.3 -3.4M701.4 340.3l-3.3 -3.4M707.3 346.3l-3.3 -3.4M713.1 352.3l-3.3 -3.4M718.9 358.3l-3.3 -3.4M724.7 364.3l-3.3 -3.4M730.6 370.3l-3.3 -3.4M736.4 376.3l-3.3 -3.4M647.6 277.6l-3.3 -3.6M653.5 284.1l-3.3 -3.6M659.4 290.6l-3.3 -3.6M665.3 297.1l-3.3 -3.6M671.2 303.6l-3.3 -3.6M677.1 310.1l-3.3 -3.6M683 316.6l-3.3 -3.6M688.9 323.1l-3.3 -3.6M694.8 329.6l-3.3 -3.6M700.8 336.1l-3.3 -3.6M706.7 342.6l-3.3 -3.6M712.6 349.1l-3.3 -3.6M718.5 355.6l-3.3 -3.6M724.4 362.1l-3.3 -3.6M730.3 368.5l-3.3 -3.6M736.2 375l-3.3 -3.6M742.1 381.5l-3.3 -3.6M646.3 268.9l-3.4 -3.9M652.3 275.9l-3.4 -3.9M658.3 282.9l-3.4 -3.9M664.2 289.9l-3.4 -3.9M670.2 296.9l-3.4 -3.9M676.2 303.9l-3.4 -3.9M682.2 310.9l-3.4 -3.9M688.2 317.9l-3.4 -3.9M694.1 324.9l-3.4 -3.9M700.1 331.9l-3.4 -3.9M706.1 338.9l-3.4 -3.9M712.1 345.9l-3.4 -3.9M718.1 352.9l-3.4 -3.9M724.1 359.9l-3.4 -3.9M730 366.8l-3.4 -3.9M736 373.8l-3.4 -3.9M748 387.8l-3.4 -3.9M645.1 260.3l-3.4 -4.2M651.2 267.8l-3.4 -4.2M657.2 275.3l-3.4 -4.2M663.3 282.8l-3.4 -4.2M669.3 290.3l-3.4 -4.2M675.4 297.8l-3.4 -4.2M681.4 305.3l-3.4 -4.2M687.5 312.7l-3.4 -4.2M693.5 320.2l-3.4 -4.2M699.6 327.7l-3.4 -4.2M705.6 335.2l-3.4 -4.2M711.7 342.7l-3.4 -4.2M717.7 350.2l-3.4 -4.2M723.8 357.7l-3.4 -4.2M729.8 365.2l-3.4 -4.2M735.9 372.6l-3.4 -4.2M741.9 380.1l-3.4 -4.2M644.1 251.8l-3.4 -4.5M650.2 259.8l-3.4 -4.5M656.3 267.7l-3.4 -4.5M662.4 275.7l-3.4 -4.5M668.5 283.7l-3.4 -4.5M674.6 291.7l-3.4 -4.5M680.7 299.6l-3.4 -4.5M686.8 307.6l-3.4 -4.5M692.9 315.6l-3.4 -4.5M699 323.6l-3.4 -4.5M705.2 331.6l-3.4 -4.5M711.3 339.5l-3.4 -4.5M717.4 347.5l-3.4 -4.5M723.5 355.5l-3.4 -4.5M729.6 363.5l-3.4 -4.5M735.7 371.5l-3.4 -4.5M643.1 243.3l-3.5 -4.7M649.3 251.8l-3.5 -4.7M655.4 260.2l-3.5 -4.7M661.6 268.7l-3.5 -4.7M667.8 277.2l-3.5 -4.7M673.9 285.6l-3.5 -4.7M680.1 294.1l-3.5 -4.7M686.3 302.6l-3.5 -4.7M692.4 311l-3.5 -4.7M698.6 319.5l-3.5 -4.7M704.8 327.9l-3.5 -4.7M710.9 336.4l-3.5 -4.7M717.1 344.9l-3.5 -4.7M723.3 353.3l-3.5 -4.7M729.4 361.8l-3.5 -4.7M735.6 370.3l-3.5 -4.7M741.7 378.7l-3.5 -4.7M642.3 234.9l-3.5 -5M648.5 243.8l-3.5 -5M654.7 252.8l-3.5 -5M660.9 261.7l-3.5 -5M667.1 270.7l-3.5 -5M673.3 279.6l-3.5 -5M679.6 288.6l-3.5 -5M685.8 297.5l-3.5 -5M692 306.5l-3.5 -5M698.2 315.4l-3.5 -5M704.4 324.4l-3.5 -5M710.6 333.3l-3.5 -5M716.8 342.3l-3.5 -5M723 351.2l-3.5 -5M729.3 360.2l-3.5 -5M735.5 369.1l-3.5 -5M747.9 387l-3.5 -5M641.6 226.5l-3.5 -5.3M647.8 236l-3.5 -5.3M654.1 245.4l-3.5 -5.3M660.3 254.8l-3.5 -5.3M666.6 264.2l-3.5 -5.3M672.8 273.7l-3.5 -5.3M679.1 283.1l-3.5 -5.3M685.4 292.5l-3.5 -5.3M691.6 302l-3.5 -5.3M697.9 311.4l-3.5 -5.3M704.1 320.8l-3.5 -5.3M710.4 330.2l-3.5 -5.3M716.6 339.7l-3.5 -5.3M722.9 349.1l-3.5 -5.3M729.1 358.5l-3.5 -5.3M735.4 367.9l-3.5 -5.3M741.6 377.4l-3.5 -5.3M641 218.3l-3.5 -5.5M647.3 228.2l-3.5 -5.5M653.6 238.1l-3.5 -5.5M659.9 248l-3.5 -5.5M666.2 257.9l-3.5 -5.5M672.4 267.8l-3.5 -5.5M678.7 277.7l-3.5 -5.5M685 287.6l-3.5 -5.5M691.3 297.5l-3.5 -5.5M697.6 307.4l-3.5 -5.5M703.9 317.3l-3.5 -5.5M710.2 327.2l-3.5 -5.5M716.4 337.1l-3.5 -5.5M722.7 347l-3.5 -5.5M729 356.9l-3.5 -5.5M735.3 366.8l-3.5 -5.5M640.6 210.1l-3.5 -5.8M646.9 220.5l-3.5 -5.8M653.2 230.9l-3.5 -5.8M659.5 241.2l-3.5 -5.8M665.8 251.6l-3.5 -5.8M672.2 262l-3.5 -5.8M678.5 272.3l-3.5 -5.8M684.8 282.7l-3.5 -5.8M691.1 293.1l-3.5 -5.8M697.4 303.5l-3.5 -5.8M703.7 313.8l-3.5 -5.8M710 324.2l-3.5 -5.8M716.3 334.6l-3.5 -5.8M722.6 344.9l-3.5 -5.8M728.9 355.3l-3.5 -5.8M735.2 365.7l-3.5 -5.8M741.5 376l-3.5 -5.8M640.3 202.1l-3.5 -6.1M646.7 212.9l-3.5 -6.1M653 223.7l-3.5 -6.1M659.3 234.6l-3.5 -6.1M665.6 245.4l-3.5 -6.1M672 256.2l-3.5 -6.1M678.3 267.1l-3.5 -6.1M684.6 277.9l-3.5 -6.1M690.9 288.7l-3.5 -6.1M697.3 299.6l-3.5 -6.1M703.6 310.4l-3.5 -6.1M709.9 321.2l-3.5 -6.1M716.2 332.1l-3.5 -6.1M722.5 342.9l-3.5 -6.1M728.9 353.7l-3.5 -6.1M735.2 364.5l-3.5 -6.1M640.2 194.2l-3.5 -6.3M646.6 205.4l-3.5 -6.3M652.9 216.7l-3.5 -6.3M659.2 228l-3.5 -6.3M665.6 239.3l-3.5 -6.3M671.9 250.6l-3.5 -6.3M678.2 261.9l-3.5 -6.3M684.5 273.2l-3.5 -6.3M690.9 284.4l-3.5 -6.3M697.2 295.7l-3.5 -6.3M703.5 307l-3.5 -6.3M709.9 318.3l-3.5 -6.3M716.2 329.6l-3.5 -6.3M722.5 340.9l-3.5 -6.3M728.9 352.2l-3.5 -6.3M735.2 363.4l-3.5 -6.3M741.5 374.7l-3.5 -6.3M747.8 386l-3.5 -6.3"/></defs>
<use href="#bh" stroke="#55320f" stroke-width="1" fill="none" opacity="0.88"/>
<line x1="750.5" y1="390.8" x2="636.6" y2="186.4" stroke="#c8200a" stroke-width="1.9" stroke-dasharray="7 8"/>
<polyline points="636.8,201.2 636.6,193.1 636.6,185.2 636.7,177.6 636.9,170.3 637.4,163.3 638,156.7 638.7,150.4 639.6,144.4 640.7,138.8 641.9,133.5 643.3,128.7 644.9,124.1 646.5,120 648.4,116.3 650.4,112.9 652.5,110 654.8,107.4 657.2,105.3 659.7,103.5 662.4,102.2 665.2,101.3 668.1,100.8 671.1,100.7 674.3,101 677.5,101.8 680.9,102.9 684.3,104.5 687.9,106.5 691.5,108.9 695.3,111.6 699.1,114.8 702.9,118.4 706.9,122.4 710.9,126.7 715,131.5 719.1,136.6 723.3,142 727.5,147.9 731.7,154 736,160.5 740.2,167.4 744.5,174.5 748.8,182 753.2,189.7 757.5,197.8 761.8,206.1 766,214.7 770.3,223.5 774.5,232.6 778.7,241.9 782.9,251.5 787,261.2 791,271.1 795,281.2 799,291.4 802.8,301.8 806.6,312.3 810.3,322.9 813.9,333.6 817.5,344.4 820.9,355.2 824.2,366.1 827.5,377.1 830.6,388.1 833.6,399 836.5,410 839.3,420.9 841.9,431.8 844.4,442.6 846.8,453.4 849,464 851.1,474.6 853.1,485 854.9,495.3 856.5,505.5 858,515.5 859.4,525.3 860.6,534.9 861.6,544.3 862.5,553.5 863.2,562.5 863.7,571.2 864.1,579.7 864.4,587.8 864.4,595.7 864.3,603.4 864.1,610.7 863.7,617.7 863.1,624.3 862.3,630.7 861.4,636.7 860.4,642.3 859.2,647.6 857.8,652.5 856.3,657 854.6,661.2 852.8,665 850.8,668.4 848.7,671.3 846.4,673.9 844,676.1 841.5,677.9 838.8,679.2 836.1,680.2 833.1,680.7 830.1,680.8 827,680.5 823.7,679.8 820.4,678.7 816.9,677.2 813.4,675.2 809.8,672.9 806,670.1 802.2,666.9 798.4,663.4 794.4,659.5 790.4,655.1 786.3,650.4 782.2,645.4 778.1,639.9" fill="none" stroke="#1a1410" stroke-width="0.95"/>
<polygon points="636.6,186.4 638.1,194.3 639.5,202.1 640.9,209.7 642.2,217.2 643.4,224.6 644.5,231.8 645.6,238.9 646.5,245.8 647.4,252.6 648.2,259.2 648.9,265.7 649.6,272 650.1,278.2 650.6,284.2 651,290.1 651.3,295.9 651.6,301.5 651.7,307 651.8,312.3 651.8,317.5 652.8,321.6 651.3,314 649.8,306.4 648.4,299 647.1,291.6 645.8,284.2 644.6,277 643.5,269.8 642.5,262.7 641.6,255.7 640.7,248.8 639.9,242 639.2,235.3 638.6,228.8 638.1,222.3 637.6,216 637.2,209.8 636.9,203.7 636.7,197.8 636.6,192 636.6,186.4" fill="#62cf5c"/>
<polyline points="702.4,494.7 703.7,496.4 705,498.1 706.2,499.8 707.4,501.4 708.5,503 709.6,504.5 710.6,506 711.5,507.5 712.4,508.8 713.2,510.1 714,511.3 714.6,512.4 715.2,513.4 715.7,514.2 716.1,514.9 716.4,515.4 716.6,515.8 716.6,515.7 712.7,517.8 712.5,517.5 712.2,516.8 711.7,515.8 711,514.4 710.2,512.6 709.1,510.4 707.9,507.5 706.3,504.1 704.5,499.8 702.3,494.5 699.7,487.9" fill="none" stroke="#d2a683" stroke-width="3.6" opacity="0.85"/>
<polyline points="775.8,633.4 772.7,629 769.6,624.3 766.5,619.5 763.3,614.5 760.2,609.3 757,604 753.8,598.4 750.7,592.8 747.5,586.9 744.3,580.9 741.2,574.8 738,568.5 734.9,562 731.7,555.5 728.6,548.8 725.5,541.9 722.5,535 719.4,527.9 716.4,520.8 713.4,513.5 710.4,506.2 707.5,498.7 704.6,491.2 701.7,483.5 698.9,475.9 696.1,468.1 693.4,460.3 690.7,452.4 688,444.5 685.4,436.5 682.9,428.5 680.4,420.5 678,412.4 675.6,404.4 673.3,396.3 671,388.2 668.8,380.1 666.7,372.1 664.6,364 662.7,355.9" fill="none" stroke="#cfa07c" stroke-width="4" opacity="0.9"/>
<defs><linearGradient id="horn" gradientUnits="userSpaceOnUse" x1="640" y1="370" x2="690" y2="500"><stop offset="0" stop-color="#e2a56e"/><stop offset="0.4" stop-color="#ecb585"/><stop offset="0.75" stop-color="#dba06c"/><stop offset="1" stop-color="#c08a58"/></linearGradient></defs>
<g fill="url(#horn)" opacity="0.96"><circle r="1" transform="matrix(-12.66 -22.71 0 -22.87 626.5 427.8)"/><circle r="1" transform="matrix(-12.69 -22.76 0 -22.92 628.6 427.2)"/><circle r="1" transform="matrix(-12.78 -22.92 0 -23.08 630.7 426.5)"/><circle r="1" transform="matrix(-12.92 -23.18 0 -23.35 632.8 425.9)"/><circle r="1" transform="matrix(-13.13 -23.55 0 -23.72 634.9 425.3)"/><circle r="1" transform="matrix(-13.39 -24.02 0 -24.19 637 424.7)"/><circle r="1" transform="matrix(-13.71 -24.6 0 -24.77 639.1 424)"/><circle r="1" transform="matrix(-14.09 -25.28 0 -25.46 641.3 423.4)"/><circle r="1" transform="matrix(-14.53 -26.07 0 -26.25 643.4 422.8)"/><circle r="1" transform="matrix(-15.03 -26.96 0 -27.15 645.5 422.1)"/><circle r="1" transform="matrix(-15.59 -27.96 0 -28.16 647.6 421.5)"/><circle r="1" transform="matrix(-16.2 -29.06 0 -29.27 649.7 420.9)"/><circle r="1" transform="matrix(-16.87 -30.27 0 -30.48 651.8 420.2)"/><circle r="1" transform="matrix(-17.61 -31.58 0 -31.81 653.9 419.6)"/><circle r="1" transform="matrix(-18.4 -33 0 -33.23 656 419)"/><circle r="1" transform="matrix(-19.25 -34.52 0 -34.77 658.1 418.4)"/><circle r="1" transform="matrix(-20.15 -36.15 0 -36.41 660.2 417.7)"/><circle r="1" transform="matrix(-21.12 -37.88 0 -38.15 662.3 417.1)"/><circle r="1" transform="matrix(-22.14 -39.72 0 -40 664.4 416.5)"/><circle r="1" transform="matrix(-23.23 -41.66 0 -41.96 666.6 415.8)"/><circle r="1" transform="matrix(-24.37 -43.71 0 -44.02 668.7 415.2)"/><circle r="1" transform="matrix(-25.57 -45.86 0 -46.19 670.8 414.6)"/><circle r="1" transform="matrix(-26.83 -48.12 0 -48.46 672.9 413.9)"/><circle r="1" transform="matrix(-28.14 -50.49 0 -50.84 675 413.3)"/><circle r="1" transform="matrix(-29.52 -52.95 0 -53.33 677.1 412.7)"/><circle r="1" transform="matrix(-30.95 -55.53 0 -55.92 679.2 412.1)"/><circle r="1" transform="matrix(-32.45 -58.2 0 -58.61 681.3 411.4)"/><circle r="1" transform="matrix(-34 -60.99 0 -61.42 683.4 410.8)"/><circle r="1" transform="matrix(-35.61 -63.87 0 -64.32 685.5 410.2)"/><circle r="1" transform="matrix(-37.28 -66.87 0 -67.34 687.6 409.5)"/><circle r="1" transform="matrix(-39 -69.96 0 -70.46 689.7 408.9)"/></g>
<clipPath id="cslice0"><polygon points="650.7,338.9 650.8,334.2 651.1,329.8 651.6,325.8 652.2,322.2 653.1,319.1 654.1,316.3 655.3,314.1 656.7,312.2 658.2,310.9 659.9,310 661.7,309.6 663.6,309.7 665.7,310.3 667.9,311.4 670.2,312.9 672.6,314.9 675.1,317.4 677.7,320.3 680.3,323.6 683,327.4 685.7,331.5 688.4,336.1 691.1,340.9 693.8,346.2 696.5,351.7 699.2,357.5 701.8,363.5 704.4,369.8 706.8,376.3 709.2,382.9 711.6,389.6 713.8,396.5 715.8,403.4 717.8,410.3 719.6,417.2 721.3,424.1 722.8,430.9 724.2,437.6 725.4,444.2 726.4,450.6 727.2,456.7 727.9,462.7 728.4,468.4 728.6,473.8 728.7,478.9 728.6,483.6 728.4,488 727.9,492 727.2,495.6 726.4,498.8 725.4,501.5 724.2,503.8 722.8,505.6 721.3,506.9 719.6,507.8 717.8,508.2 715.8,508.1 713.8,507.5 711.6,506.4 709.2,504.9 706.8,502.9 704.4,500.4 701.8,497.5 699.2,494.2 696.5,490.4 693.8,486.3 691.1,481.8 688.4,476.9 685.7,471.7 683,466.1 680.3,460.3 677.7,454.3 675.1,448 672.6,441.6 670.2,434.9 667.9,428.2 665.7,421.4 663.6,414.5 661.7,407.5 659.9,400.6 658.2,393.7 656.7,386.9 655.3,380.2 654.1,373.7 653.1,367.3 652.2,361.1 651.6,355.1 651.1,349.4 650.8,344 650.7,338.9" /></clipPath>
<polygon points="650.7,338.9 650.8,334.2 651.1,329.8 651.6,325.8 652.2,322.2 653.1,319.1 654.1,316.3 655.3,314.1 656.7,312.2 658.2,310.9 659.9,310 661.7,309.6 663.6,309.7 665.7,310.3 667.9,311.4 670.2,312.9 672.6,314.9 675.1,317.4 677.7,320.3 680.3,323.6 683,327.4 685.7,331.5 688.4,336.1 691.1,340.9 693.8,346.2 696.5,351.7 699.2,357.5 701.8,363.5 704.4,369.8 706.8,376.3 709.2,382.9 711.6,389.6 713.8,396.5 715.8,403.4 717.8,410.3 719.6,417.2 721.3,424.1 722.8,430.9 724.2,437.6 725.4,444.2 726.4,450.6 727.2,456.7 727.9,462.7 728.4,468.4 728.6,473.8 728.7,478.9 728.6,483.6 728.4,488 727.9,492 727.2,495.6 726.4,498.8 725.4,501.5 724.2,503.8 722.8,505.6 721.3,506.9 719.6,507.8 717.8,508.2 715.8,508.1 713.8,507.5 711.6,506.4 709.2,504.9 706.8,502.9 704.4,500.4 701.8,497.5 699.2,494.2 696.5,490.4 693.8,486.3 691.1,481.8 688.4,476.9 685.7,471.7 683,466.1 680.3,460.3 677.7,454.3 675.1,448 672.6,441.6 670.2,434.9 667.9,428.2 665.7,421.4 663.6,414.5 661.7,407.5 659.9,400.6 658.2,393.7 656.7,386.9 655.3,380.2 654.1,373.7 653.1,367.3 652.2,361.1 651.6,355.1 651.1,349.4 650.8,344 650.7,338.9" fill="#96642f" opacity="0.95"/>
<g clip-path="url(#cslice0)"><polygon points="664.2,341.9 664.3,337.2 664.6,332.8 665.1,328.8 665.7,325.2 666.6,322.1 667.6,319.3 668.8,317.1 670.2,315.2 671.7,313.9 673.4,313 675.2,312.6 677.1,312.7 679.2,313.3 681.4,314.4 683.7,315.9 686.1,317.9 688.6,320.4 691.2,323.3 693.8,326.6 696.5,330.4 699.2,334.5 701.9,339.1 704.6,343.9 707.3,349.2 710,354.7 712.7,360.5 715.3,366.5 717.9,372.8 720.3,379.3 722.7,385.9 725.1,392.6 727.3,399.5 729.3,406.4 731.3,413.3 733.1,420.2 734.8,427.1 736.3,433.9 737.7,440.6 738.9,447.2 739.9,453.6 740.7,459.7 741.4,465.7 741.9,471.4 742.1,476.8 742.2,481.9 742.1,486.6 741.9,491 741.4,495 740.7,498.6 739.9,501.8 738.9,504.5 737.7,506.8 736.3,508.6 734.8,509.9 733.1,510.8 731.3,511.2 729.3,511.1 727.3,510.5 725.1,509.4 722.7,507.9 720.3,505.9 717.9,503.4 715.3,500.5 712.7,497.2 710,493.4 707.3,489.3 704.6,484.8 701.9,479.9 699.2,474.7 696.5,469.1 693.8,463.3 691.2,457.3 688.6,451 686.1,444.6 683.7,437.9 681.4,431.2 679.2,424.4 677.1,417.5 675.2,410.5 673.4,403.6 671.7,396.7 670.2,389.9 668.8,383.2 667.6,376.7 666.6,370.3 665.7,364.1 665.1,358.1 664.6,352.4 664.3,347 664.2,341.9" fill="#785230"/></g>
<clipPath id="cslice"><polygon points="650.7,338.9 650.8,334.2 651.1,329.8 651.6,325.8 652.2,322.2 653.1,319.1 654.1,316.3 655.3,314.1 656.7,312.2 658.2,310.9 659.9,310 661.7,309.6 663.6,309.7 665.7,310.3 667.9,311.4 670.2,312.9 672.6,314.9 675.1,317.4 677.7,320.3 680.3,323.6 683,327.4 685.7,331.5 688.4,336.1 691.1,340.9 693.8,346.2 696.5,351.7 699.2,357.5 701.8,363.5 704.4,369.8 706.8,376.3 709.2,382.9 711.6,389.6 713.8,396.5 715.8,403.4 717.8,410.3 719.6,417.2 721.3,424.1 722.8,430.9 724.2,437.6 725.4,444.2 726.4,450.6 727.2,456.7 727.9,462.7 728.4,468.4 728.6,473.8 728.7,478.9 728.6,483.6 728.4,488 727.9,492 727.2,495.6 726.4,498.8 725.4,501.5 724.2,503.8 722.8,505.6 721.3,506.9 719.6,507.8 717.8,508.2 715.8,508.1 713.8,507.5 711.6,506.4 709.2,504.9 706.8,502.9 704.4,500.4 701.8,497.5 699.2,494.2 696.5,490.4 693.8,486.3 691.1,481.8 688.4,476.9 685.7,471.7 683,466.1 680.3,460.3 677.7,454.3 675.1,448 672.6,441.6 670.2,434.9 667.9,428.2 665.7,421.4 663.6,414.5 661.7,407.5 659.9,400.6 658.2,393.7 656.7,386.9 655.3,380.2 654.1,373.7 653.1,367.3 652.2,361.1 651.6,355.1 651.1,349.4 650.8,344 650.7,338.9" /></clipPath>
<g clip-path="url(#cslice)"><use href="#bh" stroke="#3f2810" stroke-width="0.95" fill="none" opacity="0.45"/></g>
<polyline points="659.9,310 660.9,309.7 662.1,309.6 663.2,309.7 664.5,309.9 665.7,310.3 667,310.9 668.4,311.6 669.8,312.6 671.2,313.7 672.6,314.9 674.1,316.3 675.6,317.9 677.2,319.7 678.7,321.6 680.3,323.6 681.9,325.8 683.5,328.2 685.1,330.7 686.7,333.3 688.4,336.1 690,338.9 691.6,342 693.3,345.1 694.9,348.3 696.5,351.7 698.1,355.1 699.7,358.7 701.3,362.3 702.8,366 704.4,369.8 705.9,373.6 707.3,377.6 708.8,381.5 710.2,385.6 711.6,389.6 712.9,393.7 714.2,397.8 715.4,402 716.6,406.1 717.8,410.3 718.9,414.5 720,418.6 721,422.7 721.9,426.8 722.8,430.9 723.7,434.9 724.4,438.9 725.1,442.9 725.8,446.7 726.4,450.6 726.9,454.3 727.4,458 727.8,461.5 728.1,465 728.4,468.4 728.6,471.7 728.7,474.8 728.7,477.9 728.7,480.8 728.6,483.6 728.5,486.3 728.3,488.8 728,491.2 727.6,493.5 727.2,495.6 726.7,497.5 726.2,499.3 725.6,501 724.9,502.5 724.2,503.8 723.4,504.9 722.5,505.9 721.6,506.7 720.6,507.3 719.6,507.8 718.5,508.1 717.4,508.2 716.2,508.1 715,507.9 713.8,507.5" fill="none" stroke="#2b3440" stroke-width="3" stroke-dasharray="7 4.5"/>
<line x1="642" y1="423.2" x2="688.5" y2="409.3" stroke="#c8300e" stroke-width="2" stroke-dasharray="8 7" opacity="0.95"/>
<line x1="694.7" y1="407.4" x2="719.5" y2="400" stroke="#8c4a20" stroke-width="2.4" stroke-dasharray="8 7"/>
<line x1="724.1" y1="398.6" x2="811" y2="372.7" stroke="#c8200a" stroke-width="2.4" stroke-dasharray="8 7"/>
<ellipse cx="688.5" cy="409.3" rx="2.4" ry="4.6" fill="#d02008" transform="rotate(-12 688.5 409.3)"/>
<ellipse cx="750.5" cy="390.8" rx="2.4" ry="4.6" fill="#d02008" transform="rotate(-12 750.5 390.8)"/>
<ellipse cx="812.5" cy="372.2" rx="2.4" ry="4.6" fill="#d02008" transform="rotate(-12 812.5 372.2)"/>
<line x1="667" y1="500.5" x2="627.1" y2="428.9" stroke="#0a640a" stroke-width="2.8"/>
<circle cx="651.8" cy="473.2" r="5.6" fill="#0a640a"/>
<polyline points="613.8,405.1 616.9,404.1 619.8,402.8 622.6,401.3 625.2,399.6 627.8,397.6 630.2,395.4 632.4,393 634.6,390.4 636.6,387.6 638.5,384.5 640.3,381.2 641.9,377.6 643.4,373.9 644.8,369.9 646.1,365.7 647.2,361.2 648.2,356.5 649.1,351.6 649.9,346.5 650.5,341.2 651,335.6 651.4,329.8 651.7,323.7 651.8,317.5 651.8,311 651.6,304.3 651.4,297.3 651,290.1 650.5,282.7 649.9,275.1 649.1,267.3 648.2,259.2 647.2,250.9 646.1,242.3 644.8,233.6 643.4,224.6 641.9,215.4 640.2,205.9 638.5,196.3 636.6,186.4" fill="none" stroke="#2e3e63" stroke-width="2.5" stroke-dasharray="7 5" opacity="0.8"/>
<polygon points="614.7,406.7 614.8,404.6 615,402.7 615.3,401.1 615.7,399.9 616.3,398.9 617,398.2 617.8,397.9 618.6,397.9 619.6,398.2 620.6,398.8 621.7,399.8 622.9,401 624.1,402.6 625.3,404.4 626.5,406.5 627.7,408.9 628.9,411.4 630.1,414.1 631.3,417 632.4,419.9 633.4,423 634.4,426.1 635.2,429.3 636,432.4 636.7,435.5 637.3,438.4 637.7,441.3 638,444 638.2,446.6 638.3,448.9 638.2,451 638,452.9 637.7,454.5 637.3,455.7 636.7,456.7 636,457.4 635.2,457.7 634.4,457.7 633.4,457.4 632.4,456.8 631.3,455.8 630.1,454.6 628.9,453 627.7,451.2 626.5,449.1 625.3,446.7 624.1,444.2 622.9,441.5 621.7,438.6 620.6,435.7 619.6,432.6 618.6,429.5 617.8,426.3 617,423.2 616.3,420.1 615.7,417.2 615.3,414.3 615,411.6 614.8,409 614.7,406.7" fill="#363636" opacity="0.95"/>
<polyline points="614.7,406.7 614.8,404.6 615,402.7 615.3,401.1 615.7,399.9 616.3,398.9 617,398.2 617.8,397.9 618.6,397.9 619.6,398.2 620.6,398.8 621.7,399.8 622.9,401 624.1,402.6 625.3,404.4 626.5,406.5 627.7,408.9 628.9,411.4 630.1,414.1 631.3,417 632.4,419.9 633.4,423 634.4,426.1 635.2,429.3 636,432.4 636.7,435.5 637.3,438.4 637.7,441.3 638,444 638.2,446.6 638.3,448.9 638.2,451 638,452.9 637.7,454.5 637.3,455.7 636.7,456.7 636,457.4 635.2,457.7 634.4,457.7 633.4,457.4 632.4,456.8 631.3,455.8 630.1,454.6 628.9,453 627.7,451.2 626.5,449.1 625.3,446.7 624.1,444.2 622.9,441.5 621.7,438.6 620.6,435.7 619.6,432.6 618.6,429.5 617.8,426.3 617,423.2 616.3,420.1 615.7,417.2 615.3,414.3 615,411.6 614.8,409 614.7,406.7" fill="none" stroke="#2a2a2a" stroke-width="1.2" stroke-dasharray="3 2"/>
<line x1="595.5" y1="437.1" x2="626.5" y2="427.8" stroke="#d60000" stroke-width="3.1"/>
<line x1="637.9" y1="448.2" x2="626.5" y2="427.8" stroke="#0a640a" stroke-width="2.8"/>
<line x1="626.5" y1="629.1" x2="626.5" y2="203.7" stroke="#0000d6" stroke-width="3.3"/>
<polygon points="626.5,188.8 621.2,205.5 631.8,205.5" fill="#0000d6"/>
<circle cx="626.5" cy="610.8" r="5.6" fill="#0000d6"/>
<circle cx="626.5" cy="565" r="5.6" fill="#0000d6"/>
<circle cx="626.5" cy="519.3" r="5.6" fill="#0000d6"/>
<circle cx="626.5" cy="473.5" r="5.6" fill="#0000d6"/>
<circle cx="626.5" cy="382.1" r="5.6" fill="#0000d6"/>
<circle cx="626.5" cy="336.3" r="5.6" fill="#0000d6"/>
<circle cx="626.5" cy="290.6" r="5.6" fill="#0000d6"/>
<circle cx="626.5" cy="244.8" r="5.6" fill="#0000d6"/>
<g font-family="Liberation Sans, sans-serif" font-weight="bold"><text x="384.5" y="522.7" fill="#ff6a6a" font-size="9.3" text-anchor="middle" >-8</text><text x="446.5" y="504.2" fill="#ff6a6a" font-size="9.3" text-anchor="middle" >-6</text><text x="508.5" y="485.6" fill="#ff6a6a" font-size="9.3" text-anchor="middle" >-4</text><text x="570.5" y="467.1" fill="#ff6a6a" font-size="9.3" text-anchor="middle" >-2</text><text x="694.5" y="430.1" fill="#ff6a6a" font-size="9.3" text-anchor="middle" opacity="0.55">2</text><text x="818.5" y="393" fill="#ff6a6a" font-size="9.3" text-anchor="middle" opacity="0.55">6</text><text x="880.5" y="374.5" fill="#ff6a6a" font-size="9.3" text-anchor="middle" >8</text><text x="942.5" y="356" fill="#ff6a6a" font-size="9.3" text-anchor="middle" >10</text><text x="1004.5" y="337.5" fill="#ff6a6a" font-size="9.3" text-anchor="middle" >12</text><text x="1066.5" y="319" fill="#ff6a6a" font-size="9.3" text-anchor="middle" >14</text><text x="1128.5" y="300.4" fill="#ff6a6a" font-size="9.3" text-anchor="middle" >16</text><text x="1141.7" y="262" fill="#ff6a6a" font-size="9.3" text-anchor="middle" >x</text><text x="739.3" y="670.1" fill="#80bd80" font-size="9.3" text-anchor="middle" >-10</text><text x="716.5" y="624.7" fill="#80bd80" font-size="9.3" text-anchor="middle" >-8</text><text x="691.2" y="579.3" fill="#80bd80" font-size="9.3" text-anchor="middle" >-6</text><text x="665.8" y="533.8" fill="#80bd80" font-size="9.3" text-anchor="middle" >-4</text><text x="640.5" y="488.4" fill="#80bd80" font-size="9.3" text-anchor="middle" >-2</text><text x="589.7" y="399.4" fill="#3aa040" font-size="9.3" text-anchor="middle" opacity="0.85">2</text><text x="564.4" y="354" fill="#3aa040" font-size="9.3" text-anchor="middle" opacity="0.85">4</text><text x="513.7" y="263.1" fill="#3aa040" font-size="9.3" text-anchor="middle" opacity="0.85">8</text><text x="485.2" y="217.7" fill="#3aa040" font-size="9.3" text-anchor="middle" opacity="0.85">10</text><text x="459.9" y="172.3" fill="#3aa040" font-size="9.3" text-anchor="middle" opacity="0.85">12</text><text x="614.8" y="444.3" fill="#80bd80" font-size="9.3" text-anchor="middle" >0</text><text x="617.5" y="611.1" fill="#8585ff" font-size="9.3" text-anchor="end" >-8</text><text x="617.5" y="565.3" fill="#8585ff" font-size="9.3" text-anchor="end" >-6</text><text x="617.5" y="519.6" fill="#8585ff" font-size="9.3" text-anchor="end" >-4</text><text x="617.5" y="473.8" fill="#8585ff" font-size="9.3" text-anchor="end" >-2</text><text x="617.5" y="428.1" fill="#8585ff" font-size="9.3" text-anchor="end" >0</text><text x="617.5" y="382.4" fill="#9a9aff" font-size="9.3" text-anchor="end" >2</text><text x="617.5" y="336.6" fill="#9a9aff" font-size="9.3" text-anchor="end" >4</text><text x="617.5" y="290.9" fill="#9a9aff" font-size="9.3" text-anchor="end" >6</text><text x="617.5" y="245.1" fill="#9a9aff" font-size="9.3" text-anchor="end" >8</text><text x="617.5" y="199.4" fill="#9a9aff" font-size="9.3" text-anchor="end" >10</text><text x="636" y="211" fill="#9a9aff" font-size="9.3" text-anchor="middle" >z</text></g></svg>
</body>
</html>
